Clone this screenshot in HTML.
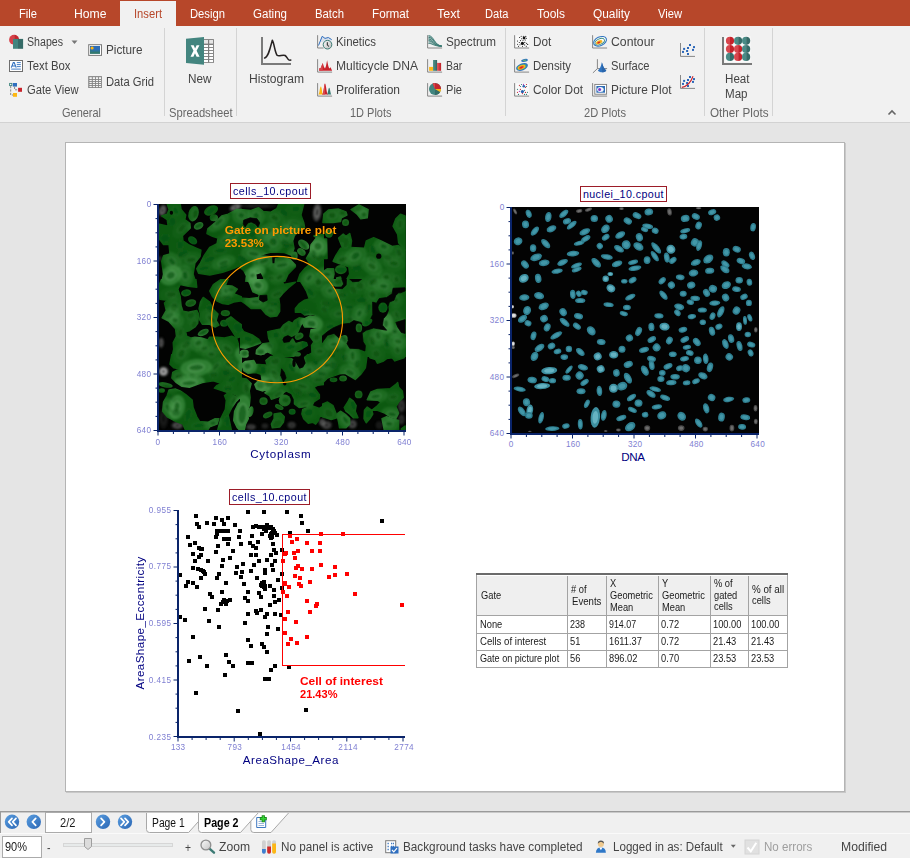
<!DOCTYPE html><html><head><meta charset="utf-8"><title>Layout</title><style>
*{box-sizing:border-box;margin:0;padding:0}
html,body{width:910px;height:858px;overflow:hidden;background:#e5e5e5}
body{position:relative;font-family:"Liberation Sans",sans-serif;font-size:13px;color:#444}
.abs{position:absolute}
.t{position:absolute;white-space:nowrap;line-height:16px;height:16px}
#tabbar{position:absolute;left:0;top:0;width:910px;height:26px;background:#b7472a}
#ribbon{position:absolute;left:0;top:26px;width:910px;height:97px;background:#f1f1f1;border-bottom:1px solid #d2d2d2}
.sep{position:absolute;width:1px;background:#d4d4d4;top:28px;height:88px}
#page{position:absolute;left:65px;top:142px;width:780px;height:650px;background:#fff;border:1px solid #b4b4b4;box-shadow:1px 1px 0 #c8c8c8}
#bottom{position:absolute;left:0;top:811px;width:910px;height:47px;background:#f0f0f0;border-top:1px solid #9a9a9a}
svg{position:absolute;overflow:visible}
</style></head><body>
<div id="tabbar"></div>
<div class="abs" style="left:120px;top:1px;width:56px;height:25px;background:#f1f1f1"></div>
<div class="t" style="left:19px;top:6px;font-size:12.5px;color:#fff;font-family:'Liberation Sans',sans-serif;transform:scaleX(0.8937);transform-origin:0 0;">File</div>
<div class="t" style="left:73.5px;top:6px;font-size:12.5px;color:#fff;font-family:'Liberation Sans',sans-serif;transform:scaleX(0.9748);transform-origin:0 0;">Home</div>
<div class="t" style="left:133.5px;top:6px;font-size:12.5px;color:#b7472a;font-family:'Liberation Sans',sans-serif;transform:scaleX(0.8957);transform-origin:0 0;">Insert</div>
<div class="t" style="left:189.5px;top:6px;font-size:12.5px;color:#fff;font-family:'Liberation Sans',sans-serif;transform:scaleX(0.8996);transform-origin:0 0;">Design</div>
<div class="t" style="left:252.5px;top:6px;font-size:12.5px;color:#fff;font-family:'Liberation Sans',sans-serif;transform:scaleX(0.9233);transform-origin:0 0;">Gating</div>
<div class="t" style="left:314.5px;top:6px;font-size:12.5px;color:#fff;font-family:'Liberation Sans',sans-serif;transform:scaleX(0.9073);transform-origin:0 0;">Batch</div>
<div class="t" style="left:371.5px;top:6px;font-size:12.5px;color:#fff;font-family:'Liberation Sans',sans-serif;transform:scaleX(0.9347);transform-origin:0 0;">Format</div>
<div class="t" style="left:436.5px;top:6px;font-size:12.5px;color:#fff;font-family:'Liberation Sans',sans-serif;transform:scaleX(1.0033);transform-origin:0 0;">Text</div>
<div class="t" style="left:485px;top:6px;font-size:12.5px;color:#fff;font-family:'Liberation Sans',sans-serif;transform:scaleX(0.8901);transform-origin:0 0;">Data</div>
<div class="t" style="left:536.5px;top:6px;font-size:12.5px;color:#fff;font-family:'Liberation Sans',sans-serif;transform:scaleX(0.9596);transform-origin:0 0;">Tools</div>
<div class="t" style="left:592.5px;top:6px;font-size:12.5px;color:#fff;font-family:'Liberation Sans',sans-serif;transform:scaleX(0.9511);transform-origin:0 0;">Quality</div>
<div class="t" style="left:657.5px;top:6px;font-size:12.5px;color:#fff;font-family:'Liberation Sans',sans-serif;transform:scaleX(0.8933);transform-origin:0 0;">View</div>
<div id="ribbon"></div>
<div class="t" style="left:26.7px;top:34px;font-size:12.5px;color:#444;font-family:'Liberation Sans',sans-serif;transform:scaleX(0.8492);transform-origin:0 0;">Shapes</div>
<div class="t" style="left:26.7px;top:58px;font-size:12.5px;color:#444;font-family:'Liberation Sans',sans-serif;transform:scaleX(0.9075);transform-origin:0 0;">Text Box</div>
<div class="t" style="left:26.7px;top:82px;font-size:12.5px;color:#444;font-family:'Liberation Sans',sans-serif;transform:scaleX(0.8966);transform-origin:0 0;">Gate View</div>
<div class="t" style="left:105.7px;top:42px;font-size:12.5px;color:#444;font-family:'Liberation Sans',sans-serif;transform:scaleX(0.9382);transform-origin:0 0;">Picture</div>
<div class="t" style="left:105.7px;top:74px;font-size:12.5px;color:#444;font-family:'Liberation Sans',sans-serif;transform:scaleX(0.8974);transform-origin:0 0;">Data Grid</div>
<div class="t" style="left:61.5px;top:105px;font-size:12.5px;color:#666;font-family:'Liberation Sans',sans-serif;transform:scaleX(0.8771);transform-origin:0 0;">General</div>
<div class="sep" style="left:164px"></div>
<div class="t" style="left:187.7px;top:71px;font-size:12.5px;color:#444;font-family:'Liberation Sans',sans-serif;transform:scaleX(0.9398);transform-origin:0 0;">New</div>
<div class="t" style="left:168.5px;top:105px;font-size:12.5px;color:#666;font-family:'Liberation Sans',sans-serif;transform:scaleX(0.8959);transform-origin:0 0;">Spreadsheet</div>
<div class="sep" style="left:236px"></div>
<div class="t" style="left:248.7px;top:71px;font-size:12.5px;color:#444;font-family:'Liberation Sans',sans-serif;transform:scaleX(0.9657);transform-origin:0 0;">Histogram</div>
<div class="t" style="left:335.7px;top:34px;font-size:12.5px;color:#444;font-family:'Liberation Sans',sans-serif;transform:scaleX(0.9139);transform-origin:0 0;">Kinetics</div>
<div class="t" style="left:335.7px;top:58px;font-size:12.5px;color:#444;font-family:'Liberation Sans',sans-serif;transform:scaleX(0.9677);transform-origin:0 0;">Multicycle DNA</div>
<div class="t" style="left:335.7px;top:82px;font-size:12.5px;color:#444;font-family:'Liberation Sans',sans-serif;transform:scaleX(0.9596);transform-origin:0 0;">Proliferation</div>
<div class="t" style="left:445.5px;top:34px;font-size:12.5px;color:#444;font-family:'Liberation Sans',sans-serif;transform:scaleX(0.9348);transform-origin:0 0;">Spectrum</div>
<div class="t" style="left:445.5px;top:58px;font-size:12.5px;color:#444;font-family:'Liberation Sans',sans-serif;transform:scaleX(0.8380);transform-origin:0 0;">Bar</div>
<div class="t" style="left:445.5px;top:82px;font-size:12.5px;color:#444;font-family:'Liberation Sans',sans-serif;transform:scaleX(0.8856);transform-origin:0 0;">Pie</div>
<div class="t" style="left:350px;top:105px;font-size:12.5px;color:#666;font-family:'Liberation Sans',sans-serif;transform:scaleX(0.8785);transform-origin:0 0;">1D Plots</div>
<div class="sep" style="left:505px"></div>
<div class="t" style="left:532.7px;top:34px;font-size:12.5px;color:#444;font-family:'Liberation Sans',sans-serif;transform:scaleX(0.9408);transform-origin:0 0;">Dot</div>
<div class="t" style="left:532.7px;top:58px;font-size:12.5px;color:#444;font-family:'Liberation Sans',sans-serif;transform:scaleX(0.9117);transform-origin:0 0;">Density</div>
<div class="t" style="left:532.7px;top:82px;font-size:12.5px;color:#444;font-family:'Liberation Sans',sans-serif;transform:scaleX(0.9471);transform-origin:0 0;">Color Dot</div>
<div class="t" style="left:610.7px;top:34px;font-size:12.5px;color:#444;font-family:'Liberation Sans',sans-serif;transform:scaleX(0.9783);transform-origin:0 0;">Contour</div>
<div class="t" style="left:610.7px;top:58px;font-size:12.5px;color:#444;font-family:'Liberation Sans',sans-serif;transform:scaleX(0.8938);transform-origin:0 0;">Surface</div>
<div class="t" style="left:610.7px;top:82px;font-size:12.5px;color:#444;font-family:'Liberation Sans',sans-serif;transform:scaleX(0.9466);transform-origin:0 0;">Picture Plot</div>
<div class="t" style="left:583.5px;top:105px;font-size:12.5px;color:#666;font-family:'Liberation Sans',sans-serif;transform:scaleX(0.8891);transform-origin:0 0;">2D Plots</div>
<div class="sep" style="left:704px"></div>
<div class="t" style="left:724.7px;top:71px;font-size:12.5px;color:#444;font-family:'Liberation Sans',sans-serif;transform:scaleX(0.9279);transform-origin:0 0;">Heat</div>
<div class="t" style="left:724.7px;top:86px;font-size:12.5px;color:#444;font-family:'Liberation Sans',sans-serif;transform:scaleX(0.9254);transform-origin:0 0;">Map</div>
<div class="t" style="left:709.5px;top:105px;font-size:12.5px;color:#666;font-family:'Liberation Sans',sans-serif;transform:scaleX(0.9357);transform-origin:0 0;">Other Plots</div>
<div class="sep" style="left:772px"></div>
<svg style="left:0;top:0" width="910" height="130" viewBox="0 0 910 130">
<defs>
<linearGradient id="gclock" x1="0" y1="0" x2="1" y2="1"><stop offset="0" stop-color="#fdfdfd"/><stop offset="1" stop-color="#b9b9b9"/></linearGradient>
</defs>
<!-- Shapes -->
<g>
<path d="M14.1 34.7 a5 5 0 0 0 0 10 z" fill="#d6424a"/>
<path d="M14.1 34.7 a5 5 0 0 1 0 10 z" fill="#c4262e"/>
<rect x="13" y="38.9" width="5" height="9.9" fill="#41857f"/>
<rect x="18" y="38.9" width="5.1" height="9.9" fill="#356b67"/>
<path d="M71.5 40.5h6l-3 3.5z" fill="#777"/>
</g>
<!-- Text Box -->
<g>
<rect x="9.5" y="60.5" width="13" height="11" fill="#fff" stroke="#6e6e6e"/>
<path d="M11.3 67.6l2-5h.9l2 5M12 66h3.4" fill="none" stroke="#2f6fbf" stroke-width="1.1"/>
<path d="M16.8 62.6h4M16.8 64.6h4M16.8 66.6h4M11.2 69.1h9.6" stroke="#2f6fbf" stroke-width="0.9"/>
</g>
<!-- Gate View -->
<g>
<rect x="9.6" y="83.4" width="2.2" height="2.2" fill="#fff" stroke="#3d837d" stroke-width="0.9"/>
<rect x="12.8" y="83" width="4.2" height="3.6" fill="#2f6fbf"/>
<rect x="18.1" y="87.8" width="3.9" height="4" fill="#c8232b"/>
<rect x="13" y="93" width="4" height="3.8" fill="#fdb714"/>
<path d="M10.7 86v9h2.3M14.6 86.8v3h3.5" fill="none" stroke="#7a7a7a" stroke-width="0.9" stroke-dasharray="2.2 1.2"/>
</g>
<!-- Picture -->
<g>
<rect x="88.7" y="44.7" width="12.8" height="10.7" fill="#fff" stroke="#7a7a7a"/>
<rect x="90" y="46" width="10" height="5" fill="#2d6db6"/>
<rect x="90" y="50.4" width="10" height="3.5" fill="#33796f"/>
<path d="M90 51.2 q5 -2 10 -0.6 v1 h-10z" fill="#2f74a6"/>
<circle cx="92.1" cy="48" r="1.6" fill="#fdb714"/>
</g>
<!-- Data Grid -->
<g>
<rect x="88.2" y="76.1" width="13.7" height="11.9" fill="#858585"/>
<g fill="#f4f4f4">
<rect x="89.4" y="77.2" width="2.4" height="1.9"/><rect x="92.8" y="77.2" width="2.2" height="1.9"/><rect x="95.9" y="77.2" width="2.2" height="1.9"/><rect x="99" y="77.2" width="2" height="1.9"/>
<rect x="89.4" y="80" width="2.4" height="1.1"/><rect x="92.8" y="80" width="2.2" height="1.1"/><rect x="95.9" y="80" width="2.2" height="1.1"/><rect x="99" y="80" width="2" height="1.1"/>
<rect x="89.4" y="82" width="2.4" height="1.1"/><rect x="92.8" y="82" width="2.2" height="1.1"/><rect x="95.9" y="82" width="2.2" height="1.1"/><rect x="99" y="82" width="2" height="1.1"/>
<rect x="89.4" y="84" width="2.4" height="1.1"/><rect x="92.8" y="84" width="2.2" height="1.1"/><rect x="95.9" y="84" width="2.2" height="1.1"/><rect x="99" y="84" width="2" height="1.1"/>
<rect x="89.4" y="86" width="2.4" height="1.1"/><rect x="92.8" y="86" width="2.2" height="1.1"/><rect x="95.9" y="86" width="2.2" height="1.1"/><rect x="99" y="86" width="2" height="1.1"/>
</g>
</g>
<!-- Excel New -->
<g>
<rect x="204" y="39.1" width="9.9" height="23.8" fill="#7d7d7d"/>
<g fill="#fff">
<rect x="204" y="40" width="4" height="3.6" fill="#e6e6e6"/><rect x="209.2" y="40" width="3.8" height="3.6" fill="#e6e6e6"/>
<rect x="204" y="45" width="4" height="2.1"/><rect x="209.2" y="45" width="3.8" height="2.1"/>
<rect x="204" y="48" width="4" height="2.1"/><rect x="209.2" y="48" width="3.8" height="2.1"/>
<rect x="204" y="51" width="4" height="2.1"/><rect x="209.2" y="51" width="3.8" height="2.1"/>
<rect x="204" y="54" width="4" height="2.1"/><rect x="209.2" y="54" width="3.8" height="2.1"/>
<rect x="204" y="57" width="4" height="2.1"/><rect x="209.2" y="57" width="3.8" height="2.1"/>
<rect x="204" y="60" width="4" height="2.1"/><rect x="209.2" y="60" width="3.8" height="2.1"/>
</g>
<path d="M186 38.8 L204 37 V64.8 L186 63z" fill="#43857f"/>
<path d="M190.7 45.2h3l1.4 3.2 1.5-3.2h2.9l-2.9 5.6 3 5.9h-3l-1.6-3.5-1.6 3.5h-2.9l3-5.9z" fill="#fff"/>
</g>
<!-- Histogram -->
<g>
<path d="M262 37V64H291" fill="none" stroke="#7a7a7a" stroke-width="2"/>
<path d="M264.6 58c3.5-.6 5.2-8 7.7-17.800c2.200 4 2.500 12.500 5 15.300c2 1.400 5.500-1.300 7.800 0c1.600 1 2.500 3.800 3.700 4.400c.8.400 1.500.3 2 .2" fill="none" stroke="#262222" stroke-width="1.5" stroke-linecap="round" stroke-linejoin="round"/>
</g>
<!-- Kinetics -->
<g>
<path d="M317.600 35.200V48H323.500" fill="none" stroke="#7a7a7a" stroke-width="0.9"/>
<path d="M318.500 45.500 322.200 36.300 325 38.400 328.300 37.500 331.700 39.600" fill="none" stroke="#2f6fbf" stroke-width="1" stroke-linejoin="round"/>
<path d="M322.200 36.300 325 38.400 328.300 37.500 331.700 39.600V42H320z" fill="#2f6fbf" opacity=".12"/>
<circle cx="327.500" cy="44.700" r="4.300" fill="url(#gclock)" stroke="#3b7a72" stroke-width="1"/>
<path d="M327.300 42.200V45.200L329 46.400" fill="none" stroke="#222" stroke-width="1"/>
</g>
<!-- Multicycle -->
<g>
<path d="M317.600 59.200V72.100H332.100" fill="none" stroke="#7a7a7a" stroke-width="0.9"/>
<path d="M319.100 70.700 L319.500 68 320.500 68.500 322.700 63.100 324 67 325 68.600 326 66 327.100 60.200 328.300 66 329.200 68.600 330.600 67.300 332.100 70.700z" fill="#c9222b"/>
<path d="M319.100 70.700 L319.500 68 320.500 68.500 322.700 63.100 V70.700z" fill="#d8464d"/>
</g>
<!-- Proliferation -->
<g>
<path d="M317.600 83.100V96.100H332.100" fill="none" stroke="#7a7a7a" stroke-width="0.9"/>
<path d="M318.300 94.500 C319.600 94 319.800 86.600 320.800 86.600 C321.900 86.600 322 94 323.100 94.500z" fill="#fdb714"/>
<path d="M327 94.500 C328 94 328.300 87.800 329.200 87.800 C330.100 87.800 330.400 94 331.400 94.500z" fill="#377a73"/>
<path d="M322.200 94.500 C323.800 94 324 83.600 325 83.600 C326.100 83.600 326.400 94 328 94.500z" fill="#c9222b"/>
<path d="M322.200 94.500 C323.800 94 324 83.600 325 83.600 V94.500z" fill="#d8464d"/>
</g>
<!-- Spectrum -->
<g>
<path d="M427.600 35.200V48H442.100" fill="none" stroke="#7a7a7a" stroke-width="0.9"/>
<g fill="none" stroke="#3a7b74" stroke-width="0.9">
<path d="M428.500 35.600C434 35.600 434.500 45.800 441.800 45.800"/>
<path d="M428.500 37.300C434 37.300 434 45.800 441.800 46"/>
<path d="M428.500 39C433 39 433.500 45.800 441.800 46.200"/>
<path d="M428.500 40.700C433 40.700 433 45.800 441.800 46.300"/>
<path d="M428.500 43.500C432 43 433 46 441.800 46.400"/>
</g>
<path d="M428.500 35.600C434 35.600 434.500 45.800 441.800 45.800V46.500C433 46.500 432 43 428.500 43.500z" fill="#3a7b74" opacity=".45"/>
</g>
<!-- Bar -->
<g>
<path d="M427.600 59.200V72.100H442.100" fill="none" stroke="#7a7a7a" stroke-width="0.9"/>
<rect x="429.100" y="66.900" width="4" height="3.900" fill="#fdb714"/>
<rect x="433.100" y="60" width="2" height="10.800" fill="#41857f"/><rect x="435.100" y="60" width="2" height="10.800" fill="#356b67"/>
<rect x="437.100" y="62.900" width="2" height="7.900" fill="#d8464d"/><rect x="439.100" y="62.900" width="2" height="7.900" fill="#c4262e"/>
</g>
<!-- Pie -->
<g>
<path d="M427.600 83.100V96.100H442.100" fill="none" stroke="#7a7a7a" stroke-width="0.9"/>
<circle cx="435" cy="89.100" r="6" fill="#41857f"/>
<path d="M435 89.100 L438 94.300 A6 6 0 0 1 435 95.100z" fill="#356b67"/>
<path d="M435 89.100 L438 94.300 A6 6 0 0 0 440.200 92.100z" fill="#356b67"/>
<path d="M435 89.100 L432.700 83.560 A6 6 0 0 1 441 89.100z" fill="#c4262e"/>
<path d="M435 89.100 L432.700 83.560 A6 6 0 0 1 435 83.100z" fill="#d8464d"/>
<path d="M435 89.100 L441 89.100 A6 6 0 0 1 440.200 92.100z" fill="#fdb714"/>
</g>
<!-- Dot -->
<g>
<rect x="515.500" y="35.400" width="13.500" height="12" fill="#fafafa"/>
<path d="M514.600 35.200V48H529.100" fill="none" stroke="#7a7a7a" stroke-width="0.9"/>
<g fill="#111">
<circle cx="524.100" cy="38" r="1.400"/><circle cx="522.400" cy="43.400" r="1.600"/>
<circle cx="523.300" cy="36.200" r=".55"/><circle cx="525.800" cy="36.400" r=".55"/><circle cx="521.200" cy="36.300" r=".55"/><circle cx="519.600" cy="37.500" r=".55"/><circle cx="526.400" cy="38.300" r=".55"/><circle cx="521.700" cy="38.700" r=".55"/><circle cx="525.300" cy="40" r=".55"/><circle cx="523" cy="40.300" r=".55"/><circle cx="520.400" cy="40.600" r=".55"/><circle cx="517.500" cy="41" r=".55"/><circle cx="519.300" cy="42.500" r=".55"/><circle cx="524.800" cy="42.400" r=".55"/><circle cx="526.500" cy="43.300" r=".55"/><circle cx="517.600" cy="44.200" r=".55"/><circle cx="520" cy="44.800" r=".55"/><circle cx="524.700" cy="44.900" r=".55"/><circle cx="527.700" cy="44.400" r=".55"/><circle cx="518.500" cy="46.300" r=".55"/><circle cx="522.500" cy="46.300" r=".55"/><circle cx="526.300" cy="46.300" r=".55"/>
</g>
</g>
<!-- Density -->
<g>
<path d="M514.600 59.200V72.100H529.100" fill="none" stroke="#7a7a7a" stroke-width="0.9"/>
<g transform="rotate(-22 522 66.900)">
<ellipse cx="522" cy="66.900" rx="6.200" ry="3.500" fill="#2f74c0"/>
<ellipse cx="521.700" cy="67" rx="4.900" ry="2.600" fill="#4aa58a"/>
<ellipse cx="521.500" cy="67" rx="4" ry="2" fill="#f4c021"/>
<ellipse cx="521.300" cy="67.100" rx="3" ry="1.400" fill="#f07a1c"/>
<ellipse cx="521.200" cy="67.100" rx="1.800" ry=".8" fill="#d8232b"/>
</g>
<g transform="rotate(-12 524.500 60.400)">
<ellipse cx="524.500" cy="60.400" rx="3.400" ry="1.500" fill="#2f74c0"/>
<ellipse cx="524.500" cy="60.400" rx="1.800" ry=".7" fill="#6bb26a"/>
</g>
</g>
<!-- Color Dot -->
<g>
<rect x="515.500" y="83.300" width="13.500" height="12" fill="#fafafa"/>
<path d="M514.600 83.100V96.100H529.100" fill="none" stroke="#7a7a7a" stroke-width="0.9"/>
<circle cx="523.800" cy="86.300" r="1.300" fill="#2b62b0"/><circle cx="522.400" cy="91.600" r="1.600" fill="#2b62b0"/>
<g fill="#c9222b"><circle cx="519.400" cy="85.300" r=".6"/><circle cx="526.500" cy="84.500" r=".6"/><circle cx="525.500" cy="87.300" r=".6"/><circle cx="520.400" cy="89.300" r=".6"/><circle cx="517.500" cy="92.300" r=".6"/><circle cx="525.500" cy="92.400" r=".6"/><circle cx="522.400" cy="93.600" r=".6"/></g>
<g fill="#2f7a72"><circle cx="521.500" cy="84.500" r=".6"/><circle cx="520.400" cy="86.500" r=".6"/><circle cx="526.500" cy="86.500" r=".6"/><circle cx="517.500" cy="89.300" r=".6"/><circle cx="524.500" cy="90.300" r=".6"/><circle cx="527.500" cy="92.300" r=".6"/><circle cx="518.500" cy="94.400" r=".6"/><circle cx="524.500" cy="94.400" r=".6"/><circle cx="526.500" cy="94.400" r=".6"/></g>
<g fill="#b03cc0"><circle cx="523.500" cy="84.400" r=".6"/><circle cx="519.400" cy="91.400" r=".6"/></g>
</g>
<!-- Contour -->
<g>
<path d="M592.600 35.200V48H607.100" fill="none" stroke="#7a7a7a" stroke-width="0.9"/>
<g transform="rotate(-24 600 41.300)">
<ellipse cx="600" cy="41.300" rx="6.800" ry="4.300" fill="#fff" stroke="#2f74c0" stroke-width="1.100"/>
<ellipse cx="599.600" cy="41.500" rx="5" ry="2.800" fill="#fff" stroke="#3d8c7c" stroke-width=".9"/>
<ellipse cx="598.900" cy="41.800" rx="3.400" ry="1.800" fill="#f7b51e"/>
<ellipse cx="598.400" cy="41.900" rx="1.600" ry=".8" fill="#d8232b"/>
</g>
</g>
<!-- Surface -->
<g>
<path d="M597.400 59.200V68.600M597.400 68.600L592.900 72.900M597.400 68.600H607.100" fill="none" stroke="#7a7a7a" stroke-width="0.9"/>
<path d="M601.900 62.300C603 66 604 69 606.300 70.400C605 72.800 599 72.800 597.900 70.400C600 69 601 66 601.900 62.300z" fill="#2f74c0"/>
<path d="M601.900 62.300C603 66 604 69 606.300 70.400C605.500 71.800 603.500 72.300 602 72.300z" fill="#2a66ac"/>
</g>
<!-- Picture Plot -->
<g>
<path d="M592.600 83.100V96.100H607.100" fill="none" stroke="#7a7a7a" stroke-width="0.9"/>
<rect x="594.800" y="84.400" width="11.800" height="9.800" fill="#fff" stroke="#7a7a7a" stroke-width="0.9"/>
<rect x="596.400" y="86" width="8.600" height="6.700" fill="#2d6db6"/>
<ellipse cx="600.400" cy="89.400" rx="3.300" ry="2.500" fill="#f2f5fb"/>
<circle cx="599.600" cy="89.500" r="1.500" fill="#7a35d0"/>
</g>
<!-- small scatter A -->
<g>
<path d="M680.500 43V56.400H695" fill="none" stroke="#7a7a7a" stroke-width="0.9"/>
<g fill="#2b66b8">
<rect x="689" y="44" width="2" height="2"/><rect x="693" y="46.100" width="2" height="2"/><rect x="683.100" y="47.900" width="2" height="2"/><rect x="687" y="47" width="2" height="2"/><rect x="692" y="48.900" width="2" height="2"/><rect x="686.100" y="50" width="2" height="2"/><rect x="682" y="50.900" width="2" height="2"/><rect x="687" y="53" width="2" height="2"/>
</g>
</g>
<!-- small scatter B -->
<g>
<path d="M680.500 75V88.400H695" fill="none" stroke="#7a7a7a" stroke-width="0.9"/>
<g fill="#2b66b8">
<rect x="689" y="76" width="2" height="2"/><rect x="693" y="78.100" width="2" height="2"/><rect x="683.100" y="79.900" width="2" height="2"/><rect x="687" y="79" width="2" height="2"/><rect x="692" y="80.900" width="2" height="2"/><rect x="686.100" y="82" width="2" height="2"/><rect x="682" y="82.900" width="2" height="2"/><rect x="687" y="85" width="2" height="2"/>
</g>
<path d="M681.800 87.400C688 86 691 82 693 76.200" fill="none" stroke="#c9222b" stroke-width="1.100"/>
</g>
<!-- Heat map -->
<g>
<rect x="724.500" y="36.300" width="26" height="26" fill="#fafafa"/>
<path d="M723 37V64H752" fill="none" stroke="#7a7a7a" stroke-width="2"/>
<path d="M730 36.699999999999996a4.1 4.1 0 0 0 0 8.2z" fill="#d8464d"/><path d="M730 36.699999999999996a4.1 4.1 0 0 1 0 8.2z" fill="#c4222a"/>
<path d="M738.1 36.699999999999996a4.1 4.1 0 0 0 0 8.2z" fill="#4a8b86"/><path d="M738.1 36.699999999999996a4.1 4.1 0 0 1 0 8.2z" fill="#356b68"/>
<path d="M746.1 36.699999999999996a4.1 4.1 0 0 0 0 8.2z" fill="#4a8b86"/><path d="M746.1 36.699999999999996a4.1 4.1 0 0 1 0 8.2z" fill="#356b68"/>
<path d="M730 44.9a4.1 4.1 0 0 0 0 8.2z" fill="#d8464d"/><path d="M730 44.9a4.1 4.1 0 0 1 0 8.2z" fill="#c4222a"/>
<path d="M738.1 44.9a4.1 4.1 0 0 0 0 8.2z" fill="#d8464d"/><path d="M738.1 44.9a4.1 4.1 0 0 1 0 8.2z" fill="#c4222a"/>
<path d="M746.1 44.9a4.1 4.1 0 0 0 0 8.2z" fill="#4a8b86"/><path d="M746.1 44.9a4.1 4.1 0 0 1 0 8.2z" fill="#356b68"/>
<path d="M730 52.8a4.1 4.1 0 0 0 0 8.2z" fill="#4a8b86"/><path d="M730 52.8a4.1 4.1 0 0 1 0 8.2z" fill="#356b68"/>
<path d="M738.1 52.8a4.1 4.1 0 0 0 0 8.2z" fill="#d8464d"/><path d="M738.1 52.8a4.1 4.1 0 0 1 0 8.2z" fill="#c4222a"/>
<path d="M746.1 52.8a4.1 4.1 0 0 0 0 8.2z" fill="#4a8b86"/><path d="M746.1 52.8a4.1 4.1 0 0 1 0 8.2z" fill="#356b68"/>
</g>
<!-- collapse caret -->
<path d="M888.500 114.500l3.500-3.500 3.500 3.500" fill="none" stroke="#666" stroke-width="1.600"/>
</svg>

<div id="page"></div>
<svg style="left:0;top:0" width="910" height="858" viewBox="0 0 910 858">
<defs>
<filter id="b1" x="-20%" y="-20%" width="140%" height="140%"><feGaussianBlur stdDeviation="0.7"/></filter>
<filter id="b2" x="-20%" y="-20%" width="140%" height="140%"><feGaussianBlur stdDeviation="1.2"/></filter>
<filter id="b3" x="-20%" y="-20%" width="140%" height="140%"><feGaussianBlur stdDeviation="0.45"/></filter>
<clipPath id="c1"><rect x="159" y="204" width="247" height="226"/></clipPath>
<clipPath id="c2"><rect x="512" y="207" width="247" height="226"/></clipPath>
</defs>
<g clip-path="url(#c2)">
<rect x="512" y="207" width="247" height="226" fill="#030303"/>
<g filter="url(#b1)">
<g transform="translate(515.1 211.5) rotate(62)"><ellipse rx="3.2" ry="1.4" fill="#4a4a4a"/><ellipse rx="2.0" ry="0.8" fill="#7a7a7a" opacity=".75"/></g>
<g transform="translate(528.7 213.8) rotate(70)"><ellipse rx="4.2" ry="2.8" fill="#2f7f90"/><ellipse rx="2.6" ry="1.7" fill="#4a9fb0" opacity=".75"/></g>
<g transform="translate(548.3 217.0) rotate(100)"><ellipse rx="5.1" ry="3.2" fill="#2f7f90"/><ellipse rx="3.1" ry="1.9" fill="#4a9fb0" opacity=".75"/></g>
<g transform="translate(563.8 213.8) rotate(-40)"><ellipse rx="5.5" ry="2.8" fill="#2f7f90"/><ellipse rx="3.4" ry="1.7" fill="#4a9fb0" opacity=".75"/></g>
<g transform="translate(579.2 211.0) rotate(-10)"><ellipse rx="3.2" ry="1.8" fill="#4a4a4a"/><ellipse rx="2.0" ry="1.1" fill="#7a7a7a" opacity=".75"/></g>
<g transform="translate(588.5 209.6) rotate(-20)"><ellipse rx="3.7" ry="1.7" fill="#4a4a4a"/><ellipse rx="2.3" ry="1.0" fill="#7a7a7a" opacity=".75"/></g>
<g transform="translate(525.5 224.4) rotate(80)"><ellipse rx="3.9" ry="3.5" fill="#2f7f90"/><ellipse rx="2.4" ry="2.1" fill="#4a9fb0" opacity=".75"/></g>
<g transform="translate(534.9 231.1) rotate(-50)"><ellipse rx="5.5" ry="2.8" fill="#2f7f90"/><ellipse rx="3.4" ry="1.7" fill="#4a9fb0" opacity=".75"/></g>
<g transform="translate(551.5 228.8) rotate(-25)"><ellipse rx="5.1" ry="3.2" fill="#2f7f90"/><ellipse rx="3.1" ry="1.9" fill="#4a9fb0" opacity=".75"/></g>
<g transform="translate(567.0 221.2) rotate(-20)"><ellipse rx="4.2" ry="3.0" fill="#2f7f90"/><ellipse rx="2.6" ry="1.8" fill="#4a9fb0" opacity=".75"/></g>
<g transform="translate(571.7 225.1) rotate(-40)"><ellipse rx="6.0" ry="2.6" fill="#2f7f90"/><ellipse rx="3.7" ry="1.6" fill="#4a9fb0" opacity=".75"/></g>
<g transform="translate(584.8 231.8) rotate(-25)"><ellipse rx="5.7" ry="3.0" fill="#2f7f90"/><ellipse rx="3.5" ry="1.8" fill="#4a9fb0" opacity=".75"/></g>
<g transform="translate(518.1 241.3) rotate(-20)"><ellipse rx="4.4" ry="3.9" fill="#2f7f90"/><ellipse rx="2.7" ry="2.3" fill="#4a9fb0" opacity=".75"/></g>
<g transform="translate(545.7 243.6) rotate(45)"><ellipse rx="5.7" ry="3.0" fill="#2f7f90"/><ellipse rx="3.5" ry="1.8" fill="#4a9fb0" opacity=".75"/></g>
<g transform="translate(585.7 238.7) rotate(-30)"><ellipse rx="5.1" ry="2.6" fill="#2f7f90"/><ellipse rx="3.1" ry="1.6" fill="#4a9fb0" opacity=".75"/></g>
<g transform="translate(579.2 243.1) rotate(-15)"><ellipse rx="5.5" ry="2.3" fill="#2f7f90"/><ellipse rx="3.4" ry="1.4" fill="#4a9fb0" opacity=".75"/></g>
<g transform="translate(533.1 248.1) rotate(90)"><ellipse rx="3.9" ry="3.2" fill="#2f7f90"/><ellipse rx="2.4" ry="1.9" fill="#4a9fb0" opacity=".75"/></g>
<g transform="translate(573.0 253.6) rotate(-5)"><ellipse rx="6.3" ry="2.8" fill="#2f7f90"/><ellipse rx="3.9" ry="1.7" fill="#4a9fb0" opacity=".75"/></g>
<g transform="translate(536.1 257.3) rotate(-20)"><ellipse rx="6.0" ry="3.5" fill="#2f7f90"/><ellipse rx="3.7" ry="2.1" fill="#4a9fb0" opacity=".75"/></g>
<g transform="translate(525.0 264.5) rotate(50)"><ellipse rx="4.6" ry="3.2" fill="#2f7f90"/><ellipse rx="2.9" ry="1.9" fill="#4a9fb0" opacity=".75"/></g>
<g transform="translate(544.2 262.9) rotate(-10)"><ellipse rx="5.4" ry="3.2" fill="#2f7f90"/><ellipse rx="3.3" ry="1.9" fill="#4a9fb0" opacity=".75"/></g>
<g transform="translate(562.6 262.4) rotate(-25)"><ellipse rx="5.7" ry="2.8" fill="#2f7f90"/><ellipse rx="3.5" ry="1.7" fill="#4a9fb0" opacity=".75"/></g>
<g transform="translate(576.5 265.5) rotate(-20)"><ellipse rx="5.7" ry="2.3" fill="#2f7f90"/><ellipse rx="3.5" ry="1.4" fill="#4a9fb0" opacity=".75"/></g>
<g transform="translate(576.7 269.6) rotate(-20)"><ellipse rx="5.1" ry="2.3" fill="#2f7f90"/><ellipse rx="3.1" ry="1.4" fill="#4a9fb0" opacity=".75"/></g>
<g transform="translate(557.1 271.2) rotate(-10)"><ellipse rx="5.7" ry="2.5" fill="#2f7f90"/><ellipse rx="3.5" ry="1.5" fill="#4a9fb0" opacity=".75"/></g>
<g transform="translate(523.8 278.4) rotate(-30)"><ellipse rx="5.1" ry="4.2" fill="#3c8fa0"/><ellipse rx="3.1" ry="2.5" fill="#74bfce" opacity=".75"/></g>
<g transform="translate(538.2 278.4) rotate(80)"><ellipse rx="4.6" ry="3.2" fill="#2f7f90"/><ellipse rx="2.9" ry="1.9" fill="#4a9fb0" opacity=".75"/></g>
<g transform="translate(512.8 253.0) rotate(90)"><ellipse rx="1.7" ry="1.1" fill="#4a4a4a"/><ellipse rx="1.0" ry="0.7" fill="#7a7a7a" opacity=".75"/></g>
<g transform="translate(594.3 218.4) rotate(0)"><ellipse rx="3.7" ry="3.5" fill="#2f7f90"/><ellipse rx="2.3" ry="2.1" fill="#4a9fb0" opacity=".75"/></g>
<g transform="translate(609.1 218.8) rotate(60)"><ellipse rx="3.9" ry="3.7" fill="#2f7f90"/><ellipse rx="2.4" ry="2.2" fill="#4a9fb0" opacity=".75"/></g>
<g transform="translate(627.8 220.9) rotate(30)"><ellipse rx="4.4" ry="3.2" fill="#2f7f90"/><ellipse rx="2.7" ry="1.9" fill="#4a9fb0" opacity=".75"/></g>
<g transform="translate(637.0 215.6) rotate(25)"><ellipse rx="4.6" ry="3.0" fill="#2f7f90"/><ellipse rx="2.9" ry="1.8" fill="#4a9fb0" opacity=".75"/></g>
<g transform="translate(648.8 211.9) rotate(-10)"><ellipse rx="4.3" ry="3.4" fill="#2f7f90"/><ellipse rx="2.7" ry="2.0" fill="#4a9fb0" opacity=".75"/></g>
<g transform="translate(669.5 211.9) rotate(80)"><ellipse rx="3.7" ry="2.3" fill="#4a4a4a"/><ellipse rx="2.3" ry="1.4" fill="#7a7a7a" opacity=".75"/></g>
<g transform="translate(621.5 208.7) rotate(0)"><ellipse rx="2.3" ry="1.4" fill="#4a4a4a"/><ellipse rx="1.4" ry="0.8" fill="#7a7a7a" opacity=".75"/></g>
<g transform="translate(605.4 228.8) rotate(-45)"><ellipse rx="4.8" ry="3.7" fill="#2f7f90"/><ellipse rx="3.0" ry="2.2" fill="#4a9fb0" opacity=".75"/></g>
<g transform="translate(647.7 226.2) rotate(10)"><ellipse rx="5.5" ry="2.6" fill="#2f7f90"/><ellipse rx="3.4" ry="1.6" fill="#4a9fb0" opacity=".75"/></g>
<g transform="translate(644.6 229.5) rotate(20)"><ellipse rx="3.7" ry="2.3" fill="#2f7f90"/><ellipse rx="2.3" ry="1.4" fill="#4a9fb0" opacity=".75"/></g>
<g transform="translate(655.2 230.7) rotate(30)"><ellipse rx="3.5" ry="3.0" fill="#2f7f90"/><ellipse rx="2.2" ry="1.8" fill="#4a9fb0" opacity=".75"/></g>
<g transform="translate(620.2 235.0) rotate(-30)"><ellipse rx="5.4" ry="3.2" fill="#2f7f90"/><ellipse rx="3.3" ry="1.9" fill="#4a9fb0" opacity=".75"/></g>
<g transform="translate(605.7 237.3) rotate(-35)"><ellipse rx="4.2" ry="2.8" fill="#2f7f90"/><ellipse rx="2.6" ry="1.7" fill="#4a9fb0" opacity=".75"/></g>
<g transform="translate(639.4 237.3) rotate(70)"><ellipse rx="4.2" ry="3.5" fill="#2f7f90"/><ellipse rx="2.6" ry="2.1" fill="#4a9fb0" opacity=".75"/></g>
<g transform="translate(599.8 246.1) rotate(45)"><ellipse rx="3.2" ry="3.0" fill="#2f7f90"/><ellipse rx="2.0" ry="1.8" fill="#4a9fb0" opacity=".75"/></g>
<g transform="translate(626.2 244.7) rotate(60)"><ellipse rx="4.6" ry="4.4" fill="#2f7f90"/><ellipse rx="2.9" ry="2.7" fill="#4a9fb0" opacity=".75"/></g>
<g transform="translate(619.0 248.8) rotate(30)"><ellipse rx="5.4" ry="3.0" fill="#2f7f90"/><ellipse rx="3.3" ry="1.8" fill="#4a9fb0" opacity=".75"/></g>
<g transform="translate(638.4 246.5) rotate(30)"><ellipse rx="5.4" ry="3.7" fill="#2f7f90"/><ellipse rx="3.3" ry="2.2" fill="#4a9fb0" opacity=".75"/></g>
<g transform="translate(656.2 247.9) rotate(50)"><ellipse rx="6.9" ry="2.8" fill="#2f7f90"/><ellipse rx="4.3" ry="1.7" fill="#4a9fb0" opacity=".75"/></g>
<g transform="translate(670.9 249.3) rotate(45)"><ellipse rx="4.6" ry="4.4" fill="#3c8fa0"/><ellipse rx="2.9" ry="2.7" fill="#74bfce" opacity=".75"/></g>
<g transform="translate(606.8 256.9) rotate(10)"><ellipse rx="6.0" ry="2.6" fill="#2f7f90"/><ellipse rx="3.7" ry="1.6" fill="#4a9fb0" opacity=".75"/></g>
<g transform="translate(654.8 256.2) rotate(55)"><ellipse rx="6.0" ry="2.6" fill="#2f7f90"/><ellipse rx="3.7" ry="1.6" fill="#4a9fb0" opacity=".75"/></g>
<g transform="translate(666.8 257.6) rotate(80)"><ellipse rx="5.1" ry="2.8" fill="#2f7f90"/><ellipse rx="3.1" ry="1.7" fill="#4a9fb0" opacity=".75"/></g>
<g transform="translate(672.8 260.4) rotate(-40)"><ellipse rx="4.2" ry="2.8" fill="#2f7f90"/><ellipse rx="2.6" ry="1.7" fill="#4a9fb0" opacity=".75"/></g>
<g transform="translate(647.1 260.1) rotate(90)"><ellipse rx="3.9" ry="3.4" fill="#2f7f90"/><ellipse rx="2.4" ry="2.0" fill="#4a9fb0" opacity=".75"/></g>
<g transform="translate(596.2 262.7) rotate(45)"><ellipse rx="6.0" ry="3.2" fill="#2f7f90"/><ellipse rx="3.7" ry="1.9" fill="#4a9fb0" opacity=".75"/></g>
<g transform="translate(617.1 263.8) rotate(-20)"><ellipse rx="5.4" ry="3.0" fill="#2f7f90"/><ellipse rx="3.3" ry="1.8" fill="#4a9fb0" opacity=".75"/></g>
<g transform="translate(633.1 262.2) rotate(-15)"><ellipse rx="5.1" ry="2.3" fill="#2f7f90"/><ellipse rx="3.1" ry="1.4" fill="#4a9fb0" opacity=".75"/></g>
<g transform="translate(634.9 268.2) rotate(-10)"><ellipse rx="6.5" ry="2.6" fill="#2f7f90"/><ellipse rx="4.0" ry="1.6" fill="#4a9fb0" opacity=".75"/></g>
<g transform="translate(610.3 274.0) rotate(0)"><ellipse rx="2.8" ry="2.0" fill="#3c8fa0"/><ellipse rx="1.7" ry="1.2" fill="#74bfce" opacity=".75"/></g>
<g transform="translate(605.7 278.8) rotate(0)"><ellipse rx="3.2" ry="3.2" fill="#3c8fa0"/><ellipse rx="2.0" ry="1.9" fill="#74bfce" opacity=".75"/></g>
<g transform="translate(624.3 281.2) rotate(0)"><ellipse rx="3.2" ry="2.3" fill="#2f7f90"/><ellipse rx="2.0" ry="1.4" fill="#4a9fb0" opacity=".75"/></g>
<g transform="translate(632.6 280.2) rotate(-30)"><ellipse rx="4.2" ry="2.8" fill="#2f7f90"/><ellipse rx="2.6" ry="1.7" fill="#4a9fb0" opacity=".75"/></g>
<g transform="translate(662.2 280.7) rotate(-45)"><ellipse rx="4.2" ry="2.8" fill="#2f7f90"/><ellipse rx="2.6" ry="1.7" fill="#4a9fb0" opacity=".75"/></g>
<g transform="translate(685.2 218.4) rotate(-10)"><ellipse rx="4.4" ry="3.5" fill="#2f7f90"/><ellipse rx="2.7" ry="2.1" fill="#4a9fb0" opacity=".75"/></g>
<g transform="translate(695.8 216.5) rotate(25)"><ellipse rx="4.2" ry="3.0" fill="#2f7f90"/><ellipse rx="2.6" ry="1.8" fill="#4a9fb0" opacity=".75"/></g>
<g transform="translate(712.2 212.2) rotate(-20)"><ellipse rx="4.2" ry="2.8" fill="#2f7f90"/><ellipse rx="2.6" ry="1.7" fill="#4a9fb0" opacity=".75"/></g>
<g transform="translate(716.9 217.6) rotate(-30)"><ellipse rx="3.2" ry="3.2" fill="#2f7f90"/><ellipse rx="2.0" ry="1.9" fill="#4a9fb0" opacity=".75"/></g>
<g transform="translate(698.6 225.5) rotate(-70)"><ellipse rx="3.9" ry="3.2" fill="#2f7f90"/><ellipse rx="2.4" ry="1.9" fill="#4a9fb0" opacity=".75"/></g>
<g transform="translate(753.1 227.2) rotate(100)"><ellipse rx="4.2" ry="2.8" fill="#2f7f90"/><ellipse rx="2.6" ry="1.7" fill="#4a9fb0" opacity=".75"/></g>
<g transform="translate(685.2 230.8) rotate(-15)"><ellipse rx="5.1" ry="2.3" fill="#2f7f90"/><ellipse rx="3.1" ry="1.4" fill="#4a9fb0" opacity=".75"/></g>
<g transform="translate(683.4 236.7) rotate(-5)"><ellipse rx="3.9" ry="2.8" fill="#2f7f90"/><ellipse rx="2.4" ry="1.7" fill="#4a9fb0" opacity=".75"/></g>
<g transform="translate(694.9 242.4) rotate(-60)"><ellipse rx="4.2" ry="3.9" fill="#2f7f90"/><ellipse rx="2.6" ry="2.3" fill="#4a9fb0" opacity=".75"/></g>
<g transform="translate(699.1 245.6) rotate(-75)"><ellipse rx="5.5" ry="2.8" fill="#2f7f90"/><ellipse rx="3.4" ry="1.7" fill="#4a9fb0" opacity=".75"/></g>
<g transform="translate(726.3 252.3) rotate(90)"><ellipse rx="4.2" ry="3.5" fill="#2f7f90"/><ellipse rx="2.6" ry="2.1" fill="#4a9fb0" opacity=".75"/></g>
<g transform="translate(736.7 249.3) rotate(20)"><ellipse rx="4.2" ry="3.2" fill="#2f7f90"/><ellipse rx="2.6" ry="1.9" fill="#4a9fb0" opacity=".75"/></g>
<g transform="translate(752.0 255.8) rotate(70)"><ellipse rx="4.4" ry="2.8" fill="#2f7f90"/><ellipse rx="2.7" ry="1.7" fill="#4a9fb0" opacity=".75"/></g>
<g transform="translate(708.3 259.0) rotate(-35)"><ellipse rx="5.5" ry="3.9" fill="#2f7f90"/><ellipse rx="3.4" ry="2.3" fill="#4a9fb0" opacity=".75"/></g>
<g transform="translate(695.8 262.4) rotate(-20)"><ellipse rx="5.1" ry="3.0" fill="#2f7f90"/><ellipse rx="3.1" ry="1.8" fill="#4a9fb0" opacity=".75"/></g>
<g transform="translate(740.9 261.0) rotate(20)"><ellipse rx="4.4" ry="3.0" fill="#2f7f90"/><ellipse rx="2.7" ry="1.8" fill="#4a9fb0" opacity=".75"/></g>
<g transform="translate(746.8 266.4) rotate(10)"><ellipse rx="5.1" ry="3.0" fill="#2f7f90"/><ellipse rx="3.1" ry="1.8" fill="#4a9fb0" opacity=".75"/></g>
<g transform="translate(725.4 264.1) rotate(40)"><ellipse rx="4.6" ry="2.8" fill="#2f7f90"/><ellipse rx="2.9" ry="1.7" fill="#4a9fb0" opacity=".75"/></g>
<g transform="translate(724.9 269.3) rotate(35)"><ellipse rx="5.1" ry="3.2" fill="#2f7f90"/><ellipse rx="3.1" ry="1.9" fill="#4a9fb0" opacity=".75"/></g>
<g transform="translate(709.7 270.8) rotate(-5)"><ellipse rx="4.6" ry="3.0" fill="#2f7f90"/><ellipse rx="2.9" ry="1.8" fill="#4a9fb0" opacity=".75"/></g>
<g transform="translate(693.5 273.0) rotate(-10)"><ellipse rx="4.8" ry="3.5" fill="#2f7f90"/><ellipse rx="3.0" ry="2.1" fill="#4a9fb0" opacity=".75"/></g>
<g transform="translate(680.2 277.3) rotate(10)"><ellipse rx="4.4" ry="2.8" fill="#2f7f90"/><ellipse rx="2.7" ry="1.7" fill="#4a9fb0" opacity=".75"/></g>
<g transform="translate(739.2 280.2) rotate(0)"><ellipse rx="3.7" ry="3.2" fill="#2f7f90"/><ellipse rx="2.3" ry="1.9" fill="#4a9fb0" opacity=".75"/></g>
<g transform="translate(698.6 208.2) rotate(0)"><ellipse rx="2.8" ry="1.1" fill="#4a4a4a"/><ellipse rx="1.7" ry="0.7" fill="#7a7a7a" opacity=".75"/></g>
<g transform="translate(524.3 297.5) rotate(-5)"><ellipse rx="5.1" ry="3.2" fill="#2f7f90"/><ellipse rx="3.1" ry="1.9" fill="#4a9fb0" opacity=".75"/></g>
<g transform="translate(539.1 295.7) rotate(15)"><ellipse rx="5.1" ry="3.5" fill="#2f7f90"/><ellipse rx="3.1" ry="2.1" fill="#4a9fb0" opacity=".75"/></g>
<g transform="translate(543.7 306.3) rotate(-25)"><ellipse rx="5.4" ry="3.5" fill="#2f7f90"/><ellipse rx="3.3" ry="2.1" fill="#4a9fb0" opacity=".75"/></g>
<g transform="translate(527.1 310.5) rotate(-70)"><ellipse rx="4.6" ry="3.9" fill="#2f7f90"/><ellipse rx="2.9" ry="2.3" fill="#4a9fb0" opacity=".75"/></g>
<g transform="translate(513.7 315.5) rotate(0)"><ellipse rx="2.8" ry="2.3" fill="#b0b0b0"/><ellipse rx="1.7" ry="1.4" fill="#f0f0f0" opacity=".75"/></g>
<g transform="translate(512.8 306.8) rotate(90)"><ellipse rx="1.8" ry="1.1" fill="#b0b0b0"/><ellipse rx="1.1" ry="0.7" fill="#f0f0f0" opacity=".75"/></g>
<g transform="translate(522.5 318.8) rotate(-35)"><ellipse rx="5.1" ry="3.2" fill="#2f7f90"/><ellipse rx="3.1" ry="1.9" fill="#4a9fb0" opacity=".75"/></g>
<g transform="translate(528.0 323.2) rotate(20)"><ellipse rx="3.5" ry="3.0" fill="#2f7f90"/><ellipse rx="2.2" ry="1.8" fill="#4a9fb0" opacity=".75"/></g>
<g transform="translate(544.0 318.6) rotate(-30)"><ellipse rx="3.9" ry="3.7" fill="#2f7f90"/><ellipse rx="2.4" ry="2.2" fill="#4a9fb0" opacity=".75"/></g>
<g transform="translate(547.2 327.4) rotate(-65)"><ellipse rx="4.2" ry="3.2" fill="#2f7f90"/><ellipse rx="2.6" ry="1.9" fill="#4a9fb0" opacity=".75"/></g>
<g transform="translate(533.5 335.8) rotate(-75)"><ellipse rx="4.4" ry="2.8" fill="#2f7f90"/><ellipse rx="2.7" ry="1.7" fill="#4a9fb0" opacity=".75"/></g>
<g transform="translate(556.2 335.4) rotate(-30)"><ellipse rx="6.5" ry="2.8" fill="#2f7f90"/><ellipse rx="4.0" ry="1.7" fill="#4a9fb0" opacity=".75"/></g>
<g transform="translate(572.8 294.3) rotate(85)"><ellipse rx="4.6" ry="2.8" fill="#2f7f90"/><ellipse rx="2.9" ry="1.7" fill="#4a9fb0" opacity=".75"/></g>
<g transform="translate(578.8 293.8) rotate(60)"><ellipse rx="3.2" ry="2.6" fill="#2f7f90"/><ellipse rx="2.0" ry="1.6" fill="#4a9fb0" opacity=".75"/></g>
<g transform="translate(584.3 292.5) rotate(10)"><ellipse rx="3.5" ry="2.6" fill="#2f7f90"/><ellipse rx="2.2" ry="1.6" fill="#4a9fb0" opacity=".75"/></g>
<g transform="translate(580.2 300.5) rotate(0)"><ellipse rx="5.1" ry="2.6" fill="#2f7f90"/><ellipse rx="3.1" ry="1.6" fill="#4a9fb0" opacity=".75"/></g>
<g transform="translate(563.1 312.1) rotate(60)"><ellipse rx="4.2" ry="3.5" fill="#2f7f90"/><ellipse rx="2.6" ry="2.1" fill="#4a9fb0" opacity=".75"/></g>
<g transform="translate(578.5 316.2) rotate(15)"><ellipse rx="4.6" ry="3.0" fill="#2f7f90"/><ellipse rx="2.9" ry="1.8" fill="#4a9fb0" opacity=".75"/></g>
<g transform="translate(564.6 322.3) rotate(40)"><ellipse rx="6.0" ry="2.8" fill="#2f7f90"/><ellipse rx="3.7" ry="1.7" fill="#4a9fb0" opacity=".75"/></g>
<g transform="translate(576.9 326.2) rotate(35)"><ellipse rx="4.4" ry="2.8" fill="#2f7f90"/><ellipse rx="2.7" ry="1.7" fill="#4a9fb0" opacity=".75"/></g>
<g transform="translate(591.2 330.8) rotate(50)"><ellipse rx="5.1" ry="3.9" fill="#2f7f90"/><ellipse rx="3.1" ry="2.3" fill="#4a9fb0" opacity=".75"/></g>
<g transform="translate(539.5 347.8) rotate(-35)"><ellipse rx="5.5" ry="3.2" fill="#2f7f90"/><ellipse rx="3.4" ry="1.9" fill="#4a9fb0" opacity=".75"/></g>
<g transform="translate(551.5 346.0) rotate(-30)"><ellipse rx="3.9" ry="3.2" fill="#2f7f90"/><ellipse rx="2.4" ry="1.9" fill="#4a9fb0" opacity=".75"/></g>
<g transform="translate(557.5 351.4) rotate(-15)"><ellipse rx="3.9" ry="2.6" fill="#2f7f90"/><ellipse rx="2.4" ry="1.6" fill="#4a9fb0" opacity=".75"/></g>
<g transform="translate(568.9 349.0) rotate(0)"><ellipse rx="3.2" ry="3.2" fill="#2f7f90"/><ellipse rx="2.0" ry="1.9" fill="#4a9fb0" opacity=".75"/></g>
<g transform="translate(580.3 352.0) rotate(40)"><ellipse rx="5.1" ry="3.0" fill="#2f7f90"/><ellipse rx="3.1" ry="1.8" fill="#4a9fb0" opacity=".75"/></g>
<g transform="translate(513.2 343.7) rotate(90)"><ellipse rx="2.3" ry="1.7" fill="#b0b0b0"/><ellipse rx="1.4" ry="1.0" fill="#f0f0f0" opacity=".75"/></g>
<g transform="translate(513.2 347.4) rotate(0)"><ellipse rx="1.7" ry="1.7" fill="#4a4a4a"/><ellipse rx="1.0" ry="1.0" fill="#7a7a7a" opacity=".75"/></g>
<g transform="translate(610.9 288.3) rotate(30)"><ellipse rx="4.6" ry="3.9" fill="#3c8fa0"/><ellipse rx="2.9" ry="2.3" fill="#74bfce" opacity=".75"/></g>
<g transform="translate(671.4 285.1) rotate(60)"><ellipse rx="3.7" ry="3.5" fill="#2f7f90"/><ellipse rx="2.3" ry="2.1" fill="#4a9fb0" opacity=".75"/></g>
<g transform="translate(630.3 297.1) rotate(-25)"><ellipse rx="5.5" ry="2.6" fill="#2f7f90"/><ellipse rx="3.4" ry="1.6" fill="#4a9fb0" opacity=".75"/></g>
<g transform="translate(663.5 295.2) rotate(50)"><ellipse rx="5.5" ry="2.8" fill="#2f7f90"/><ellipse rx="3.4" ry="1.7" fill="#4a9fb0" opacity=".75"/></g>
<g transform="translate(608.6 304.7) rotate(5)"><ellipse rx="5.1" ry="2.3" fill="#2f7f90"/><ellipse rx="3.1" ry="1.4" fill="#4a9fb0" opacity=".75"/></g>
<g transform="translate(626.9 307.4) rotate(0)"><ellipse rx="3.9" ry="2.6" fill="#2f7f90"/><ellipse rx="2.4" ry="1.6" fill="#4a9fb0" opacity=".75"/></g>
<g transform="translate(623.8 313.7) rotate(15)"><ellipse rx="4.2" ry="2.3" fill="#2f7f90"/><ellipse rx="2.6" ry="1.4" fill="#4a9fb0" opacity=".75"/></g>
<g transform="translate(658.9 315.8) rotate(5)"><ellipse rx="4.6" ry="2.6" fill="#2f7f90"/><ellipse rx="2.9" ry="1.6" fill="#4a9fb0" opacity=".75"/></g>
<g transform="translate(651.4 326.9) rotate(85)"><ellipse rx="4.2" ry="3.0" fill="#2f7f90"/><ellipse rx="2.6" ry="1.8" fill="#4a9fb0" opacity=".75"/></g>
<g transform="translate(664.5 326.6) rotate(10)"><ellipse rx="5.1" ry="3.9" fill="#3c8fa0"/><ellipse rx="3.1" ry="2.3" fill="#74bfce" opacity=".75"/></g>
<g transform="translate(638.6 331.5) rotate(-65)"><ellipse rx="4.8" ry="3.0" fill="#2f7f90"/><ellipse rx="3.0" ry="1.8" fill="#4a9fb0" opacity=".75"/></g>
<g transform="translate(629.4 338.0) rotate(-30)"><ellipse rx="3.7" ry="3.5" fill="#2f7f90"/><ellipse rx="2.3" ry="2.1" fill="#4a9fb0" opacity=".75"/></g>
<g transform="translate(601.2 342.0) rotate(10)"><ellipse rx="4.4" ry="3.0" fill="#2f7f90"/><ellipse rx="2.7" ry="1.8" fill="#4a9fb0" opacity=".75"/></g>
<g transform="translate(651.8 339.5) rotate(-30)"><ellipse rx="4.6" ry="2.8" fill="#2f7f90"/><ellipse rx="2.9" ry="1.7" fill="#4a9fb0" opacity=".75"/></g>
<g transform="translate(669.4 340.5) rotate(-60)"><ellipse rx="3.9" ry="3.2" fill="#2f7f90"/><ellipse rx="2.4" ry="1.9" fill="#4a9fb0" opacity=".75"/></g>
<g transform="translate(622.0 349.2) rotate(0)"><ellipse rx="3.5" ry="3.5" fill="#2f7f90"/><ellipse rx="2.2" ry="2.1" fill="#4a9fb0" opacity=".75"/></g>
<g transform="translate(656.6 347.4) rotate(-45)"><ellipse rx="3.9" ry="3.9" fill="#2f7f90"/><ellipse rx="2.4" ry="2.3" fill="#4a9fb0" opacity=".75"/></g>
<g transform="translate(644.0 349.9) rotate(-15)"><ellipse rx="5.1" ry="2.8" fill="#2f7f90"/><ellipse rx="3.1" ry="1.7" fill="#4a9fb0" opacity=".75"/></g>
<g transform="translate(613.7 354.8) rotate(0)"><ellipse rx="4.6" ry="3.7" fill="#3c8fa0"/><ellipse rx="2.9" ry="2.2" fill="#74bfce" opacity=".75"/></g>
<g transform="translate(672.8 354.3) rotate(0)"><ellipse rx="3.9" ry="2.8" fill="#2f7f90"/><ellipse rx="2.4" ry="1.7" fill="#4a9fb0" opacity=".75"/></g>
<g transform="translate(691.2 285.1) rotate(-15)"><ellipse rx="4.2" ry="3.5" fill="#2f7f90"/><ellipse rx="2.6" ry="2.1" fill="#4a9fb0" opacity=".75"/></g>
<g transform="translate(683.2 293.8) rotate(0)"><ellipse rx="3.5" ry="3.0" fill="#2f7f90"/><ellipse rx="2.2" ry="1.8" fill="#4a9fb0" opacity=".75"/></g>
<g transform="translate(712.9 288.8) rotate(20)"><ellipse rx="4.2" ry="3.9" fill="#2f7f90"/><ellipse rx="2.6" ry="2.3" fill="#4a9fb0" opacity=".75"/></g>
<g transform="translate(706.5 292.9) rotate(60)"><ellipse rx="4.2" ry="3.2" fill="#2f7f90"/><ellipse rx="2.6" ry="1.9" fill="#4a9fb0" opacity=".75"/></g>
<g transform="translate(726.3 285.1) rotate(-25)"><ellipse rx="4.8" ry="3.7" fill="#2f7f90"/><ellipse rx="3.0" ry="2.2" fill="#4a9fb0" opacity=".75"/></g>
<g transform="translate(736.5 289.2) rotate(10)"><ellipse rx="4.4" ry="2.8" fill="#2f7f90"/><ellipse rx="2.7" ry="1.7" fill="#4a9fb0" opacity=".75"/></g>
<g transform="translate(749.4 282.3) rotate(80)"><ellipse rx="3.5" ry="2.8" fill="#2f7f90"/><ellipse rx="2.2" ry="1.7" fill="#4a9fb0" opacity=".75"/></g>
<g transform="translate(725.6 297.5) rotate(60)"><ellipse rx="3.9" ry="3.5" fill="#2f7f90"/><ellipse rx="2.4" ry="2.1" fill="#4a9fb0" opacity=".75"/></g>
<g transform="translate(744.0 296.8) rotate(-25)"><ellipse rx="3.9" ry="2.8" fill="#2f7f90"/><ellipse rx="2.4" ry="1.7" fill="#4a9fb0" opacity=".75"/></g>
<g transform="translate(748.9 302.9) rotate(90)"><ellipse rx="3.2" ry="3.0" fill="#2f7f90"/><ellipse rx="2.0" ry="1.8" fill="#4a9fb0" opacity=".75"/></g>
<g transform="translate(695.2 298.3) rotate(5)"><ellipse rx="4.8" ry="2.6" fill="#2f7f90"/><ellipse rx="3.0" ry="1.6" fill="#4a9fb0" opacity=".75"/></g>
<g transform="translate(690.3 302.2) rotate(15)"><ellipse rx="3.7" ry="2.6" fill="#2f7f90"/><ellipse rx="2.3" ry="1.6" fill="#4a9fb0" opacity=".75"/></g>
<g transform="translate(714.8 303.1) rotate(-5)"><ellipse rx="5.5" ry="2.6" fill="#2f7f90"/><ellipse rx="3.4" ry="1.6" fill="#4a9fb0" opacity=".75"/></g>
<g transform="translate(679.2 306.8) rotate(15)"><ellipse rx="5.1" ry="3.2" fill="#2f7f90"/><ellipse rx="3.1" ry="1.9" fill="#4a9fb0" opacity=".75"/></g>
<g transform="translate(677.4 312.8) rotate(50)"><ellipse rx="3.7" ry="2.8" fill="#2f7f90"/><ellipse rx="2.3" ry="1.7" fill="#4a9fb0" opacity=".75"/></g>
<g transform="translate(702.3 310.0) rotate(0)"><ellipse rx="4.6" ry="2.6" fill="#2f7f90"/><ellipse rx="2.9" ry="1.6" fill="#4a9fb0" opacity=".75"/></g>
<g transform="translate(720.8 311.8) rotate(-65)"><ellipse rx="6.0" ry="3.0" fill="#2f7f90"/><ellipse rx="3.7" ry="1.8" fill="#4a9fb0" opacity=".75"/></g>
<g transform="translate(736.5 310.6) rotate(-60)"><ellipse rx="4.2" ry="3.7" fill="#2f7f90"/><ellipse rx="2.6" ry="2.2" fill="#4a9fb0" opacity=".75"/></g>
<g transform="translate(691.9 316.6) rotate(-10)"><ellipse rx="4.2" ry="2.6" fill="#2f7f90"/><ellipse rx="2.6" ry="1.6" fill="#4a9fb0" opacity=".75"/></g>
<g transform="translate(712.5 316.2) rotate(-70)"><ellipse rx="3.9" ry="2.8" fill="#2f7f90"/><ellipse rx="2.4" ry="1.7" fill="#4a9fb0" opacity=".75"/></g>
<g transform="translate(745.0 320.4) rotate(85)"><ellipse rx="4.4" ry="2.0" fill="#2f7f90"/><ellipse rx="2.7" ry="1.2" fill="#4a9fb0" opacity=".75"/></g>
<g transform="translate(749.8 317.8) rotate(70)"><ellipse rx="3.9" ry="2.3" fill="#2f7f90"/><ellipse rx="2.4" ry="1.4" fill="#4a9fb0" opacity=".75"/></g>
<g transform="translate(702.8 322.3) rotate(0)"><ellipse rx="3.2" ry="2.8" fill="#2f7f90"/><ellipse rx="2.0" ry="1.7" fill="#4a9fb0" opacity=".75"/></g>
<g transform="translate(718.9 326.6) rotate(-25)"><ellipse rx="3.7" ry="2.8" fill="#2f7f90"/><ellipse rx="2.3" ry="1.7" fill="#4a9fb0" opacity=".75"/></g>
<g transform="translate(739.0 326.6) rotate(90)"><ellipse rx="4.4" ry="3.0" fill="#3c8fa0"/><ellipse rx="2.7" ry="1.8" fill="#74bfce" opacity=".75"/></g>
<g transform="translate(682.9 329.7) rotate(-15)"><ellipse rx="4.4" ry="2.8" fill="#2f7f90"/><ellipse rx="2.7" ry="1.7" fill="#4a9fb0" opacity=".75"/></g>
<g transform="translate(712.0 331.2) rotate(75)"><ellipse rx="4.6" ry="3.0" fill="#2f7f90"/><ellipse rx="2.9" ry="1.8" fill="#4a9fb0" opacity=".75"/></g>
<g transform="translate(747.8 334.5) rotate(0)"><ellipse rx="3.2" ry="2.8" fill="#2f7f90"/><ellipse rx="2.0" ry="1.7" fill="#4a9fb0" opacity=".75"/></g>
<g transform="translate(684.8 339.5) rotate(-25)"><ellipse rx="4.6" ry="2.8" fill="#2f7f90"/><ellipse rx="2.9" ry="1.7" fill="#4a9fb0" opacity=".75"/></g>
<g transform="translate(696.8 342.0) rotate(50)"><ellipse rx="4.6" ry="3.2" fill="#2f7f90"/><ellipse rx="2.9" ry="1.9" fill="#4a9fb0" opacity=".75"/></g>
<g transform="translate(731.1 338.6) rotate(75)"><ellipse rx="4.4" ry="3.0" fill="#2f7f90"/><ellipse rx="2.7" ry="1.8" fill="#4a9fb0" opacity=".75"/></g>
<g transform="translate(725.4 344.0) rotate(70)"><ellipse rx="5.1" ry="3.0" fill="#2f7f90"/><ellipse rx="3.1" ry="1.8" fill="#4a9fb0" opacity=".75"/></g>
<g transform="translate(739.5 346.0) rotate(75)"><ellipse rx="5.1" ry="2.8" fill="#2f7f90"/><ellipse rx="3.1" ry="1.7" fill="#4a9fb0" opacity=".75"/></g>
<g transform="translate(751.2 344.6) rotate(15)"><ellipse rx="4.2" ry="2.8" fill="#2f7f90"/><ellipse rx="2.6" ry="1.7" fill="#4a9fb0" opacity=".75"/></g>
<g transform="translate(686.9 347.2) rotate(-10)"><ellipse rx="4.2" ry="2.3" fill="#2f7f90"/><ellipse rx="2.6" ry="1.4" fill="#4a9fb0" opacity=".75"/></g>
<g transform="translate(689.8 352.9) rotate(15)"><ellipse rx="3.9" ry="2.8" fill="#2f7f90"/><ellipse rx="2.4" ry="1.7" fill="#4a9fb0" opacity=".75"/></g>
<g transform="translate(750.6 352.9) rotate(70)"><ellipse rx="3.7" ry="2.8" fill="#2f7f90"/><ellipse rx="2.3" ry="1.7" fill="#4a9fb0" opacity=".75"/></g>
<g transform="translate(755.8 329.8) rotate(90)"><ellipse rx="2.8" ry="1.8" fill="#4a4a4a"/><ellipse rx="1.7" ry="1.1" fill="#7a7a7a" opacity=".75"/></g>
<g transform="translate(534.5 356.4) rotate(-65)"><ellipse rx="4.9" ry="3.6" fill="#2f7f90"/><ellipse rx="3.0" ry="2.2" fill="#4a9fb0" opacity=".75"/></g>
<g transform="translate(564.3 357.1) rotate(0)"><ellipse rx="3.8" ry="2.8" fill="#2f7f90"/><ellipse rx="2.3" ry="1.7" fill="#4a9fb0" opacity=".75"/></g>
<g transform="translate(549.2 370.6) rotate(-5)"><ellipse rx="8.0" ry="3.6" fill="#3c8fa0"/><ellipse rx="5.0" ry="2.2" fill="#74bfce" opacity=".75"/></g>
<g transform="translate(569.0 369.6) rotate(-50)"><ellipse rx="4.9" ry="2.1" fill="#2f7f90"/><ellipse rx="3.0" ry="1.2" fill="#4a9fb0" opacity=".75"/></g>
<g transform="translate(582.9 367.3) rotate(15)"><ellipse rx="5.2" ry="3.0" fill="#2f7f90"/><ellipse rx="3.2" ry="1.8" fill="#4a9fb0" opacity=".75"/></g>
<g transform="translate(515.7 375.8) rotate(-25)"><ellipse rx="3.8" ry="1.7" fill="#4a4a4a"/><ellipse rx="2.3" ry="1.0" fill="#7a7a7a" opacity=".75"/></g>
<g transform="translate(532.2 380.0) rotate(5)"><ellipse rx="4.7" ry="3.3" fill="#2f7f90"/><ellipse rx="2.9" ry="2.0" fill="#4a9fb0" opacity=".75"/></g>
<g transform="translate(545.4 379.1) rotate(15)"><ellipse rx="4.0" ry="2.8" fill="#2f7f90"/><ellipse rx="2.5" ry="1.7" fill="#4a9fb0" opacity=".75"/></g>
<g transform="translate(552.5 380.7) rotate(0)"><ellipse rx="3.6" ry="2.6" fill="#2f7f90"/><ellipse rx="2.2" ry="1.6" fill="#4a9fb0" opacity=".75"/></g>
<g transform="translate(566.6 377.7) rotate(0)"><ellipse rx="4.2" ry="3.0" fill="#2f7f90"/><ellipse rx="2.6" ry="1.8" fill="#4a9fb0" opacity=".75"/></g>
<g transform="translate(579.6 375.6) rotate(45)"><ellipse rx="4.0" ry="4.0" fill="#2f7f90"/><ellipse rx="2.5" ry="2.4" fill="#4a9fb0" opacity=".75"/></g>
<g transform="translate(584.6 382.4) rotate(-35)"><ellipse rx="4.7" ry="2.6" fill="#2f7f90"/><ellipse rx="2.9" ry="1.6" fill="#4a9fb0" opacity=".75"/></g>
<g transform="translate(542.1 386.1) rotate(-5)"><ellipse rx="8.0" ry="3.0" fill="#3c8fa0"/><ellipse rx="5.0" ry="1.8" fill="#74bfce" opacity=".75"/></g>
<g transform="translate(519.7 389.2) rotate(10)"><ellipse rx="6.1" ry="2.4" fill="#2f7f90"/><ellipse rx="3.8" ry="1.4" fill="#4a9fb0" opacity=".75"/></g>
<g transform="translate(581.0 391.3) rotate(0)"><ellipse rx="4.5" ry="3.0" fill="#2f7f90"/><ellipse rx="2.8" ry="1.8" fill="#4a9fb0" opacity=".75"/></g>
<g transform="translate(526.5 402.2) rotate(80)"><ellipse rx="4.0" ry="3.6" fill="#2f7f90"/><ellipse rx="2.5" ry="2.2" fill="#4a9fb0" opacity=".75"/></g>
<g transform="translate(586.9 403.8) rotate(-65)"><ellipse rx="4.5" ry="2.4" fill="#2f7f90"/><ellipse rx="2.8" ry="1.4" fill="#4a9fb0" opacity=".75"/></g>
<g transform="translate(521.8 411.4) rotate(55)"><ellipse rx="5.5" ry="3.0" fill="#2f7f90"/><ellipse rx="3.4" ry="1.8" fill="#4a9fb0" opacity=".75"/></g>
<g transform="translate(529.8 410.2) rotate(-80)"><ellipse rx="5.7" ry="3.3" fill="#3c8fa0"/><ellipse rx="3.5" ry="2.0" fill="#74bfce" opacity=".75"/></g>
<g transform="translate(528.9 415.4) rotate(0)"><ellipse rx="3.8" ry="3.3" fill="#2f7f90"/><ellipse rx="2.3" ry="2.0" fill="#4a9fb0" opacity=".75"/></g>
<g transform="translate(541.1 417.8) rotate(-75)"><ellipse rx="5.9" ry="2.6" fill="#2f7f90"/><ellipse rx="3.6" ry="1.6" fill="#4a9fb0" opacity=".75"/></g>
<g transform="translate(580.3 424.2) rotate(88)"><ellipse rx="5.2" ry="2.5" fill="#2f7f90"/><ellipse rx="3.2" ry="1.5" fill="#4a9fb0" opacity=".75"/></g>
<g transform="translate(565.9 426.1) rotate(-15)"><ellipse rx="3.8" ry="2.6" fill="#2f7f90"/><ellipse rx="2.3" ry="1.6" fill="#4a9fb0" opacity=".75"/></g>
<g transform="translate(552.3 428.6) rotate(-3)"><ellipse rx="7.1" ry="2.4" fill="#2f7f90"/><ellipse rx="4.4" ry="1.4" fill="#4a9fb0" opacity=".75"/></g>
<g transform="translate(529.8 431.3) rotate(0)"><ellipse rx="1.9" ry="0.6" fill="#4a4a4a"/><ellipse rx="1.2" ry="0.3" fill="#7a7a7a" opacity=".75"/></g>
<g transform="translate(597.7 356.4) rotate(-30)"><ellipse rx="4.0" ry="3.8" fill="#3c8fa0"/><ellipse rx="2.5" ry="2.3" fill="#74bfce" opacity=".75"/></g>
<g transform="translate(651.5 358.8) rotate(15)"><ellipse rx="4.5" ry="2.8" fill="#2f7f90"/><ellipse rx="2.8" ry="1.7" fill="#4a9fb0" opacity=".75"/></g>
<g transform="translate(628.3 364.4) rotate(-20)"><ellipse rx="4.7" ry="3.3" fill="#2f7f90"/><ellipse rx="2.9" ry="2.0" fill="#4a9fb0" opacity=".75"/></g>
<g transform="translate(600.7 369.0) rotate(-20)"><ellipse rx="4.0" ry="3.8" fill="#3c8fa0"/><ellipse rx="2.5" ry="2.3" fill="#74bfce" opacity=".75"/></g>
<g transform="translate(651.7 365.2) rotate(80)"><ellipse rx="4.9" ry="2.8" fill="#2f7f90"/><ellipse rx="3.0" ry="1.7" fill="#4a9fb0" opacity=".75"/></g>
<g transform="translate(668.0 366.3) rotate(-25)"><ellipse rx="4.7" ry="2.8" fill="#2f7f90"/><ellipse rx="2.9" ry="1.7" fill="#4a9fb0" opacity=".75"/></g>
<g transform="translate(616.4 372.9) rotate(80)"><ellipse rx="3.8" ry="3.3" fill="#2f7f90"/><ellipse rx="2.3" ry="2.0" fill="#4a9fb0" opacity=".75"/></g>
<g transform="translate(644.9 370.6) rotate(60)"><ellipse rx="5.5" ry="3.3" fill="#2f7f90"/><ellipse rx="3.4" ry="2.0" fill="#4a9fb0" opacity=".75"/></g>
<g transform="translate(662.3 372.9) rotate(0)"><ellipse rx="3.3" ry="2.8" fill="#2f7f90"/><ellipse rx="2.0" ry="1.7" fill="#4a9fb0" opacity=".75"/></g>
<g transform="translate(627.9 378.1) rotate(60)"><ellipse rx="5.9" ry="3.3" fill="#2f7f90"/><ellipse rx="3.6" ry="2.0" fill="#4a9fb0" opacity=".75"/></g>
<g transform="translate(660.9 378.9) rotate(0)"><ellipse rx="3.6" ry="3.0" fill="#2f7f90"/><ellipse rx="2.2" ry="1.8" fill="#4a9fb0" opacity=".75"/></g>
<g transform="translate(675.1 376.7) rotate(0)"><ellipse rx="4.7" ry="2.8" fill="#2f7f90"/><ellipse rx="2.9" ry="1.7" fill="#4a9fb0" opacity=".75"/></g>
<g transform="translate(671.3 382.6) rotate(-5)"><ellipse rx="5.2" ry="2.6" fill="#2f7f90"/><ellipse rx="3.2" ry="1.6" fill="#4a9fb0" opacity=".75"/></g>
<g transform="translate(613.5 388.2) rotate(0)"><ellipse rx="4.5" ry="4.5" fill="#3c8fa0"/><ellipse rx="2.8" ry="2.7" fill="#74bfce" opacity=".75"/></g>
<g transform="translate(622.2 386.1) rotate(-20)"><ellipse rx="5.2" ry="4.2" fill="#2f7f90"/><ellipse rx="3.2" ry="2.5" fill="#4a9fb0" opacity=".75"/></g>
<g transform="translate(599.4 390.9) rotate(85)"><ellipse rx="5.2" ry="2.8" fill="#2f7f90"/><ellipse rx="3.2" ry="1.7" fill="#4a9fb0" opacity=".75"/></g>
<g transform="translate(655.2 389.2) rotate(15)"><ellipse rx="5.9" ry="2.5" fill="#2f7f90"/><ellipse rx="3.6" ry="1.5" fill="#4a9fb0" opacity=".75"/></g>
<g transform="translate(651.0 393.9) rotate(35)"><ellipse rx="5.2" ry="3.0" fill="#2f7f90"/><ellipse rx="3.2" ry="1.8" fill="#4a9fb0" opacity=".75"/></g>
<g transform="translate(665.1 397.7) rotate(20)"><ellipse rx="5.2" ry="2.6" fill="#2f7f90"/><ellipse rx="3.2" ry="1.6" fill="#4a9fb0" opacity=".75"/></g>
<g transform="translate(631.5 397.5) rotate(-35)"><ellipse rx="5.2" ry="2.6" fill="#2f7f90"/><ellipse rx="3.2" ry="1.6" fill="#4a9fb0" opacity=".75"/></g>
<g transform="translate(616.4 404.1) rotate(10)"><ellipse rx="4.0" ry="3.6" fill="#2f7f90"/><ellipse rx="2.5" ry="2.2" fill="#4a9fb0" opacity=".75"/></g>
<g transform="translate(638.5 403.1) rotate(10)"><ellipse rx="4.0" ry="3.6" fill="#2f7f90"/><ellipse rx="2.5" ry="2.2" fill="#4a9fb0" opacity=".75"/></g>
<g transform="translate(656.9 406.9) rotate(-10)"><ellipse rx="5.2" ry="2.4" fill="#2f7f90"/><ellipse rx="3.2" ry="1.4" fill="#4a9fb0" opacity=".75"/></g>
<g transform="translate(632.4 409.9) rotate(25)"><ellipse rx="4.7" ry="2.4" fill="#2f7f90"/><ellipse rx="2.9" ry="1.4" fill="#4a9fb0" opacity=".75"/></g>
<g transform="translate(645.1 414.7) rotate(-10)"><ellipse rx="3.3" ry="2.8" fill="#2f7f90"/><ellipse rx="2.0" ry="1.7" fill="#4a9fb0" opacity=".75"/></g>
<g transform="translate(661.8 415.4) rotate(-30)"><ellipse rx="4.7" ry="4.0" fill="#2f7f90"/><ellipse rx="2.9" ry="2.4" fill="#4a9fb0" opacity=".75"/></g>
<g transform="translate(603.8 415.4) rotate(-80)"><ellipse rx="5.5" ry="2.8" fill="#2f7f90"/><ellipse rx="3.4" ry="1.7" fill="#4a9fb0" opacity=".75"/></g>
<g transform="translate(595.3 417.3) rotate(-85)"><ellipse rx="10.4" ry="4.7" fill="#3c8fa0"/><ellipse rx="6.4" ry="2.8" fill="#74bfce" opacity=".75"/></g>
<g transform="translate(621.3 418.0) rotate(-20)"><ellipse rx="5.2" ry="2.6" fill="#2f7f90"/><ellipse rx="3.2" ry="1.6" fill="#4a9fb0" opacity=".75"/></g>
<g transform="translate(630.2 426.7) rotate(-35)"><ellipse rx="5.7" ry="4.0" fill="#2f7f90"/><ellipse rx="3.5" ry="2.4" fill="#4a9fb0" opacity=".75"/></g>
<g transform="translate(647.2 428.1) rotate(0)"><ellipse rx="3.0" ry="2.8" fill="#4a4a4a"/><ellipse rx="1.9" ry="1.7" fill="#7a7a7a" opacity=".75"/></g>
<g transform="translate(618.4 430.0) rotate(0)"><ellipse rx="2.4" ry="1.4" fill="#4a4a4a"/><ellipse rx="1.5" ry="0.8" fill="#7a7a7a" opacity=".75"/></g>
<g transform="translate(605.7 431.0) rotate(0)"><ellipse rx="1.9" ry="0.8" fill="#4a4a4a"/><ellipse rx="1.2" ry="0.5" fill="#7a7a7a" opacity=".75"/></g>
<g transform="translate(684.5 358.8) rotate(-10)"><ellipse rx="4.5" ry="2.6" fill="#2f7f90"/><ellipse rx="2.8" ry="1.6" fill="#4a9fb0" opacity=".75"/></g>
<g transform="translate(697.9 360.2) rotate(0)"><ellipse rx="3.8" ry="3.8" fill="#2f7f90"/><ellipse rx="2.3" ry="2.3" fill="#4a9fb0" opacity=".75"/></g>
<g transform="translate(705.7 358.8) rotate(85)"><ellipse rx="5.2" ry="2.8" fill="#2f7f90"/><ellipse rx="3.2" ry="1.7" fill="#4a9fb0" opacity=".75"/></g>
<g transform="translate(729.3 356.9) rotate(40)"><ellipse rx="3.8" ry="3.6" fill="#2f7f90"/><ellipse rx="2.3" ry="2.2" fill="#4a9fb0" opacity=".75"/></g>
<g transform="translate(710.0 367.3) rotate(-75)"><ellipse rx="4.9" ry="3.0" fill="#2f7f90"/><ellipse rx="3.0" ry="1.8" fill="#4a9fb0" opacity=".75"/></g>
<g transform="translate(679.8 368.2) rotate(-20)"><ellipse rx="3.8" ry="2.8" fill="#2f7f90"/><ellipse rx="2.3" ry="1.7" fill="#4a9fb0" opacity=".75"/></g>
<g transform="translate(685.9 368.2) rotate(30)"><ellipse rx="4.2" ry="4.0" fill="#2f7f90"/><ellipse rx="2.6" ry="2.4" fill="#4a9fb0" opacity=".75"/></g>
<g transform="translate(702.9 375.8) rotate(25)"><ellipse rx="4.9" ry="3.3" fill="#2f7f90"/><ellipse rx="3.0" ry="2.0" fill="#4a9fb0" opacity=".75"/></g>
<g transform="translate(696.0 381.2) rotate(-25)"><ellipse rx="4.0" ry="2.6" fill="#2f7f90"/><ellipse rx="2.5" ry="1.6" fill="#4a9fb0" opacity=".75"/></g>
<g transform="translate(686.6 382.8) rotate(-5)"><ellipse rx="3.8" ry="2.4" fill="#2f7f90"/><ellipse rx="2.3" ry="1.4" fill="#4a9fb0" opacity=".75"/></g>
<g transform="translate(711.6 397.5) rotate(30)"><ellipse rx="3.8" ry="3.6" fill="#2f7f90"/><ellipse rx="2.3" ry="2.2" fill="#4a9fb0" opacity=".75"/></g>
<g transform="translate(728.6 399.4) rotate(-10)"><ellipse rx="5.5" ry="2.6" fill="#2f7f90"/><ellipse rx="3.4" ry="1.6" fill="#4a9fb0" opacity=".75"/></g>
<g transform="translate(746.3 400.1) rotate(-10)"><ellipse rx="4.0" ry="2.8" fill="#2f7f90"/><ellipse rx="2.5" ry="1.7" fill="#4a9fb0" opacity=".75"/></g>
<g transform="translate(706.2 408.3) rotate(75)"><ellipse rx="5.2" ry="3.0" fill="#2f7f90"/><ellipse rx="3.2" ry="1.8" fill="#4a9fb0" opacity=".75"/></g>
<g transform="translate(681.7 416.3) rotate(50)"><ellipse rx="4.7" ry="4.0" fill="#2f7f90"/><ellipse rx="2.9" ry="2.4" fill="#4a9fb0" opacity=".75"/></g>
<g transform="translate(721.5 417.1) rotate(-80)"><ellipse rx="4.5" ry="3.3" fill="#2f7f90"/><ellipse rx="2.8" ry="2.0" fill="#4a9fb0" opacity=".75"/></g>
<g transform="translate(745.2 417.3) rotate(10)"><ellipse rx="4.9" ry="2.8" fill="#2f7f90"/><ellipse rx="3.0" ry="1.7" fill="#4a9fb0" opacity=".75"/></g>
<g transform="translate(698.7 423.1) rotate(55)"><ellipse rx="5.2" ry="2.8" fill="#2f7f90"/><ellipse rx="3.2" ry="1.7" fill="#4a9fb0" opacity=".75"/></g>
<g transform="translate(742.1 426.9) rotate(5)"><ellipse rx="4.0" ry="2.8" fill="#2f7f90"/><ellipse rx="2.5" ry="1.7" fill="#4a9fb0" opacity=".75"/></g>
<g transform="translate(681.2 428.1) rotate(0)"><ellipse rx="3.3" ry="2.8" fill="#4a4a4a"/><ellipse rx="2.0" ry="1.7" fill="#7a7a7a" opacity=".75"/></g>
<g transform="translate(705.3 429.1) rotate(0)"><ellipse rx="2.6" ry="2.4" fill="#4a4a4a"/><ellipse rx="1.6" ry="1.4" fill="#7a7a7a" opacity=".75"/></g>
<g transform="translate(731.9 428.1) rotate(90)"><ellipse rx="3.3" ry="2.4" fill="#4a4a4a"/><ellipse rx="2.0" ry="1.4" fill="#7a7a7a" opacity=".75"/></g>
<g transform="translate(755.5 408.3) rotate(90)"><ellipse rx="3.3" ry="1.9" fill="#4a4a4a"/><ellipse rx="2.0" ry="1.1" fill="#7a7a7a" opacity=".75"/></g>
<g transform="translate(755.8 421.5) rotate(90)"><ellipse rx="2.8" ry="1.9" fill="#4a4a4a"/><ellipse rx="1.8" ry="1.1" fill="#7a7a7a" opacity=".75"/></g>
</g></g>
<rect x="510" y="207" width="2" height="228" fill="#0a246a"/>
<rect x="510" y="433" width="249" height="2" fill="#0a246a"/>
<path d="M506.5 207.5h3.5 M508.5 221.6h1.5 M508.5 235.8h1.5 M508.5 249.9h1.5 M506.5 264.0h3.5 M508.5 278.1h1.5 M508.5 292.2h1.5 M508.5 306.4h1.5 M506.5 320.5h3.5 M508.5 334.6h1.5 M508.5 348.8h1.5 M508.5 362.9h1.5 M506.5 377.0h3.5 M508.5 391.1h1.5 M508.5 405.2h1.5 M508.5 419.4h1.5 M506.5 433.5h3.5 M511.0 435v3.5 M526.4 435v2 M541.8 435v2 M557.1 435v2 M572.5 435v3.5 M587.9 435v2 M603.2 435v2 M618.6 435v2 M634.0 435v3.5 M649.4 435v2 M664.8 435v2 M680.1 435v2 M695.5 435v3.5 M710.9 435v2 M726.2 435v2 M741.6 435v2 M757.0 435v3.5" stroke="#0a246a" stroke-width="1" fill="none"/>
<text x="499.85" y="210.3" font-family="Liberation Sans,sans-serif" font-size="8.2" fill="#7f7fd2" text-anchor="start" textLength="4.1499999999999995" lengthAdjust="spacing">0</text>
<text x="489.75" y="266.8" font-family="Liberation Sans,sans-serif" font-size="8.2" fill="#7f7fd2" text-anchor="start" textLength="14.249999999999998" lengthAdjust="spacing">160</text>
<text x="489.75" y="323.3" font-family="Liberation Sans,sans-serif" font-size="8.2" fill="#7f7fd2" text-anchor="start" textLength="14.249999999999998" lengthAdjust="spacing">320</text>
<text x="489.75" y="379.8" font-family="Liberation Sans,sans-serif" font-size="8.2" fill="#7f7fd2" text-anchor="start" textLength="14.249999999999998" lengthAdjust="spacing">480</text>
<text x="489.75" y="436.3" font-family="Liberation Sans,sans-serif" font-size="8.2" fill="#7f7fd2" text-anchor="start" textLength="14.249999999999998" lengthAdjust="spacing">640</text>
<text x="508.725" y="446.9" font-family="Liberation Sans,sans-serif" font-size="8.2" fill="#7f7fd2" text-anchor="start" textLength="4.1499999999999995" lengthAdjust="spacing">0</text>
<text x="565.875" y="446.9" font-family="Liberation Sans,sans-serif" font-size="8.2" fill="#7f7fd2" text-anchor="start" textLength="14.249999999999998" lengthAdjust="spacing">160</text>
<text x="627.875" y="446.9" font-family="Liberation Sans,sans-serif" font-size="8.2" fill="#7f7fd2" text-anchor="start" textLength="14.249999999999998" lengthAdjust="spacing">320</text>
<text x="689.175" y="446.9" font-family="Liberation Sans,sans-serif" font-size="8.2" fill="#7f7fd2" text-anchor="start" textLength="14.249999999999998" lengthAdjust="spacing">480</text>
<text x="750.475" y="446.9" font-family="Liberation Sans,sans-serif" font-size="8.2" fill="#7f7fd2" text-anchor="start" textLength="14.249999999999998" lengthAdjust="spacing">640</text>
<text x="621.2" y="460.6" font-family="Liberation Sans,sans-serif" font-size="11.6" fill="#000080" text-anchor="start" textLength="23.8" lengthAdjust="spacing">DNA</text>
<rect x="580.5" y="186.5" width="86" height="15" fill="#fff" stroke="#9c1c28" stroke-width="1"/>
<text x="582.9" y="198.4" font-family="Liberation Sans,sans-serif" font-size="10.7" fill="#000080" text-anchor="start" textLength="80.6" lengthAdjust="spacing">nuclei_10.cpout</text>
<defs>
<clipPath id="tc0"><rect x="158" y="204" width="84" height="78"/></clipPath>
<clipPath id="tc1"><rect x="240" y="204" width="84" height="78"/></clipPath>
<clipPath id="tc2"><rect x="322" y="204" width="84" height="78"/></clipPath>
<clipPath id="tc3"><rect x="158" y="279" width="84" height="78"/></clipPath>
<clipPath id="tc4"><rect x="240" y="279" width="84" height="78"/></clipPath>
<clipPath id="tc5"><rect x="322" y="279" width="84" height="78"/></clipPath>
<clipPath id="tc6"><rect x="158" y="354" width="84" height="78"/></clipPath>
<clipPath id="tc7"><rect x="240" y="354" width="84" height="78"/></clipPath>
<clipPath id="tc8"><rect x="322" y="354" width="84" height="78"/></clipPath>
<mask id="cm" maskUnits="userSpaceOnUse" x="155" y="200" width="255" height="236">
<rect x="155" y="200" width="255" height="236" fill="#000"/>
<g filter="url(#b3)">
<g clip-path="url(#tc0)"><g transform="translate(158 204) scale(0.09231)">
<polygon points="100,0 240,0 250,60 300,120 290,170 345,210 350,260 265,345 270,400 330,440 420,480 465,500 455,570 400,640 380,760 410,850 40,850 60,760 40,620 60,560 130,540 120,440 60,440 15,380 15,220 110,240 100,170 40,130 100,110 120,60" fill="#fff" stroke="#fff" stroke-width="16" stroke-linejoin="round"/>
<ellipse cx="385" cy="105" rx="55" ry="85" fill="#fff" transform="rotate(15 385 105)"/>
<ellipse cx="575" cy="70" rx="80" ry="50" fill="#fff" transform="rotate(-25 575 70)"/>
<ellipse cx="605" cy="150" rx="45" ry="38" fill="#fff" transform="rotate(0 605 150)"/>
<ellipse cx="440" cy="237" rx="55" ry="38" fill="#fff" transform="rotate(-25 440 237)"/>
<ellipse cx="375" cy="395" rx="55" ry="38" fill="#fff" transform="rotate(35 375 395)"/>
<polygon points="910,60 850,60 760,110 690,130 620,200 540,270 530,320 590,350 650,370 640,430 560,470 500,560 460,640 420,700 440,750 560,770 700,740 840,690 910,660" fill="#fff" stroke="#fff" stroke-width="16" stroke-linejoin="round"/>
<ellipse cx="145" cy="95" rx="18" ry="22" fill="#000" transform="rotate(0 145 95)"/>
</g></g>
<g clip-path="url(#tc1)"><g transform="translate(240 204) scale(0.09231)">
<polygon points="0,60 120,70 200,40 250,80 330,90 400,50 420,0 690,0 660,120 690,200 700,255 640,290 590,340 570,400 585,480 560,555 480,525 340,520 285,535 200,560 100,600 0,660" fill="#fff" stroke="#fff" stroke-width="16" stroke-linejoin="round"/>
<polygon points="40,175 110,150 185,160 215,205 195,250 165,215 120,195 85,205 55,250 35,215" fill="#000" stroke="#000" stroke-width="8" stroke-linejoin="round"/>
<polygon points="0,690 0,660 100,600 200,560 340,570 345,650 380,650 385,590 470,575 540,600 600,660 600,680 520,760 480,850 250,850 260,800 230,740 170,760 180,850 60,850 70,780 40,720" fill="#fff" stroke="#fff" stroke-width="16" stroke-linejoin="round"/>
<ellipse cx="690" cy="440" rx="45" ry="70" fill="#fff" transform="rotate(-50 690 440)"/>
<ellipse cx="665" cy="520" rx="35" ry="50" fill="#fff" transform="rotate(-55 665 520)"/>
<ellipse cx="590" cy="560" rx="35" ry="45" fill="#fff" transform="rotate(0 590 560)"/>
<polygon points="910,330 860,330 800,345 830,365 770,440 760,520 720,590 760,650 700,700 650,760 620,850 910,850" fill="#fff" stroke="#fff" stroke-width="16" stroke-linejoin="round"/>
</g></g>
<g clip-path="url(#tc2)"><g transform="translate(322 204) scale(0.09231)">
<polygon points="10,200 20,110 70,65 180,55 260,85 270,120 210,150 200,190 120,200" fill="#fff" stroke="#fff" stroke-width="16" stroke-linejoin="round"/>
<polygon points="315,60 400,10 500,60 490,150 420,160 380,110" fill="#fff" stroke="#fff" stroke-width="16" stroke-linejoin="round"/>
<ellipse cx="255" cy="200" rx="38" ry="38" fill="#fff" transform="rotate(0 255 200)"/>
<ellipse cx="75" cy="320" rx="45" ry="45" fill="#fff" transform="rotate(0 75 320)"/>
<polygon points="180,370 230,325 260,350 300,320 320,400 310,470 220,470" fill="#fff" stroke="#fff" stroke-width="16" stroke-linejoin="round"/>
<polygon points="0,380 50,380 55,590 0,590" fill="#fff" stroke="#fff" stroke-width="16" stroke-linejoin="round"/>
<polygon points="800,160 850,110 900,130 900,500 830,420 820,330 770,240" fill="#fff" stroke="#fff" stroke-width="16" stroke-linejoin="round"/>
<polygon points="120,620 150,560 200,480 310,470 460,480 480,400 560,365 640,400 760,460 830,450 900,500 900,850 250,850 300,760 290,680 200,650" fill="#fff" stroke="#fff" stroke-width="16" stroke-linejoin="round"/>
<ellipse cx="615" cy="565" rx="28" ry="28" fill="#000" transform="rotate(0 615 565)"/>
<ellipse cx="205" cy="710" rx="65" ry="50" fill="#fff" transform="rotate(0 205 710)"/>
<polygon points="0,740 60,700 125,700 130,760 110,850 0,850" fill="#fff" stroke="#fff" stroke-width="16" stroke-linejoin="round"/>
<polygon points="160,800 200,790 215,850 160,850" fill="#fff" stroke="#fff" stroke-width="16" stroke-linejoin="round"/>
</g></g>
<g clip-path="url(#tc3)"><g transform="translate(158 279) scale(0.09231)">
<polygon points="40,0 410,0 420,90 330,80 240,60 215,110 240,190 250,290 270,350 330,360 420,340 440,380 430,480 400,520 340,560 300,570 310,620 360,640 400,630 470,640 540,660 560,630 640,630 720,640 800,620 850,640 870,700 880,850 150,850 170,760 165,690 200,620 190,540 120,460 45,420 90,340 70,260 100,230 20,220 15,60" fill="#fff" stroke="#fff" stroke-width="16" stroke-linejoin="round"/>
<ellipse cx="305" cy="150" rx="55" ry="38" fill="#fff" transform="rotate(-10 305 150)"/>
<ellipse cx="355" cy="260" rx="60" ry="40" fill="#fff" transform="rotate(-15 355 260)"/>
<polygon points="490,200 560,250 600,330 650,380 630,450 660,500 620,520 560,490 480,490 450,440 460,380 445,320 460,250" fill="#fff" stroke="#fff" stroke-width="16" stroke-linejoin="round"/>
<polygon points="560,130 600,60 660,20 690,0 760,0 730,70 800,75 860,110 820,160 910,195 910,235 820,250 760,275 700,265 640,240 590,190" fill="#fff" stroke="#fff" stroke-width="16" stroke-linejoin="round"/>
<ellipse cx="730" cy="370" rx="50" ry="33" fill="#fff" transform="rotate(0 730 370)"/>
<ellipse cx="715" cy="480" rx="42" ry="38" fill="#fff" transform="rotate(0 715 480)"/>
<ellipse cx="490" cy="580" rx="65" ry="32" fill="#fff" transform="rotate(-25 490 580)"/>
<polygon points="740,440 790,410 840,450 910,500 910,620 850,640 800,560 760,500" fill="#fff" stroke="#fff" stroke-width="16" stroke-linejoin="round"/>
</g></g>
<g clip-path="url(#tc4)"><g transform="translate(240 279) scale(0.09231)">
<polygon points="80,0 460,0 470,60 600,35 520,100 460,160 420,210 430,280 430,350 400,400 330,410 280,380 230,320 120,320 60,270 0,230 0,205 100,215 200,200 210,170 140,140 110,60" fill="#fff" stroke="#fff" stroke-width="16" stroke-linejoin="round"/>
<polygon points="215,180 290,175 295,230 250,250 210,225" fill="#000" stroke="#000" stroke-width="8" stroke-linejoin="round"/>
<polygon points="640,0 910,0 910,400 860,410 780,380 700,390 660,360 600,360 600,320 640,270 700,230 750,215 720,130 690,80" fill="#fff" stroke="#fff" stroke-width="16" stroke-linejoin="round"/>
<polygon points="700,430 760,400 860,415 910,400 910,540 860,540 780,520 700,520 675,470" fill="#fff" stroke="#fff" stroke-width="16" stroke-linejoin="round"/>
<polygon points="770,550 860,540 910,540 910,850 700,850 780,800 775,720 800,680 758,620" fill="#fff" stroke="#fff" stroke-width="16" stroke-linejoin="round"/>
<polygon points="300,570 440,540 470,500 530,460 570,480 590,450 640,420 700,430 675,470 650,520 620,590 560,620 520,600 470,620 450,660 470,700 440,720 330,690 310,640" fill="#fff" stroke="#fff" stroke-width="16" stroke-linejoin="round"/>
<ellipse cx="640" cy="620" rx="50" ry="35" fill="#fff" transform="rotate(-30 640 620)"/>
<polygon points="180,770 250,700 330,690 440,720 470,700 540,690 570,650 600,700 680,680 720,690 730,720 680,750 600,790 580,850 380,850 360,820 300,790 230,820 175,810" fill="#fff" stroke="#fff" stroke-width="16" stroke-linejoin="round"/>
<ellipse cx="620" cy="815" rx="40" ry="25" fill="#fff" transform="rotate(0 620 815)"/>
<polygon points="0,510 40,570 140,610 200,650 225,690 150,720 60,750 0,740" fill="#fff" stroke="#fff" stroke-width="16" stroke-linejoin="round"/>
<ellipse cx="45" cy="800" rx="50" ry="35" fill="#fff" transform="rotate(0 45 800)"/>
</g></g>
<g clip-path="url(#tc5)"><g transform="translate(322 279) scale(0.09231)">
<polygon points="0,0 910,0 910,850 0,850" fill="#fff" stroke="#fff" stroke-width="16" stroke-linejoin="round"/>
<polygon points="300,0 430,0 400,25 330,30" fill="#000" stroke="#000" stroke-width="8" stroke-linejoin="round"/>
<polygon points="215,0 265,0 262,65 222,105 140,100 110,75 145,88 210,88 235,55" fill="#000" stroke="#000" stroke-width="8" stroke-linejoin="round"/>
<polygon points="770,100 900,95 900,130 850,150 830,150 800,175 780,230 730,250 715,300 720,340 700,390 665,430 655,500 700,555 640,545 560,530 480,555 435,585 445,680 470,720 465,780 400,755 300,750 270,700 285,665 255,620 200,610 185,640 130,590 60,610 0,690 0,620 60,570 120,530 215,490 300,480 345,450 420,470 455,500 520,445 550,385 548,250 590,262 620,212 700,200 760,160" fill="#000" stroke="#000" stroke-width="8" stroke-linejoin="round"/>
<polygon points="800,470 900,440 900,590 860,580 820,520" fill="#000" stroke="#000" stroke-width="8" stroke-linejoin="round"/>
<ellipse cx="660" cy="310" rx="50" ry="55" fill="#fff" transform="rotate(0 660 310)"/>
<ellipse cx="490" cy="470" rx="62" ry="35" fill="#fff" transform="rotate(-30 490 470)"/>
<ellipse cx="400" cy="530" rx="35" ry="48" fill="#fff" transform="rotate(0 400 530)"/>
<ellipse cx="235" cy="655" rx="40" ry="52" fill="#fff" transform="rotate(30 235 655)"/>
</g></g>
<g clip-path="url(#tc6)"><g transform="translate(158 354) scale(0.09231)">
<polygon points="150,0 910,0 910,480 880,480 840,440 760,420 700,400 610,370 640,340 690,320 600,290 480,310 420,330 340,360 260,350 200,310 150,260 160,200 230,160 170,150 130,110" fill="#fff" stroke="#fff" stroke-width="16" stroke-linejoin="round"/>
<polygon points="760,420 880,480 840,520 800,580 760,660 800,850 640,850 680,700 730,600 740,500 720,450" fill="#fff" stroke="#fff" stroke-width="16" stroke-linejoin="round"/>
<polygon points="910,500 870,540 830,620 820,720 860,800 910,850" fill="#fff" stroke="#fff" stroke-width="16" stroke-linejoin="round"/>
<polygon points="120,390 190,380 240,400 300,440 370,500 380,580 420,680 450,730 540,740 620,700 660,700 640,760 560,790 520,850 310,850 270,760 220,740 170,720 100,680 50,620 60,520 100,450" fill="#fff" stroke="#fff" stroke-width="16" stroke-linejoin="round"/>
<ellipse cx="80" cy="335" rx="80" ry="28" fill="#fff" transform="rotate(10 80 335)"/>
<ellipse cx="40" cy="395" rx="35" ry="25" fill="#fff" transform="rotate(0 40 395)"/>
</g></g>
<g clip-path="url(#tc7)"><g transform="translate(240 354) scale(0.09231)">
<ellipse cx="50" cy="15" rx="45" ry="25" fill="#fff" transform="rotate(0 50 15)"/>
<ellipse cx="230" cy="0" rx="40" ry="10" fill="#fff" transform="rotate(0 230 0)"/>
<polygon points="20,110 60,80 150,70 170,110 280,120 300,150 280,200 230,220 170,200 90,210 40,180" fill="#fff" stroke="#fff" stroke-width="16" stroke-linejoin="round"/>
<polygon points="280,70 330,30 440,10 480,40 560,50 600,100 640,170 690,150 720,100 700,40 740,0 910,0 910,330 840,340 800,360 860,440 860,480 800,520 780,560 720,570 640,580 590,540 590,490 560,430 500,400 470,420 460,450 400,470 340,490 320,450 270,420 320,380 240,400 180,380 160,330 200,290 240,290 230,220 280,200 300,150 290,110" fill="#fff" stroke="#fff" stroke-width="16" stroke-linejoin="round"/>
<polygon points="450,160 480,200 500,260 470,300 440,230" fill="#000" stroke="#000" stroke-width="8" stroke-linejoin="round"/>
<ellipse cx="485" cy="322" rx="18" ry="18" fill="#000" transform="rotate(0 485 322)"/>
<ellipse cx="585" cy="100" rx="18" ry="40" fill="#000" transform="rotate(0 585 100)"/>
<polygon points="0,260 70,270 120,320 100,400 110,470 100,560 80,620 90,700 60,760 40,850 0,850" fill="#fff" stroke="#fff" stroke-width="16" stroke-linejoin="round"/>
<ellipse cx="115" cy="625" rx="30" ry="60" fill="#fff" transform="rotate(15 115 625)"/>
<ellipse cx="255" cy="510" rx="45" ry="42" fill="#fff" transform="rotate(0 255 510)"/>
<ellipse cx="485" cy="505" rx="65" ry="65" fill="#fff" transform="rotate(0 485 505)"/>
<ellipse cx="425" cy="575" rx="50" ry="25" fill="#fff" transform="rotate(25 425 575)"/>
<ellipse cx="565" cy="625" rx="38" ry="32" fill="#fff" transform="rotate(0 565 625)"/>
<ellipse cx="300" cy="660" rx="55" ry="30" fill="#fff" transform="rotate(-25 300 660)"/>
<polygon points="370,650 440,640 480,680 470,740 430,790 350,800 340,760 370,700" fill="#fff" stroke="#fff" stroke-width="16" stroke-linejoin="round"/>
<polygon points="680,600 780,560 860,590 910,560 910,670 860,680 850,720 820,760 790,740 740,750 690,700 670,650" fill="#fff" stroke="#fff" stroke-width="16" stroke-linejoin="round"/>
</g></g>
<g clip-path="url(#tc8)"><g transform="translate(322 354) scale(0.09231)">
<polygon points="0,0 490,0 480,80 470,150 420,220 360,275 320,250 250,210 190,215 120,240 60,260 0,320" fill="#fff" stroke="#fff" stroke-width="16" stroke-linejoin="round"/>
<ellipse cx="125" cy="280" rx="42" ry="25" fill="#fff" transform="rotate(0 125 280)"/>
<ellipse cx="228" cy="265" rx="42" ry="32" fill="#fff" transform="rotate(0 228 265)"/>
<polygon points="500,0 900,0 890,40 830,60 790,75 760,40 700,50 660,80 600,100 580,60 520,40" fill="#fff" stroke="#fff" stroke-width="16" stroke-linejoin="round"/>
<ellipse cx="397" cy="438" rx="42" ry="42" fill="#fff" transform="rotate(0 397 438)"/>
<polygon points="490,495 530,410 600,385 740,375 800,330 820,310 830,360 870,400 880,470 830,520 800,570 830,640 800,700 740,680 680,640 600,610 540,610 600,560 640,520 600,500" fill="#fff" stroke="#fff" stroke-width="16" stroke-linejoin="round"/>
<polygon points="460,610 490,575 540,610 550,650 520,700 480,745 455,700" fill="#fff" stroke="#fff" stroke-width="16" stroke-linejoin="round"/>
<polygon points="650,700 700,680 760,700 830,720 830,850 680,850" fill="#fff" stroke="#fff" stroke-width="16" stroke-linejoin="round"/>
<polygon points="240,580 280,520 300,480 340,510 370,560 360,620 390,690 340,690 300,650 260,620" fill="#fff" stroke="#fff" stroke-width="16" stroke-linejoin="round"/>
<polygon points="160,650 200,620 260,660 300,700 300,760 260,800 190,800 180,740" fill="#fff" stroke="#fff" stroke-width="16" stroke-linejoin="round"/>
<polygon points="0,545 60,520 120,560 150,640 160,690 100,710 40,690 0,680" fill="#fff" stroke="#fff" stroke-width="16" stroke-linejoin="round"/>
<polygon points="860,810 900,780 900,850 860,850" fill="#fff" stroke="#fff" stroke-width="16" stroke-linejoin="round"/>
</g></g>
</g></mask></defs>
<g clip-path="url(#c1)">
<rect x="159" y="204" width="247" height="226" fill="#020302"/>
<g filter="url(#b2)">
<g transform="translate(162.6 210.5) rotate(15)" opacity="0.55"><ellipse rx="3.7" ry="6.0" fill="#6a6a6a"/><ellipse rx="1.8" ry="3.0" fill="#3a3a3a" stroke="#cfcfcf" stroke-width="1.2"/></g>
<g transform="translate(235.5 207.2) rotate(-20)" opacity="0.6"><ellipse rx="6.5" ry="3.2" fill="#6a6a6a"/><ellipse rx="3.2" ry="1.6" fill="#3a3a3a" stroke="#cfcfcf" stroke-width="1.2"/></g>
<g transform="translate(161.2 234.5) rotate(0)" opacity="0.25"><ellipse rx="2.8" ry="4.6" fill="#6a6a6a"/><ellipse rx="1.4" ry="2.3" fill="#3a3a3a" stroke="#cfcfcf" stroke-width="1.2"/></g>
<g transform="translate(159.8 258.5) rotate(0)" opacity="0.2"><ellipse rx="1.7" ry="2.8" fill="#6a6a6a"/><ellipse rx="0.8" ry="1.4" fill="#3a3a3a" stroke="#cfcfcf" stroke-width="1.2"/></g>
<g transform="translate(317.1 212.3) rotate(5)" opacity="0.6"><ellipse rx="4.2" ry="9.2" fill="#6a6a6a"/><ellipse rx="2.1" ry="4.6" fill="#3a3a3a" stroke="#cfcfcf" stroke-width="1.2"/></g>
<g transform="translate(258.5 205.8) rotate(0)" opacity="0.18"><ellipse rx="18.5" ry="2.3" fill="#6a6a6a"/><ellipse rx="9.2" ry="1.2" fill="#3a3a3a" stroke="#cfcfcf" stroke-width="1.2"/></g>
<g transform="translate(161.2 342.7) rotate(0)" opacity="0.45"><ellipse rx="2.6" ry="5.5" fill="#6a6a6a"/><ellipse rx="1.3" ry="2.8" fill="#3a3a3a" stroke="#cfcfcf" stroke-width="1.2"/></g>
<g transform="translate(163.5 371.5) rotate(0)" opacity="0.95"><ellipse rx="4.8" ry="4.8" fill="#6a6a6a"/><ellipse rx="2.4" ry="2.4" fill="#3a3a3a" stroke="#cfcfcf" stroke-width="1.2"/></g>
<g transform="translate(177.4 425.5) rotate(0)" opacity="0.45"><ellipse rx="6.0" ry="3.7" fill="#6a6a6a"/><ellipse rx="3.0" ry="1.8" fill="#3a3a3a" stroke="#cfcfcf" stroke-width="1.2"/></g>
<g transform="translate(163.5 418.6) rotate(0)" opacity="0.15"><ellipse rx="4.6" ry="10.2" fill="#6a6a6a"/><ellipse rx="2.3" ry="5.1" fill="#3a3a3a" stroke="#cfcfcf" stroke-width="1.2"/></g>
<g transform="translate(251.1 426.9) rotate(0)" opacity="0.35"><ellipse rx="5.1" ry="2.8" fill="#6a6a6a"/><ellipse rx="2.5" ry="1.4" fill="#3a3a3a" stroke="#cfcfcf" stroke-width="1.2"/></g>
<g transform="translate(291.7 425.1) rotate(0)" opacity="0.3"><ellipse rx="4.6" ry="3.7" fill="#6a6a6a"/><ellipse rx="2.3" ry="1.8" fill="#3a3a3a" stroke="#cfcfcf" stroke-width="1.2"/></g>
<g transform="translate(322.2 422.3) rotate(0)" opacity="0.45"><ellipse rx="3.2" ry="3.7" fill="#6a6a6a"/><ellipse rx="1.6" ry="1.8" fill="#3a3a3a" stroke="#cfcfcf" stroke-width="1.2"/></g>
<g transform="translate(264.9 426.0) rotate(0)" opacity="0.2"><ellipse rx="3.7" ry="2.8" fill="#6a6a6a"/><ellipse rx="1.8" ry="1.4" fill="#3a3a3a" stroke="#cfcfcf" stroke-width="1.2"/></g>
<g transform="translate(326.6 425.1) rotate(0)" opacity="0.4"><ellipse rx="5.5" ry="4.2" fill="#6a6a6a"/><ellipse rx="2.8" ry="2.1" fill="#3a3a3a" stroke="#cfcfcf" stroke-width="1.2"/></g>
<g transform="translate(352.5 424.2) rotate(0)" opacity="0.4"><ellipse rx="4.6" ry="4.6" fill="#6a6a6a"/><ellipse rx="2.3" ry="2.3" fill="#3a3a3a" stroke="#cfcfcf" stroke-width="1.2"/></g>
<g transform="translate(401.4 405.7) rotate(0)" opacity="0.3"><ellipse rx="3.7" ry="7.4" fill="#6a6a6a"/><ellipse rx="1.8" ry="3.7" fill="#3a3a3a" stroke="#cfcfcf" stroke-width="1.2"/></g>
<g transform="translate(401.4 419.5) rotate(0)" opacity="0.25"><ellipse rx="3.2" ry="5.5" fill="#6a6a6a"/><ellipse rx="1.6" ry="2.8" fill="#3a3a3a" stroke="#cfcfcf" stroke-width="1.2"/></g>
<g transform="translate(379.2 425.1) rotate(0)" opacity="0.15"><ellipse rx="3.7" ry="4.2" fill="#6a6a6a"/><ellipse rx="1.8" ry="2.1" fill="#3a3a3a" stroke="#cfcfcf" stroke-width="1.2"/></g>
</g>
<g mask="url(#cm)">
<rect x="155" y="200" width="255" height="236" fill="#0c5910"/>
<g filter="url(#b2)">
<g transform="translate(162.1 208.5) rotate(62)"><ellipse rx="8.8" ry="5.4" fill="#5fb062" opacity="0.06"/><ellipse rx="3.4" ry="1.5" fill="#0a4d0e" fill-opacity=".5" stroke="#7cc67e" stroke-width="1" stroke-opacity="0.16"/></g>
<g transform="translate(175.7 210.8) rotate(70)"><ellipse rx="10.2" ry="7.4" fill="#5fb062" opacity="0.03"/><ellipse rx="4.4" ry="2.9" fill="#0a4d0e" fill-opacity=".5" stroke="#7cc67e" stroke-width="1" stroke-opacity="0.12"/></g>
<g transform="translate(195.3 214.0) rotate(100)"><ellipse rx="11.6" ry="8.1" fill="#5fb062" opacity="0.10"/><ellipse rx="5.3" ry="3.3" fill="#0a4d0e" fill-opacity=".5" stroke="#7cc67e" stroke-width="1" stroke-opacity="0.21"/></g>
<g transform="translate(210.8 210.8) rotate(-40)"><ellipse rx="12.3" ry="7.4" fill="#5fb062" opacity="0.00"/><ellipse rx="5.7" ry="2.9" fill="#0a4d0e" fill-opacity=".5" stroke="#7cc67e" stroke-width="1" stroke-opacity="0.08"/></g>
<g transform="translate(226.2 208.0) rotate(-10)"><ellipse rx="8.8" ry="6.1" fill="#5fb062" opacity="0.00"/><ellipse rx="3.4" ry="1.9" fill="#0a4d0e" fill-opacity=".5" stroke="#7cc67e" stroke-width="1" stroke-opacity="0.08"/></g>
<g transform="translate(235.5 206.6) rotate(-20)"><ellipse rx="9.5" ry="5.8" fill="#5fb062" opacity="0.20"/><ellipse rx="3.9" ry="1.8" fill="#0a4d0e" fill-opacity=".5" stroke="#7cc67e" stroke-width="1" stroke-opacity="0.34"/></g>
<g transform="translate(172.5 221.4) rotate(80)"><ellipse rx="9.8" ry="8.5" fill="#5fb062" opacity="0.00"/><ellipse rx="4.1" ry="3.6" fill="#0a4d0e" fill-opacity=".5" stroke="#7cc67e" stroke-width="1" stroke-opacity="0.08"/></g>
<g transform="translate(181.9 228.1) rotate(-50)"><ellipse rx="12.3" ry="7.4" fill="#5fb062" opacity="0.06"/><ellipse rx="5.7" ry="2.9" fill="#0a4d0e" fill-opacity=".5" stroke="#7cc67e" stroke-width="1" stroke-opacity="0.16"/></g>
<g transform="translate(198.5 225.8) rotate(-25)"><ellipse rx="11.6" ry="8.1" fill="#5fb062" opacity="0.20"/><ellipse rx="5.3" ry="3.3" fill="#0a4d0e" fill-opacity=".5" stroke="#7cc67e" stroke-width="1" stroke-opacity="0.34"/></g>
<g transform="translate(214.0 218.2) rotate(-20)"><ellipse rx="10.2" ry="7.8" fill="#5fb062" opacity="0.00"/><ellipse rx="4.4" ry="3.1" fill="#0a4d0e" fill-opacity=".5" stroke="#7cc67e" stroke-width="1" stroke-opacity="0.08"/></g>
<g transform="translate(218.7 222.1) rotate(-40)"><ellipse rx="13.0" ry="7.1" fill="#5fb062" opacity="0.20"/><ellipse rx="6.2" ry="2.7" fill="#0a4d0e" fill-opacity=".5" stroke="#7cc67e" stroke-width="1" stroke-opacity="0.34"/></g>
<g transform="translate(231.8 228.8) rotate(-25)"><ellipse rx="12.6" ry="7.7" fill="#5fb062" opacity="0.03"/><ellipse rx="5.9" ry="3.1" fill="#0a4d0e" fill-opacity=".5" stroke="#7cc67e" stroke-width="1" stroke-opacity="0.12"/></g>
<g transform="translate(165.1 238.3) rotate(-20)"><ellipse rx="10.6" ry="9.0" fill="#5fb062" opacity="0.00"/><ellipse rx="4.6" ry="4.0" fill="#0a4d0e" fill-opacity=".5" stroke="#7cc67e" stroke-width="1" stroke-opacity="0.08"/></g>
<g transform="translate(192.7 240.6) rotate(45)"><ellipse rx="12.6" ry="7.7" fill="#5fb062" opacity="0.00"/><ellipse rx="5.9" ry="3.1" fill="#0a4d0e" fill-opacity=".5" stroke="#7cc67e" stroke-width="1" stroke-opacity="0.08"/></g>
<g transform="translate(232.7 235.7) rotate(-30)"><ellipse rx="11.6" ry="7.1" fill="#5fb062" opacity="0.10"/><ellipse rx="5.3" ry="2.7" fill="#0a4d0e" fill-opacity=".5" stroke="#7cc67e" stroke-width="1" stroke-opacity="0.21"/></g>
<g transform="translate(226.2 240.1) rotate(-15)"><ellipse rx="12.3" ry="6.7" fill="#5fb062" opacity="0.10"/><ellipse rx="5.7" ry="2.4" fill="#0a4d0e" fill-opacity=".5" stroke="#7cc67e" stroke-width="1" stroke-opacity="0.21"/></g>
<g transform="translate(180.1 245.1) rotate(90)"><ellipse rx="9.8" ry="8.1" fill="#5fb062" opacity="0.00"/><ellipse rx="4.1" ry="3.3" fill="#0a4d0e" fill-opacity=".5" stroke="#7cc67e" stroke-width="1" stroke-opacity="0.08"/></g>
<g transform="translate(220.0 250.6) rotate(-5)"><ellipse rx="13.4" ry="7.4" fill="#5fb062" opacity="0.03"/><ellipse rx="6.5" ry="2.9" fill="#0a4d0e" fill-opacity=".5" stroke="#7cc67e" stroke-width="1" stroke-opacity="0.12"/></g>
<g transform="translate(183.1 254.3) rotate(-20)"><ellipse rx="13.0" ry="8.5" fill="#5fb062" opacity="0.00"/><ellipse rx="6.2" ry="3.6" fill="#0a4d0e" fill-opacity=".5" stroke="#7cc67e" stroke-width="1" stroke-opacity="0.08"/></g>
<g transform="translate(172.0 261.5) rotate(50)"><ellipse rx="10.9" ry="8.1" fill="#5fb062" opacity="0.20"/><ellipse rx="4.8" ry="3.3" fill="#0a4d0e" fill-opacity=".5" stroke="#7cc67e" stroke-width="1" stroke-opacity="0.34"/></g>
<g transform="translate(191.2 259.9) rotate(-10)"><ellipse rx="12.0" ry="8.1" fill="#5fb062" opacity="0.10"/><ellipse rx="5.6" ry="3.3" fill="#0a4d0e" fill-opacity=".5" stroke="#7cc67e" stroke-width="1" stroke-opacity="0.21"/></g>
<g transform="translate(209.6 259.4) rotate(-25)"><ellipse rx="12.6" ry="7.4" fill="#5fb062" opacity="0.00"/><ellipse rx="5.9" ry="2.9" fill="#0a4d0e" fill-opacity=".5" stroke="#7cc67e" stroke-width="1" stroke-opacity="0.08"/></g>
<g transform="translate(223.5 262.5) rotate(-20)"><ellipse rx="12.6" ry="6.7" fill="#5fb062" opacity="0.20"/><ellipse rx="5.9" ry="2.4" fill="#0a4d0e" fill-opacity=".5" stroke="#7cc67e" stroke-width="1" stroke-opacity="0.34"/></g>
<g transform="translate(223.7 266.6) rotate(-20)"><ellipse rx="11.6" ry="6.7" fill="#5fb062" opacity="0.00"/><ellipse rx="5.3" ry="2.4" fill="#0a4d0e" fill-opacity=".5" stroke="#7cc67e" stroke-width="1" stroke-opacity="0.08"/></g>
<g transform="translate(204.1 268.2) rotate(-10)"><ellipse rx="12.6" ry="7.0" fill="#5fb062" opacity="0.03"/><ellipse rx="5.9" ry="2.6" fill="#0a4d0e" fill-opacity=".5" stroke="#7cc67e" stroke-width="1" stroke-opacity="0.12"/></g>
<g transform="translate(170.8 275.4) rotate(-30)"><ellipse rx="11.6" ry="9.4" fill="#5fb062" opacity="0.42"/><ellipse rx="5.3" ry="4.3" fill="#0a4d0e" fill-opacity=".5" stroke="#7cc67e" stroke-width="1" stroke-opacity="0.63"/></g>
<g transform="translate(185.2 275.4) rotate(80)"><ellipse rx="10.9" ry="8.1" fill="#5fb062" opacity="0.20"/><ellipse rx="4.8" ry="3.3" fill="#0a4d0e" fill-opacity=".5" stroke="#7cc67e" stroke-width="1" stroke-opacity="0.34"/></g>
<g transform="translate(159.8 250.0) rotate(90)"><ellipse rx="6.5" ry="5.0" fill="#5fb062" opacity="0.00"/><ellipse rx="1.9" ry="1.2" fill="#0a4d0e" fill-opacity=".5" stroke="#7cc67e" stroke-width="1" stroke-opacity="0.08"/></g>
<g transform="translate(241.3 215.4) rotate(0)"><ellipse rx="9.5" ry="8.5" fill="#5fb062" opacity="0.20"/><ellipse rx="3.9" ry="3.6" fill="#0a4d0e" fill-opacity=".5" stroke="#7cc67e" stroke-width="1" stroke-opacity="0.34"/></g>
<g transform="translate(256.1 215.8) rotate(60)"><ellipse rx="9.8" ry="8.8" fill="#5fb062" opacity="0.20"/><ellipse rx="4.1" ry="3.8" fill="#0a4d0e" fill-opacity=".5" stroke="#7cc67e" stroke-width="1" stroke-opacity="0.34"/></g>
<g transform="translate(274.8 217.9) rotate(30)"><ellipse rx="10.6" ry="8.1" fill="#5fb062" opacity="0.10"/><ellipse rx="4.6" ry="3.3" fill="#0a4d0e" fill-opacity=".5" stroke="#7cc67e" stroke-width="1" stroke-opacity="0.21"/></g>
<g transform="translate(284.0 212.6) rotate(25)"><ellipse rx="10.9" ry="7.7" fill="#5fb062" opacity="0.00"/><ellipse rx="4.8" ry="3.1" fill="#0a4d0e" fill-opacity=".5" stroke="#7cc67e" stroke-width="1" stroke-opacity="0.08"/></g>
<g transform="translate(295.8 208.9) rotate(-10)"><ellipse rx="10.5" ry="8.4" fill="#5fb062" opacity="0.03"/><ellipse rx="4.5" ry="3.5" fill="#0a4d0e" fill-opacity=".5" stroke="#7cc67e" stroke-width="1" stroke-opacity="0.12"/></g>
<g transform="translate(316.5 208.9) rotate(80)"><ellipse rx="9.5" ry="6.7" fill="#5fb062" opacity="0.00"/><ellipse rx="3.9" ry="2.4" fill="#0a4d0e" fill-opacity=".5" stroke="#7cc67e" stroke-width="1" stroke-opacity="0.08"/></g>
<g transform="translate(268.5 205.7) rotate(0)"><ellipse rx="7.5" ry="5.4" fill="#5fb062" opacity="0.20"/><ellipse rx="2.5" ry="1.5" fill="#0a4d0e" fill-opacity=".5" stroke="#7cc67e" stroke-width="1" stroke-opacity="0.34"/></g>
<g transform="translate(252.4 225.8) rotate(-45)"><ellipse rx="11.2" ry="8.8" fill="#5fb062" opacity="0.03"/><ellipse rx="5.0" ry="3.8" fill="#0a4d0e" fill-opacity=".5" stroke="#7cc67e" stroke-width="1" stroke-opacity="0.12"/></g>
<g transform="translate(294.7 223.2) rotate(10)"><ellipse rx="12.3" ry="7.1" fill="#5fb062" opacity="0.06"/><ellipse rx="5.7" ry="2.7" fill="#0a4d0e" fill-opacity=".5" stroke="#7cc67e" stroke-width="1" stroke-opacity="0.16"/></g>
<g transform="translate(291.6 226.5) rotate(20)"><ellipse rx="9.5" ry="6.7" fill="#5fb062" opacity="0.10"/><ellipse rx="3.9" ry="2.4" fill="#0a4d0e" fill-opacity=".5" stroke="#7cc67e" stroke-width="1" stroke-opacity="0.21"/></g>
<g transform="translate(302.2 227.7) rotate(30)"><ellipse rx="9.3" ry="7.7" fill="#5fb062" opacity="0.03"/><ellipse rx="3.7" ry="3.1" fill="#0a4d0e" fill-opacity=".5" stroke="#7cc67e" stroke-width="1" stroke-opacity="0.12"/></g>
<g transform="translate(267.2 232.0) rotate(-30)"><ellipse rx="12.0" ry="8.1" fill="#5fb062" opacity="0.20"/><ellipse rx="5.6" ry="3.3" fill="#0a4d0e" fill-opacity=".5" stroke="#7cc67e" stroke-width="1" stroke-opacity="0.34"/></g>
<g transform="translate(252.7 234.3) rotate(-35)"><ellipse rx="10.2" ry="7.4" fill="#5fb062" opacity="0.00"/><ellipse rx="4.4" ry="2.9" fill="#0a4d0e" fill-opacity=".5" stroke="#7cc67e" stroke-width="1" stroke-opacity="0.08"/></g>
<g transform="translate(286.4 234.3) rotate(70)"><ellipse rx="10.2" ry="8.5" fill="#5fb062" opacity="0.20"/><ellipse rx="4.4" ry="3.6" fill="#0a4d0e" fill-opacity=".5" stroke="#7cc67e" stroke-width="1" stroke-opacity="0.34"/></g>
<g transform="translate(246.8 243.1) rotate(45)"><ellipse rx="8.8" ry="7.7" fill="#5fb062" opacity="0.06"/><ellipse rx="3.4" ry="3.1" fill="#0a4d0e" fill-opacity=".5" stroke="#7cc67e" stroke-width="1" stroke-opacity="0.16"/></g>
<g transform="translate(273.2 241.7) rotate(60)"><ellipse rx="10.9" ry="9.8" fill="#5fb062" opacity="0.20"/><ellipse rx="4.8" ry="4.5" fill="#0a4d0e" fill-opacity=".5" stroke="#7cc67e" stroke-width="1" stroke-opacity="0.34"/></g>
<g transform="translate(266.0 245.8) rotate(30)"><ellipse rx="12.0" ry="7.7" fill="#5fb062" opacity="0.03"/><ellipse rx="5.6" ry="3.1" fill="#0a4d0e" fill-opacity=".5" stroke="#7cc67e" stroke-width="1" stroke-opacity="0.12"/></g>
<g transform="translate(285.4 243.5) rotate(30)"><ellipse rx="12.0" ry="8.8" fill="#5fb062" opacity="0.00"/><ellipse rx="5.6" ry="3.8" fill="#0a4d0e" fill-opacity=".5" stroke="#7cc67e" stroke-width="1" stroke-opacity="0.08"/></g>
<g transform="translate(303.2 244.9) rotate(50)"><ellipse rx="14.4" ry="7.4" fill="#5fb062" opacity="0.20"/><ellipse rx="7.1" ry="2.9" fill="#0a4d0e" fill-opacity=".5" stroke="#7cc67e" stroke-width="1" stroke-opacity="0.34"/></g>
<g transform="translate(317.9 246.3) rotate(45)"><ellipse rx="10.9" ry="9.8" fill="#5fb062" opacity="0.42"/><ellipse rx="4.8" ry="4.5" fill="#0a4d0e" fill-opacity=".5" stroke="#7cc67e" stroke-width="1" stroke-opacity="0.63"/></g>
<g transform="translate(253.8 253.9) rotate(10)"><ellipse rx="13.0" ry="7.1" fill="#5fb062" opacity="0.20"/><ellipse rx="6.2" ry="2.7" fill="#0a4d0e" fill-opacity=".5" stroke="#7cc67e" stroke-width="1" stroke-opacity="0.34"/></g>
<g transform="translate(301.8 253.2) rotate(55)"><ellipse rx="13.0" ry="7.1" fill="#5fb062" opacity="0.03"/><ellipse rx="6.2" ry="2.7" fill="#0a4d0e" fill-opacity=".5" stroke="#7cc67e" stroke-width="1" stroke-opacity="0.12"/></g>
<g transform="translate(313.8 254.6) rotate(80)"><ellipse rx="11.6" ry="7.4" fill="#5fb062" opacity="0.06"/><ellipse rx="5.3" ry="2.9" fill="#0a4d0e" fill-opacity=".5" stroke="#7cc67e" stroke-width="1" stroke-opacity="0.16"/></g>
<g transform="translate(319.8 257.4) rotate(-40)"><ellipse rx="10.2" ry="7.4" fill="#5fb062" opacity="0.00"/><ellipse rx="4.4" ry="2.9" fill="#0a4d0e" fill-opacity=".5" stroke="#7cc67e" stroke-width="1" stroke-opacity="0.08"/></g>
<g transform="translate(294.1 257.1) rotate(90)"><ellipse rx="9.8" ry="8.4" fill="#5fb062" opacity="0.20"/><ellipse rx="4.1" ry="3.5" fill="#0a4d0e" fill-opacity=".5" stroke="#7cc67e" stroke-width="1" stroke-opacity="0.34"/></g>
<g transform="translate(243.2 259.7) rotate(45)"><ellipse rx="13.0" ry="8.1" fill="#5fb062" opacity="0.00"/><ellipse rx="6.2" ry="3.3" fill="#0a4d0e" fill-opacity=".5" stroke="#7cc67e" stroke-width="1" stroke-opacity="0.08"/></g>
<g transform="translate(264.1 260.8) rotate(-20)"><ellipse rx="12.0" ry="7.7" fill="#5fb062" opacity="0.20"/><ellipse rx="5.6" ry="3.1" fill="#0a4d0e" fill-opacity=".5" stroke="#7cc67e" stroke-width="1" stroke-opacity="0.34"/></g>
<g transform="translate(280.1 259.2) rotate(-15)"><ellipse rx="11.6" ry="6.7" fill="#5fb062" opacity="0.00"/><ellipse rx="5.3" ry="2.4" fill="#0a4d0e" fill-opacity=".5" stroke="#7cc67e" stroke-width="1" stroke-opacity="0.08"/></g>
<g transform="translate(281.9 265.2) rotate(-10)"><ellipse rx="13.7" ry="7.1" fill="#5fb062" opacity="0.20"/><ellipse rx="6.7" ry="2.7" fill="#0a4d0e" fill-opacity=".5" stroke="#7cc67e" stroke-width="1" stroke-opacity="0.34"/></g>
<g transform="translate(257.3 271.0) rotate(0)"><ellipse rx="8.2" ry="6.3" fill="#5fb062" opacity="0.42"/><ellipse rx="3.0" ry="2.1" fill="#0a4d0e" fill-opacity=".5" stroke="#7cc67e" stroke-width="1" stroke-opacity="0.63"/></g>
<g transform="translate(252.7 275.8) rotate(0)"><ellipse rx="8.8" ry="8.1" fill="#5fb062" opacity="0.42"/><ellipse rx="3.4" ry="3.3" fill="#0a4d0e" fill-opacity=".5" stroke="#7cc67e" stroke-width="1" stroke-opacity="0.63"/></g>
<g transform="translate(271.3 278.2) rotate(0)"><ellipse rx="8.8" ry="6.7" fill="#5fb062" opacity="0.03"/><ellipse rx="3.4" ry="2.4" fill="#0a4d0e" fill-opacity=".5" stroke="#7cc67e" stroke-width="1" stroke-opacity="0.12"/></g>
<g transform="translate(279.6 277.2) rotate(-30)"><ellipse rx="10.2" ry="7.4" fill="#5fb062" opacity="0.10"/><ellipse rx="4.4" ry="2.9" fill="#0a4d0e" fill-opacity=".5" stroke="#7cc67e" stroke-width="1" stroke-opacity="0.21"/></g>
<g transform="translate(309.2 277.7) rotate(-45)"><ellipse rx="10.2" ry="7.4" fill="#5fb062" opacity="0.20"/><ellipse rx="4.4" ry="2.9" fill="#0a4d0e" fill-opacity=".5" stroke="#7cc67e" stroke-width="1" stroke-opacity="0.34"/></g>
<g transform="translate(332.2 215.4) rotate(-10)"><ellipse rx="10.6" ry="8.5" fill="#5fb062" opacity="0.10"/><ellipse rx="4.6" ry="3.6" fill="#0a4d0e" fill-opacity=".5" stroke="#7cc67e" stroke-width="1" stroke-opacity="0.21"/></g>
<g transform="translate(342.8 213.5) rotate(25)"><ellipse rx="10.2" ry="7.8" fill="#5fb062" opacity="0.06"/><ellipse rx="4.4" ry="3.1" fill="#0a4d0e" fill-opacity=".5" stroke="#7cc67e" stroke-width="1" stroke-opacity="0.16"/></g>
<g transform="translate(359.2 209.2) rotate(-20)"><ellipse rx="10.2" ry="7.4" fill="#5fb062" opacity="0.10"/><ellipse rx="4.4" ry="2.9" fill="#0a4d0e" fill-opacity=".5" stroke="#7cc67e" stroke-width="1" stroke-opacity="0.21"/></g>
<g transform="translate(363.9 214.6) rotate(-30)"><ellipse rx="8.8" ry="8.1" fill="#5fb062" opacity="0.20"/><ellipse rx="3.4" ry="3.3" fill="#0a4d0e" fill-opacity=".5" stroke="#7cc67e" stroke-width="1" stroke-opacity="0.34"/></g>
<g transform="translate(345.6 222.5) rotate(-70)"><ellipse rx="9.8" ry="8.1" fill="#5fb062" opacity="0.10"/><ellipse rx="4.1" ry="3.3" fill="#0a4d0e" fill-opacity=".5" stroke="#7cc67e" stroke-width="1" stroke-opacity="0.21"/></g>
<g transform="translate(400.1 224.2) rotate(100)"><ellipse rx="10.2" ry="7.4" fill="#5fb062" opacity="0.06"/><ellipse rx="4.4" ry="2.9" fill="#0a4d0e" fill-opacity=".5" stroke="#7cc67e" stroke-width="1" stroke-opacity="0.16"/></g>
<g transform="translate(332.2 227.8) rotate(-15)"><ellipse rx="11.6" ry="6.7" fill="#5fb062" opacity="0.06"/><ellipse rx="5.3" ry="2.4" fill="#0a4d0e" fill-opacity=".5" stroke="#7cc67e" stroke-width="1" stroke-opacity="0.16"/></g>
<g transform="translate(330.4 233.7) rotate(-5)"><ellipse rx="9.8" ry="7.4" fill="#5fb062" opacity="0.03"/><ellipse rx="4.1" ry="2.9" fill="#0a4d0e" fill-opacity=".5" stroke="#7cc67e" stroke-width="1" stroke-opacity="0.12"/></g>
<g transform="translate(341.9 239.4) rotate(-60)"><ellipse rx="10.2" ry="9.0" fill="#5fb062" opacity="0.03"/><ellipse rx="4.4" ry="4.0" fill="#0a4d0e" fill-opacity=".5" stroke="#7cc67e" stroke-width="1" stroke-opacity="0.12"/></g>
<g transform="translate(346.1 242.6) rotate(-75)"><ellipse rx="12.3" ry="7.4" fill="#5fb062" opacity="0.03"/><ellipse rx="5.7" ry="2.9" fill="#0a4d0e" fill-opacity=".5" stroke="#7cc67e" stroke-width="1" stroke-opacity="0.12"/></g>
<g transform="translate(373.3 249.3) rotate(90)"><ellipse rx="10.2" ry="8.5" fill="#5fb062" opacity="0.00"/><ellipse rx="4.4" ry="3.6" fill="#0a4d0e" fill-opacity=".5" stroke="#7cc67e" stroke-width="1" stroke-opacity="0.08"/></g>
<g transform="translate(383.7 246.3) rotate(20)"><ellipse rx="10.2" ry="8.1" fill="#5fb062" opacity="0.20"/><ellipse rx="4.4" ry="3.3" fill="#0a4d0e" fill-opacity=".5" stroke="#7cc67e" stroke-width="1" stroke-opacity="0.34"/></g>
<g transform="translate(399.0 252.8) rotate(70)"><ellipse rx="10.6" ry="7.4" fill="#5fb062" opacity="0.06"/><ellipse rx="4.6" ry="2.9" fill="#0a4d0e" fill-opacity=".5" stroke="#7cc67e" stroke-width="1" stroke-opacity="0.16"/></g>
<g transform="translate(355.3 256.0) rotate(-35)"><ellipse rx="12.3" ry="9.0" fill="#5fb062" opacity="0.20"/><ellipse rx="5.7" ry="4.0" fill="#0a4d0e" fill-opacity=".5" stroke="#7cc67e" stroke-width="1" stroke-opacity="0.34"/></g>
<g transform="translate(342.8 259.4) rotate(-20)"><ellipse rx="11.6" ry="7.7" fill="#5fb062" opacity="0.10"/><ellipse rx="5.3" ry="3.1" fill="#0a4d0e" fill-opacity=".5" stroke="#7cc67e" stroke-width="1" stroke-opacity="0.21"/></g>
<g transform="translate(387.9 258.0) rotate(20)"><ellipse rx="10.6" ry="7.7" fill="#5fb062" opacity="0.06"/><ellipse rx="4.6" ry="3.1" fill="#0a4d0e" fill-opacity=".5" stroke="#7cc67e" stroke-width="1" stroke-opacity="0.16"/></g>
<g transform="translate(393.8 263.4) rotate(10)"><ellipse rx="11.6" ry="7.7" fill="#5fb062" opacity="0.10"/><ellipse rx="5.3" ry="3.1" fill="#0a4d0e" fill-opacity=".5" stroke="#7cc67e" stroke-width="1" stroke-opacity="0.21"/></g>
<g transform="translate(372.4 261.1) rotate(40)"><ellipse rx="10.9" ry="7.4" fill="#5fb062" opacity="0.06"/><ellipse rx="4.8" ry="2.9" fill="#0a4d0e" fill-opacity=".5" stroke="#7cc67e" stroke-width="1" stroke-opacity="0.16"/></g>
<g transform="translate(371.9 266.3) rotate(35)"><ellipse rx="11.6" ry="8.1" fill="#5fb062" opacity="0.20"/><ellipse rx="5.3" ry="3.3" fill="#0a4d0e" fill-opacity=".5" stroke="#7cc67e" stroke-width="1" stroke-opacity="0.34"/></g>
<g transform="translate(356.7 267.8) rotate(-5)"><ellipse rx="10.9" ry="7.7" fill="#5fb062" opacity="0.00"/><ellipse rx="4.8" ry="3.1" fill="#0a4d0e" fill-opacity=".5" stroke="#7cc67e" stroke-width="1" stroke-opacity="0.08"/></g>
<g transform="translate(340.5 270.0) rotate(-10)"><ellipse rx="11.2" ry="8.5" fill="#5fb062" opacity="0.00"/><ellipse rx="5.0" ry="3.6" fill="#0a4d0e" fill-opacity=".5" stroke="#7cc67e" stroke-width="1" stroke-opacity="0.08"/></g>
<g transform="translate(327.2 274.3) rotate(10)"><ellipse rx="10.6" ry="7.4" fill="#5fb062" opacity="0.20"/><ellipse rx="4.6" ry="2.9" fill="#0a4d0e" fill-opacity=".5" stroke="#7cc67e" stroke-width="1" stroke-opacity="0.34"/></g>
<g transform="translate(386.2 277.2) rotate(0)"><ellipse rx="9.5" ry="8.1" fill="#5fb062" opacity="0.10"/><ellipse rx="3.9" ry="3.3" fill="#0a4d0e" fill-opacity=".5" stroke="#7cc67e" stroke-width="1" stroke-opacity="0.21"/></g>
<g transform="translate(345.6 205.2) rotate(0)"><ellipse rx="8.2" ry="5.0" fill="#5fb062" opacity="0.03"/><ellipse rx="3.0" ry="1.2" fill="#0a4d0e" fill-opacity=".5" stroke="#7cc67e" stroke-width="1" stroke-opacity="0.12"/></g>
<g transform="translate(171.3 294.5) rotate(-5)"><ellipse rx="11.6" ry="8.1" fill="#5fb062" opacity="0.06"/><ellipse rx="5.3" ry="3.3" fill="#0a4d0e" fill-opacity=".5" stroke="#7cc67e" stroke-width="1" stroke-opacity="0.16"/></g>
<g transform="translate(186.1 292.7) rotate(15)"><ellipse rx="11.6" ry="8.5" fill="#5fb062" opacity="0.03"/><ellipse rx="5.3" ry="3.6" fill="#0a4d0e" fill-opacity=".5" stroke="#7cc67e" stroke-width="1" stroke-opacity="0.12"/></g>
<g transform="translate(190.7 303.3) rotate(-25)"><ellipse rx="12.0" ry="8.5" fill="#5fb062" opacity="0.10"/><ellipse rx="5.6" ry="3.6" fill="#0a4d0e" fill-opacity=".5" stroke="#7cc67e" stroke-width="1" stroke-opacity="0.21"/></g>
<g transform="translate(174.1 307.5) rotate(-70)"><ellipse rx="10.9" ry="9.0" fill="#5fb062" opacity="0.10"/><ellipse rx="4.8" ry="4.0" fill="#0a4d0e" fill-opacity=".5" stroke="#7cc67e" stroke-width="1" stroke-opacity="0.21"/></g>
<g transform="translate(160.7 312.5) rotate(0)"><ellipse rx="8.2" ry="6.7" fill="#5fb062" opacity="0.00"/><ellipse rx="3.0" ry="2.4" fill="#0a4d0e" fill-opacity=".5" stroke="#7cc67e" stroke-width="1" stroke-opacity="0.08"/></g>
<g transform="translate(159.8 303.8) rotate(90)"><ellipse rx="6.8" ry="5.0" fill="#5fb062" opacity="0.00"/><ellipse rx="2.0" ry="1.2" fill="#0a4d0e" fill-opacity=".5" stroke="#7cc67e" stroke-width="1" stroke-opacity="0.08"/></g>
<g transform="translate(169.5 315.8) rotate(-35)"><ellipse rx="11.6" ry="8.1" fill="#5fb062" opacity="0.20"/><ellipse rx="5.3" ry="3.3" fill="#0a4d0e" fill-opacity=".5" stroke="#7cc67e" stroke-width="1" stroke-opacity="0.34"/></g>
<g transform="translate(175.0 320.2) rotate(20)"><ellipse rx="9.3" ry="7.7" fill="#5fb062" opacity="0.20"/><ellipse rx="3.7" ry="3.1" fill="#0a4d0e" fill-opacity=".5" stroke="#7cc67e" stroke-width="1" stroke-opacity="0.34"/></g>
<g transform="translate(191.0 315.6) rotate(-30)"><ellipse rx="9.8" ry="8.8" fill="#5fb062" opacity="0.06"/><ellipse rx="4.1" ry="3.8" fill="#0a4d0e" fill-opacity=".5" stroke="#7cc67e" stroke-width="1" stroke-opacity="0.16"/></g>
<g transform="translate(194.2 324.4) rotate(-65)"><ellipse rx="10.2" ry="8.1" fill="#5fb062" opacity="0.06"/><ellipse rx="4.4" ry="3.3" fill="#0a4d0e" fill-opacity=".5" stroke="#7cc67e" stroke-width="1" stroke-opacity="0.16"/></g>
<g transform="translate(180.5 332.8) rotate(-75)"><ellipse rx="10.6" ry="7.4" fill="#5fb062" opacity="0.06"/><ellipse rx="4.6" ry="2.9" fill="#0a4d0e" fill-opacity=".5" stroke="#7cc67e" stroke-width="1" stroke-opacity="0.16"/></g>
<g transform="translate(203.2 332.4) rotate(-30)"><ellipse rx="13.7" ry="7.4" fill="#5fb062" opacity="0.20"/><ellipse rx="6.7" ry="2.9" fill="#0a4d0e" fill-opacity=".5" stroke="#7cc67e" stroke-width="1" stroke-opacity="0.34"/></g>
<g transform="translate(219.8 291.3) rotate(85)"><ellipse rx="10.9" ry="7.4" fill="#5fb062" opacity="0.10"/><ellipse rx="4.8" ry="2.9" fill="#0a4d0e" fill-opacity=".5" stroke="#7cc67e" stroke-width="1" stroke-opacity="0.21"/></g>
<g transform="translate(225.8 290.8) rotate(60)"><ellipse rx="8.8" ry="7.1" fill="#5fb062" opacity="0.20"/><ellipse rx="3.4" ry="2.7" fill="#0a4d0e" fill-opacity=".5" stroke="#7cc67e" stroke-width="1" stroke-opacity="0.34"/></g>
<g transform="translate(231.3 289.5) rotate(10)"><ellipse rx="9.3" ry="7.1" fill="#5fb062" opacity="0.10"/><ellipse rx="3.7" ry="2.7" fill="#0a4d0e" fill-opacity=".5" stroke="#7cc67e" stroke-width="1" stroke-opacity="0.21"/></g>
<g transform="translate(227.2 297.5) rotate(0)"><ellipse rx="11.6" ry="7.1" fill="#5fb062" opacity="0.00"/><ellipse rx="5.3" ry="2.7" fill="#0a4d0e" fill-opacity=".5" stroke="#7cc67e" stroke-width="1" stroke-opacity="0.08"/></g>
<g transform="translate(210.1 309.1) rotate(60)"><ellipse rx="10.2" ry="8.5" fill="#5fb062" opacity="0.00"/><ellipse rx="4.4" ry="3.6" fill="#0a4d0e" fill-opacity=".5" stroke="#7cc67e" stroke-width="1" stroke-opacity="0.08"/></g>
<g transform="translate(225.5 313.2) rotate(15)"><ellipse rx="10.9" ry="7.7" fill="#5fb062" opacity="0.06"/><ellipse rx="4.8" ry="3.1" fill="#0a4d0e" fill-opacity=".5" stroke="#7cc67e" stroke-width="1" stroke-opacity="0.16"/></g>
<g transform="translate(211.6 319.3) rotate(40)"><ellipse rx="13.0" ry="7.4" fill="#5fb062" opacity="0.10"/><ellipse rx="6.2" ry="2.9" fill="#0a4d0e" fill-opacity=".5" stroke="#7cc67e" stroke-width="1" stroke-opacity="0.21"/></g>
<g transform="translate(223.9 323.2) rotate(35)"><ellipse rx="10.6" ry="7.4" fill="#5fb062" opacity="0.00"/><ellipse rx="4.6" ry="2.9" fill="#0a4d0e" fill-opacity=".5" stroke="#7cc67e" stroke-width="1" stroke-opacity="0.08"/></g>
<g transform="translate(238.2 327.8) rotate(50)"><ellipse rx="11.6" ry="9.0" fill="#5fb062" opacity="0.00"/><ellipse rx="5.3" ry="4.0" fill="#0a4d0e" fill-opacity=".5" stroke="#7cc67e" stroke-width="1" stroke-opacity="0.08"/></g>
<g transform="translate(186.5 344.8) rotate(-35)"><ellipse rx="12.3" ry="8.1" fill="#5fb062" opacity="0.06"/><ellipse rx="5.7" ry="3.3" fill="#0a4d0e" fill-opacity=".5" stroke="#7cc67e" stroke-width="1" stroke-opacity="0.16"/></g>
<g transform="translate(198.5 343.0) rotate(-30)"><ellipse rx="9.8" ry="8.1" fill="#5fb062" opacity="0.20"/><ellipse rx="4.1" ry="3.3" fill="#0a4d0e" fill-opacity=".5" stroke="#7cc67e" stroke-width="1" stroke-opacity="0.34"/></g>
<g transform="translate(204.5 348.4) rotate(-15)"><ellipse rx="9.8" ry="7.1" fill="#5fb062" opacity="0.10"/><ellipse rx="4.1" ry="2.7" fill="#0a4d0e" fill-opacity=".5" stroke="#7cc67e" stroke-width="1" stroke-opacity="0.21"/></g>
<g transform="translate(215.9 346.0) rotate(0)"><ellipse rx="8.8" ry="8.1" fill="#5fb062" opacity="0.06"/><ellipse rx="3.4" ry="3.3" fill="#0a4d0e" fill-opacity=".5" stroke="#7cc67e" stroke-width="1" stroke-opacity="0.16"/></g>
<g transform="translate(227.3 349.0) rotate(40)"><ellipse rx="11.6" ry="7.7" fill="#5fb062" opacity="0.10"/><ellipse rx="5.3" ry="3.1" fill="#0a4d0e" fill-opacity=".5" stroke="#7cc67e" stroke-width="1" stroke-opacity="0.21"/></g>
<g transform="translate(160.2 340.7) rotate(90)"><ellipse rx="7.5" ry="5.8" fill="#5fb062" opacity="0.06"/><ellipse rx="2.5" ry="1.8" fill="#0a4d0e" fill-opacity=".5" stroke="#7cc67e" stroke-width="1" stroke-opacity="0.16"/></g>
<g transform="translate(160.2 344.4) rotate(0)"><ellipse rx="6.5" ry="5.8" fill="#5fb062" opacity="0.00"/><ellipse rx="1.9" ry="1.8" fill="#0a4d0e" fill-opacity=".5" stroke="#7cc67e" stroke-width="1" stroke-opacity="0.08"/></g>
<g transform="translate(257.9 285.3) rotate(30)"><ellipse rx="10.9" ry="9.0" fill="#5fb062" opacity="0.42"/><ellipse rx="4.8" ry="4.0" fill="#0a4d0e" fill-opacity=".5" stroke="#7cc67e" stroke-width="1" stroke-opacity="0.63"/></g>
<g transform="translate(318.4 282.1) rotate(60)"><ellipse rx="9.5" ry="8.5" fill="#5fb062" opacity="0.10"/><ellipse rx="3.9" ry="3.6" fill="#0a4d0e" fill-opacity=".5" stroke="#7cc67e" stroke-width="1" stroke-opacity="0.21"/></g>
<g transform="translate(277.3 294.1) rotate(-25)"><ellipse rx="12.3" ry="7.1" fill="#5fb062" opacity="0.06"/><ellipse rx="5.7" ry="2.7" fill="#0a4d0e" fill-opacity=".5" stroke="#7cc67e" stroke-width="1" stroke-opacity="0.16"/></g>
<g transform="translate(310.5 292.2) rotate(50)"><ellipse rx="12.3" ry="7.4" fill="#5fb062" opacity="0.03"/><ellipse rx="5.7" ry="2.9" fill="#0a4d0e" fill-opacity=".5" stroke="#7cc67e" stroke-width="1" stroke-opacity="0.12"/></g>
<g transform="translate(255.6 301.7) rotate(5)"><ellipse rx="11.6" ry="6.7" fill="#5fb062" opacity="0.20"/><ellipse rx="5.3" ry="2.4" fill="#0a4d0e" fill-opacity=".5" stroke="#7cc67e" stroke-width="1" stroke-opacity="0.34"/></g>
<g transform="translate(273.9 304.4) rotate(0)"><ellipse rx="9.8" ry="7.1" fill="#5fb062" opacity="0.00"/><ellipse rx="4.1" ry="2.7" fill="#0a4d0e" fill-opacity=".5" stroke="#7cc67e" stroke-width="1" stroke-opacity="0.08"/></g>
<g transform="translate(270.8 310.7) rotate(15)"><ellipse rx="10.2" ry="6.7" fill="#5fb062" opacity="0.10"/><ellipse rx="4.4" ry="2.4" fill="#0a4d0e" fill-opacity=".5" stroke="#7cc67e" stroke-width="1" stroke-opacity="0.21"/></g>
<g transform="translate(305.9 312.8) rotate(5)"><ellipse rx="10.9" ry="7.1" fill="#5fb062" opacity="0.00"/><ellipse rx="4.8" ry="2.7" fill="#0a4d0e" fill-opacity=".5" stroke="#7cc67e" stroke-width="1" stroke-opacity="0.08"/></g>
<g transform="translate(298.4 323.9) rotate(85)"><ellipse rx="10.2" ry="7.8" fill="#5fb062" opacity="0.03"/><ellipse rx="4.4" ry="3.1" fill="#0a4d0e" fill-opacity=".5" stroke="#7cc67e" stroke-width="1" stroke-opacity="0.12"/></g>
<g transform="translate(311.5 323.6) rotate(10)"><ellipse rx="11.6" ry="9.0" fill="#5fb062" opacity="0.42"/><ellipse rx="5.3" ry="4.0" fill="#0a4d0e" fill-opacity=".5" stroke="#7cc67e" stroke-width="1" stroke-opacity="0.63"/></g>
<g transform="translate(285.6 328.5) rotate(-65)"><ellipse rx="11.2" ry="7.7" fill="#5fb062" opacity="0.06"/><ellipse rx="5.0" ry="3.1" fill="#0a4d0e" fill-opacity=".5" stroke="#7cc67e" stroke-width="1" stroke-opacity="0.16"/></g>
<g transform="translate(276.4 335.0) rotate(-30)"><ellipse rx="9.5" ry="8.5" fill="#5fb062" opacity="0.03"/><ellipse rx="3.9" ry="3.6" fill="#0a4d0e" fill-opacity=".5" stroke="#7cc67e" stroke-width="1" stroke-opacity="0.12"/></g>
<g transform="translate(248.2 339.0) rotate(10)"><ellipse rx="10.6" ry="7.7" fill="#5fb062" opacity="0.03"/><ellipse rx="4.6" ry="3.1" fill="#0a4d0e" fill-opacity=".5" stroke="#7cc67e" stroke-width="1" stroke-opacity="0.12"/></g>
<g transform="translate(298.8 336.5) rotate(-30)"><ellipse rx="10.9" ry="7.4" fill="#5fb062" opacity="0.10"/><ellipse rx="4.8" ry="2.9" fill="#0a4d0e" fill-opacity=".5" stroke="#7cc67e" stroke-width="1" stroke-opacity="0.21"/></g>
<g transform="translate(316.4 337.5) rotate(-60)"><ellipse rx="9.8" ry="8.1" fill="#5fb062" opacity="0.10"/><ellipse rx="4.1" ry="3.3" fill="#0a4d0e" fill-opacity=".5" stroke="#7cc67e" stroke-width="1" stroke-opacity="0.21"/></g>
<g transform="translate(269.0 346.2) rotate(0)"><ellipse rx="9.3" ry="8.5" fill="#5fb062" opacity="0.10"/><ellipse rx="3.7" ry="3.6" fill="#0a4d0e" fill-opacity=".5" stroke="#7cc67e" stroke-width="1" stroke-opacity="0.21"/></g>
<g transform="translate(303.6 344.4) rotate(-45)"><ellipse rx="9.8" ry="9.0" fill="#5fb062" opacity="0.00"/><ellipse rx="4.1" ry="4.0" fill="#0a4d0e" fill-opacity=".5" stroke="#7cc67e" stroke-width="1" stroke-opacity="0.08"/></g>
<g transform="translate(291.0 346.9) rotate(-15)"><ellipse rx="11.6" ry="7.4" fill="#5fb062" opacity="0.03"/><ellipse rx="5.3" ry="2.9" fill="#0a4d0e" fill-opacity=".5" stroke="#7cc67e" stroke-width="1" stroke-opacity="0.12"/></g>
<g transform="translate(260.7 351.8) rotate(0)"><ellipse rx="10.9" ry="8.8" fill="#5fb062" opacity="0.42"/><ellipse rx="4.8" ry="3.8" fill="#0a4d0e" fill-opacity=".5" stroke="#7cc67e" stroke-width="1" stroke-opacity="0.63"/></g>
<g transform="translate(319.8 351.3) rotate(0)"><ellipse rx="9.8" ry="7.4" fill="#5fb062" opacity="0.10"/><ellipse rx="4.1" ry="2.9" fill="#0a4d0e" fill-opacity=".5" stroke="#7cc67e" stroke-width="1" stroke-opacity="0.21"/></g>
<g transform="translate(338.2 282.1) rotate(-15)"><ellipse rx="10.2" ry="8.5" fill="#5fb062" opacity="0.10"/><ellipse rx="4.4" ry="3.6" fill="#0a4d0e" fill-opacity=".5" stroke="#7cc67e" stroke-width="1" stroke-opacity="0.21"/></g>
<g transform="translate(330.2 290.8) rotate(0)"><ellipse rx="9.3" ry="7.7" fill="#5fb062" opacity="0.20"/><ellipse rx="3.7" ry="3.1" fill="#0a4d0e" fill-opacity=".5" stroke="#7cc67e" stroke-width="1" stroke-opacity="0.34"/></g>
<g transform="translate(359.9 285.8) rotate(20)"><ellipse rx="10.2" ry="9.0" fill="#5fb062" opacity="0.06"/><ellipse rx="4.4" ry="4.0" fill="#0a4d0e" fill-opacity=".5" stroke="#7cc67e" stroke-width="1" stroke-opacity="0.16"/></g>
<g transform="translate(353.5 289.9) rotate(60)"><ellipse rx="10.2" ry="8.1" fill="#5fb062" opacity="0.03"/><ellipse rx="4.4" ry="3.3" fill="#0a4d0e" fill-opacity=".5" stroke="#7cc67e" stroke-width="1" stroke-opacity="0.12"/></g>
<g transform="translate(373.3 282.1) rotate(-25)"><ellipse rx="11.2" ry="8.8" fill="#5fb062" opacity="0.10"/><ellipse rx="5.0" ry="3.8" fill="#0a4d0e" fill-opacity=".5" stroke="#7cc67e" stroke-width="1" stroke-opacity="0.21"/></g>
<g transform="translate(383.5 286.2) rotate(10)"><ellipse rx="10.6" ry="7.4" fill="#5fb062" opacity="0.20"/><ellipse rx="4.6" ry="2.9" fill="#0a4d0e" fill-opacity=".5" stroke="#7cc67e" stroke-width="1" stroke-opacity="0.34"/></g>
<g transform="translate(396.4 279.3) rotate(80)"><ellipse rx="9.3" ry="7.4" fill="#5fb062" opacity="0.06"/><ellipse rx="3.7" ry="2.9" fill="#0a4d0e" fill-opacity=".5" stroke="#7cc67e" stroke-width="1" stroke-opacity="0.16"/></g>
<g transform="translate(372.6 294.5) rotate(60)"><ellipse rx="9.8" ry="8.5" fill="#5fb062" opacity="0.10"/><ellipse rx="4.1" ry="3.6" fill="#0a4d0e" fill-opacity=".5" stroke="#7cc67e" stroke-width="1" stroke-opacity="0.21"/></g>
<g transform="translate(391.0 293.8) rotate(-25)"><ellipse rx="9.8" ry="7.4" fill="#5fb062" opacity="0.06"/><ellipse rx="4.1" ry="2.9" fill="#0a4d0e" fill-opacity=".5" stroke="#7cc67e" stroke-width="1" stroke-opacity="0.16"/></g>
<g transform="translate(395.9 299.9) rotate(90)"><ellipse rx="8.8" ry="7.7" fill="#5fb062" opacity="0.10"/><ellipse rx="3.4" ry="3.1" fill="#0a4d0e" fill-opacity=".5" stroke="#7cc67e" stroke-width="1" stroke-opacity="0.21"/></g>
<g transform="translate(342.2 295.3) rotate(5)"><ellipse rx="11.2" ry="7.1" fill="#5fb062" opacity="0.03"/><ellipse rx="5.0" ry="2.7" fill="#0a4d0e" fill-opacity=".5" stroke="#7cc67e" stroke-width="1" stroke-opacity="0.12"/></g>
<g transform="translate(337.3 299.2) rotate(15)"><ellipse rx="9.5" ry="7.1" fill="#5fb062" opacity="0.03"/><ellipse rx="3.9" ry="2.7" fill="#0a4d0e" fill-opacity=".5" stroke="#7cc67e" stroke-width="1" stroke-opacity="0.12"/></g>
<g transform="translate(361.8 300.1) rotate(-5)"><ellipse rx="12.3" ry="7.1" fill="#5fb062" opacity="0.00"/><ellipse rx="5.7" ry="2.7" fill="#0a4d0e" fill-opacity=".5" stroke="#7cc67e" stroke-width="1" stroke-opacity="0.08"/></g>
<g transform="translate(326.2 303.8) rotate(15)"><ellipse rx="11.6" ry="8.1" fill="#5fb062" opacity="0.03"/><ellipse rx="5.3" ry="3.3" fill="#0a4d0e" fill-opacity=".5" stroke="#7cc67e" stroke-width="1" stroke-opacity="0.12"/></g>
<g transform="translate(324.4 309.8) rotate(50)"><ellipse rx="9.5" ry="7.4" fill="#5fb062" opacity="0.03"/><ellipse rx="3.9" ry="2.9" fill="#0a4d0e" fill-opacity=".5" stroke="#7cc67e" stroke-width="1" stroke-opacity="0.12"/></g>
<g transform="translate(349.3 307.0) rotate(0)"><ellipse rx="10.9" ry="7.1" fill="#5fb062" opacity="0.03"/><ellipse rx="4.8" ry="2.7" fill="#0a4d0e" fill-opacity=".5" stroke="#7cc67e" stroke-width="1" stroke-opacity="0.12"/></g>
<g transform="translate(367.8 308.8) rotate(-65)"><ellipse rx="13.0" ry="7.7" fill="#5fb062" opacity="0.03"/><ellipse rx="6.2" ry="3.1" fill="#0a4d0e" fill-opacity=".5" stroke="#7cc67e" stroke-width="1" stroke-opacity="0.12"/></g>
<g transform="translate(383.5 307.6) rotate(-60)"><ellipse rx="10.2" ry="8.8" fill="#5fb062" opacity="0.00"/><ellipse rx="4.4" ry="3.8" fill="#0a4d0e" fill-opacity=".5" stroke="#7cc67e" stroke-width="1" stroke-opacity="0.08"/></g>
<g transform="translate(338.9 313.6) rotate(-10)"><ellipse rx="10.2" ry="7.1" fill="#5fb062" opacity="0.10"/><ellipse rx="4.4" ry="2.7" fill="#0a4d0e" fill-opacity=".5" stroke="#7cc67e" stroke-width="1" stroke-opacity="0.21"/></g>
<g transform="translate(359.5 313.2) rotate(-70)"><ellipse rx="9.8" ry="7.4" fill="#5fb062" opacity="0.20"/><ellipse rx="4.1" ry="2.9" fill="#0a4d0e" fill-opacity=".5" stroke="#7cc67e" stroke-width="1" stroke-opacity="0.34"/></g>
<g transform="translate(392.0 317.4) rotate(85)"><ellipse rx="10.6" ry="6.3" fill="#5fb062" opacity="0.03"/><ellipse rx="4.6" ry="2.1" fill="#0a4d0e" fill-opacity=".5" stroke="#7cc67e" stroke-width="1" stroke-opacity="0.12"/></g>
<g transform="translate(396.8 314.8) rotate(70)"><ellipse rx="9.8" ry="6.7" fill="#5fb062" opacity="0.06"/><ellipse rx="4.1" ry="2.4" fill="#0a4d0e" fill-opacity=".5" stroke="#7cc67e" stroke-width="1" stroke-opacity="0.16"/></g>
<g transform="translate(349.8 319.3) rotate(0)"><ellipse rx="8.8" ry="7.4" fill="#5fb062" opacity="0.06"/><ellipse rx="3.4" ry="2.9" fill="#0a4d0e" fill-opacity=".5" stroke="#7cc67e" stroke-width="1" stroke-opacity="0.16"/></g>
<g transform="translate(365.9 323.6) rotate(-25)"><ellipse rx="9.5" ry="7.4" fill="#5fb062" opacity="0.00"/><ellipse rx="3.9" ry="2.9" fill="#0a4d0e" fill-opacity=".5" stroke="#7cc67e" stroke-width="1" stroke-opacity="0.08"/></g>
<g transform="translate(386.0 323.6) rotate(90)"><ellipse rx="10.6" ry="7.7" fill="#5fb062" opacity="0.42"/><ellipse rx="4.6" ry="3.1" fill="#0a4d0e" fill-opacity=".5" stroke="#7cc67e" stroke-width="1" stroke-opacity="0.63"/></g>
<g transform="translate(329.9 326.7) rotate(-15)"><ellipse rx="10.6" ry="7.4" fill="#5fb062" opacity="0.03"/><ellipse rx="4.6" ry="2.9" fill="#0a4d0e" fill-opacity=".5" stroke="#7cc67e" stroke-width="1" stroke-opacity="0.12"/></g>
<g transform="translate(359.0 328.2) rotate(75)"><ellipse rx="10.9" ry="7.7" fill="#5fb062" opacity="0.10"/><ellipse rx="4.8" ry="3.1" fill="#0a4d0e" fill-opacity=".5" stroke="#7cc67e" stroke-width="1" stroke-opacity="0.21"/></g>
<g transform="translate(394.8 331.5) rotate(0)"><ellipse rx="8.8" ry="7.4" fill="#5fb062" opacity="0.20"/><ellipse rx="3.4" ry="2.9" fill="#0a4d0e" fill-opacity=".5" stroke="#7cc67e" stroke-width="1" stroke-opacity="0.34"/></g>
<g transform="translate(331.8 336.5) rotate(-25)"><ellipse rx="10.9" ry="7.4" fill="#5fb062" opacity="0.06"/><ellipse rx="4.8" ry="2.9" fill="#0a4d0e" fill-opacity=".5" stroke="#7cc67e" stroke-width="1" stroke-opacity="0.16"/></g>
<g transform="translate(343.8 339.0) rotate(50)"><ellipse rx="10.9" ry="8.1" fill="#5fb062" opacity="0.20"/><ellipse rx="4.8" ry="3.3" fill="#0a4d0e" fill-opacity=".5" stroke="#7cc67e" stroke-width="1" stroke-opacity="0.34"/></g>
<g transform="translate(378.1 335.6) rotate(75)"><ellipse rx="10.6" ry="7.8" fill="#5fb062" opacity="0.20"/><ellipse rx="4.6" ry="3.1" fill="#0a4d0e" fill-opacity=".5" stroke="#7cc67e" stroke-width="1" stroke-opacity="0.34"/></g>
<g transform="translate(372.4 341.0) rotate(70)"><ellipse rx="11.6" ry="7.7" fill="#5fb062" opacity="0.06"/><ellipse rx="5.3" ry="3.1" fill="#0a4d0e" fill-opacity=".5" stroke="#7cc67e" stroke-width="1" stroke-opacity="0.16"/></g>
<g transform="translate(386.5 343.0) rotate(75)"><ellipse rx="11.6" ry="7.4" fill="#5fb062" opacity="0.03"/><ellipse rx="5.3" ry="2.9" fill="#0a4d0e" fill-opacity=".5" stroke="#7cc67e" stroke-width="1" stroke-opacity="0.12"/></g>
<g transform="translate(398.2 341.6) rotate(15)"><ellipse rx="10.2" ry="7.4" fill="#5fb062" opacity="0.20"/><ellipse rx="4.4" ry="2.9" fill="#0a4d0e" fill-opacity=".5" stroke="#7cc67e" stroke-width="1" stroke-opacity="0.34"/></g>
<g transform="translate(333.9 344.2) rotate(-10)"><ellipse rx="10.2" ry="6.7" fill="#5fb062" opacity="0.20"/><ellipse rx="4.4" ry="2.4" fill="#0a4d0e" fill-opacity=".5" stroke="#7cc67e" stroke-width="1" stroke-opacity="0.34"/></g>
<g transform="translate(336.8 349.9) rotate(15)"><ellipse rx="9.8" ry="7.4" fill="#5fb062" opacity="0.00"/><ellipse rx="4.1" ry="2.9" fill="#0a4d0e" fill-opacity=".5" stroke="#7cc67e" stroke-width="1" stroke-opacity="0.08"/></g>
<g transform="translate(397.6 349.9) rotate(70)"><ellipse rx="9.5" ry="7.4" fill="#5fb062" opacity="0.10"/><ellipse rx="3.9" ry="2.9" fill="#0a4d0e" fill-opacity=".5" stroke="#7cc67e" stroke-width="1" stroke-opacity="0.21"/></g>
<g transform="translate(402.8 326.8) rotate(90)"><ellipse rx="8.2" ry="6.1" fill="#5fb062" opacity="0.20"/><ellipse rx="3.0" ry="1.9" fill="#0a4d0e" fill-opacity=".5" stroke="#7cc67e" stroke-width="1" stroke-opacity="0.34"/></g>
<g transform="translate(181.5 353.4) rotate(-65)"><ellipse rx="11.4" ry="8.6" fill="#5fb062" opacity="0.10"/><ellipse rx="5.1" ry="3.7" fill="#0a4d0e" fill-opacity=".5" stroke="#7cc67e" stroke-width="1" stroke-opacity="0.21"/></g>
<g transform="translate(211.3 354.1) rotate(0)"><ellipse rx="9.7" ry="7.5" fill="#5fb062" opacity="0.10"/><ellipse rx="4.0" ry="2.9" fill="#0a4d0e" fill-opacity=".5" stroke="#7cc67e" stroke-width="1" stroke-opacity="0.21"/></g>
<g transform="translate(196.2 367.6) rotate(-5)"><ellipse rx="16.0" ry="8.6" fill="#5fb062" opacity="0.42"/><ellipse rx="8.2" ry="3.7" fill="#0a4d0e" fill-opacity=".5" stroke="#7cc67e" stroke-width="1" stroke-opacity="0.63"/></g>
<g transform="translate(216.0 366.6) rotate(-50)"><ellipse rx="11.4" ry="6.4" fill="#5fb062" opacity="0.10"/><ellipse rx="5.1" ry="2.2" fill="#0a4d0e" fill-opacity=".5" stroke="#7cc67e" stroke-width="1" stroke-opacity="0.21"/></g>
<g transform="translate(229.9 364.3) rotate(15)"><ellipse rx="11.8" ry="7.8" fill="#5fb062" opacity="0.10"/><ellipse rx="5.4" ry="3.1" fill="#0a4d0e" fill-opacity=".5" stroke="#7cc67e" stroke-width="1" stroke-opacity="0.21"/></g>
<g transform="translate(162.7 372.8) rotate(-25)"><ellipse rx="9.7" ry="5.9" fill="#5fb062" opacity="0.00"/><ellipse rx="4.0" ry="1.8" fill="#0a4d0e" fill-opacity=".5" stroke="#7cc67e" stroke-width="1" stroke-opacity="0.08"/></g>
<g transform="translate(179.2 377.0) rotate(5)"><ellipse rx="11.1" ry="8.2" fill="#5fb062" opacity="0.10"/><ellipse rx="4.9" ry="3.4" fill="#0a4d0e" fill-opacity=".5" stroke="#7cc67e" stroke-width="1" stroke-opacity="0.21"/></g>
<g transform="translate(192.4 376.1) rotate(15)"><ellipse rx="9.9" ry="7.5" fill="#5fb062" opacity="0.10"/><ellipse rx="4.2" ry="2.9" fill="#0a4d0e" fill-opacity=".5" stroke="#7cc67e" stroke-width="1" stroke-opacity="0.21"/></g>
<g transform="translate(199.5 377.7) rotate(0)"><ellipse rx="9.4" ry="7.2" fill="#5fb062" opacity="0.00"/><ellipse rx="3.8" ry="2.7" fill="#0a4d0e" fill-opacity=".5" stroke="#7cc67e" stroke-width="1" stroke-opacity="0.08"/></g>
<g transform="translate(213.6 374.7) rotate(0)"><ellipse rx="10.4" ry="7.8" fill="#5fb062" opacity="0.03"/><ellipse rx="4.4" ry="3.1" fill="#0a4d0e" fill-opacity=".5" stroke="#7cc67e" stroke-width="1" stroke-opacity="0.12"/></g>
<g transform="translate(226.6 372.6) rotate(45)"><ellipse rx="9.9" ry="9.1" fill="#5fb062" opacity="0.00"/><ellipse rx="4.2" ry="4.1" fill="#0a4d0e" fill-opacity=".5" stroke="#7cc67e" stroke-width="1" stroke-opacity="0.08"/></g>
<g transform="translate(231.6 379.4) rotate(-35)"><ellipse rx="11.1" ry="7.2" fill="#5fb062" opacity="0.03"/><ellipse rx="4.9" ry="2.7" fill="#0a4d0e" fill-opacity=".5" stroke="#7cc67e" stroke-width="1" stroke-opacity="0.12"/></g>
<g transform="translate(189.1 383.1) rotate(-5)"><ellipse rx="16.0" ry="7.8" fill="#5fb062" opacity="0.42"/><ellipse rx="8.2" ry="3.1" fill="#0a4d0e" fill-opacity=".5" stroke="#7cc67e" stroke-width="1" stroke-opacity="0.63"/></g>
<g transform="translate(166.7 386.2) rotate(10)"><ellipse rx="13.2" ry="6.8" fill="#5fb062" opacity="0.10"/><ellipse rx="6.3" ry="2.5" fill="#0a4d0e" fill-opacity=".5" stroke="#7cc67e" stroke-width="1" stroke-opacity="0.21"/></g>
<g transform="translate(228.0 388.3) rotate(0)"><ellipse rx="10.8" ry="7.8" fill="#5fb062" opacity="0.03"/><ellipse rx="4.7" ry="3.1" fill="#0a4d0e" fill-opacity=".5" stroke="#7cc67e" stroke-width="1" stroke-opacity="0.12"/></g>
<g transform="translate(173.5 399.2) rotate(80)"><ellipse rx="9.9" ry="8.6" fill="#5fb062" opacity="0.00"/><ellipse rx="4.2" ry="3.7" fill="#0a4d0e" fill-opacity=".5" stroke="#7cc67e" stroke-width="1" stroke-opacity="0.08"/></g>
<g transform="translate(233.9 400.8) rotate(-65)"><ellipse rx="10.8" ry="6.8" fill="#5fb062" opacity="0.06"/><ellipse rx="4.7" ry="2.5" fill="#0a4d0e" fill-opacity=".5" stroke="#7cc67e" stroke-width="1" stroke-opacity="0.16"/></g>
<g transform="translate(168.8 408.4) rotate(55)"><ellipse rx="12.2" ry="7.8" fill="#5fb062" opacity="0.20"/><ellipse rx="5.7" ry="3.1" fill="#0a4d0e" fill-opacity=".5" stroke="#7cc67e" stroke-width="1" stroke-opacity="0.34"/></g>
<g transform="translate(176.8 407.2) rotate(-80)"><ellipse rx="12.5" ry="8.2" fill="#5fb062" opacity="0.42"/><ellipse rx="5.9" ry="3.4" fill="#0a4d0e" fill-opacity=".5" stroke="#7cc67e" stroke-width="1" stroke-opacity="0.63"/></g>
<g transform="translate(175.9 412.4) rotate(0)"><ellipse rx="9.7" ry="8.2" fill="#5fb062" opacity="0.00"/><ellipse rx="4.0" ry="3.4" fill="#0a4d0e" fill-opacity=".5" stroke="#7cc67e" stroke-width="1" stroke-opacity="0.08"/></g>
<g transform="translate(188.1 414.8) rotate(-75)"><ellipse rx="12.8" ry="7.2" fill="#5fb062" opacity="0.00"/><ellipse rx="6.1" ry="2.7" fill="#0a4d0e" fill-opacity=".5" stroke="#7cc67e" stroke-width="1" stroke-opacity="0.08"/></g>
<g transform="translate(227.3 421.2) rotate(88)"><ellipse rx="11.8" ry="7.1" fill="#5fb062" opacity="0.00"/><ellipse rx="5.4" ry="2.6" fill="#0a4d0e" fill-opacity=".5" stroke="#7cc67e" stroke-width="1" stroke-opacity="0.08"/></g>
<g transform="translate(212.9 423.1) rotate(-15)"><ellipse rx="9.7" ry="7.2" fill="#5fb062" opacity="0.20"/><ellipse rx="4.0" ry="2.7" fill="#0a4d0e" fill-opacity=".5" stroke="#7cc67e" stroke-width="1" stroke-opacity="0.34"/></g>
<g transform="translate(199.3 425.6) rotate(-3)"><ellipse rx="14.6" ry="6.8" fill="#5fb062" opacity="0.03"/><ellipse rx="7.3" ry="2.5" fill="#0a4d0e" fill-opacity=".5" stroke="#7cc67e" stroke-width="1" stroke-opacity="0.12"/></g>
<g transform="translate(176.8 428.3) rotate(0)"><ellipse rx="6.8" ry="4.2" fill="#5fb062" opacity="0.20"/><ellipse rx="2.1" ry="0.7" fill="#0a4d0e" fill-opacity=".5" stroke="#7cc67e" stroke-width="1" stroke-opacity="0.34"/></g>
<g transform="translate(244.7 353.4) rotate(-30)"><ellipse rx="9.9" ry="8.9" fill="#5fb062" opacity="0.42"/><ellipse rx="4.2" ry="3.9" fill="#0a4d0e" fill-opacity=".5" stroke="#7cc67e" stroke-width="1" stroke-opacity="0.63"/></g>
<g transform="translate(298.5 355.8) rotate(15)"><ellipse rx="10.8" ry="7.5" fill="#5fb062" opacity="0.00"/><ellipse rx="4.7" ry="2.9" fill="#0a4d0e" fill-opacity=".5" stroke="#7cc67e" stroke-width="1" stroke-opacity="0.08"/></g>
<g transform="translate(275.3 361.4) rotate(-20)"><ellipse rx="11.1" ry="8.2" fill="#5fb062" opacity="0.06"/><ellipse rx="4.9" ry="3.4" fill="#0a4d0e" fill-opacity=".5" stroke="#7cc67e" stroke-width="1" stroke-opacity="0.16"/></g>
<g transform="translate(247.7 366.0) rotate(-20)"><ellipse rx="9.9" ry="8.9" fill="#5fb062" opacity="0.42"/><ellipse rx="4.2" ry="3.9" fill="#0a4d0e" fill-opacity=".5" stroke="#7cc67e" stroke-width="1" stroke-opacity="0.63"/></g>
<g transform="translate(298.7 362.2) rotate(80)"><ellipse rx="11.4" ry="7.5" fill="#5fb062" opacity="0.20"/><ellipse rx="5.1" ry="2.9" fill="#0a4d0e" fill-opacity=".5" stroke="#7cc67e" stroke-width="1" stroke-opacity="0.34"/></g>
<g transform="translate(315.0 363.3) rotate(-25)"><ellipse rx="11.1" ry="7.5" fill="#5fb062" opacity="0.00"/><ellipse rx="4.9" ry="2.9" fill="#0a4d0e" fill-opacity=".5" stroke="#7cc67e" stroke-width="1" stroke-opacity="0.08"/></g>
<g transform="translate(263.4 369.9) rotate(80)"><ellipse rx="9.7" ry="8.2" fill="#5fb062" opacity="0.00"/><ellipse rx="4.0" ry="3.4" fill="#0a4d0e" fill-opacity=".5" stroke="#7cc67e" stroke-width="1" stroke-opacity="0.08"/></g>
<g transform="translate(291.9 367.6) rotate(60)"><ellipse rx="12.2" ry="8.2" fill="#5fb062" opacity="0.03"/><ellipse rx="5.7" ry="3.4" fill="#0a4d0e" fill-opacity=".5" stroke="#7cc67e" stroke-width="1" stroke-opacity="0.12"/></g>
<g transform="translate(309.3 369.9) rotate(0)"><ellipse rx="9.0" ry="7.5" fill="#5fb062" opacity="0.20"/><ellipse rx="3.5" ry="2.9" fill="#0a4d0e" fill-opacity=".5" stroke="#7cc67e" stroke-width="1" stroke-opacity="0.34"/></g>
<g transform="translate(274.9 375.1) rotate(60)"><ellipse rx="12.8" ry="8.2" fill="#5fb062" opacity="0.10"/><ellipse rx="6.1" ry="3.4" fill="#0a4d0e" fill-opacity=".5" stroke="#7cc67e" stroke-width="1" stroke-opacity="0.21"/></g>
<g transform="translate(307.9 375.9) rotate(0)"><ellipse rx="9.4" ry="7.8" fill="#5fb062" opacity="0.03"/><ellipse rx="3.8" ry="3.1" fill="#0a4d0e" fill-opacity=".5" stroke="#7cc67e" stroke-width="1" stroke-opacity="0.12"/></g>
<g transform="translate(322.1 373.7) rotate(0)"><ellipse rx="11.1" ry="7.5" fill="#5fb062" opacity="0.06"/><ellipse rx="4.9" ry="2.9" fill="#0a4d0e" fill-opacity=".5" stroke="#7cc67e" stroke-width="1" stroke-opacity="0.16"/></g>
<g transform="translate(318.3 379.6) rotate(-5)"><ellipse rx="11.8" ry="7.2" fill="#5fb062" opacity="0.06"/><ellipse rx="5.4" ry="2.7" fill="#0a4d0e" fill-opacity=".5" stroke="#7cc67e" stroke-width="1" stroke-opacity="0.16"/></g>
<g transform="translate(260.5 385.2) rotate(0)"><ellipse rx="10.8" ry="10.0" fill="#5fb062" opacity="0.42"/><ellipse rx="4.7" ry="4.6" fill="#0a4d0e" fill-opacity=".5" stroke="#7cc67e" stroke-width="1" stroke-opacity="0.63"/></g>
<g transform="translate(269.2 383.1) rotate(-20)"><ellipse rx="11.8" ry="9.6" fill="#5fb062" opacity="0.20"/><ellipse rx="5.4" ry="4.3" fill="#0a4d0e" fill-opacity=".5" stroke="#7cc67e" stroke-width="1" stroke-opacity="0.34"/></g>
<g transform="translate(246.4 387.9) rotate(85)"><ellipse rx="11.8" ry="7.5" fill="#5fb062" opacity="0.06"/><ellipse rx="5.4" ry="2.9" fill="#0a4d0e" fill-opacity=".5" stroke="#7cc67e" stroke-width="1" stroke-opacity="0.16"/></g>
<g transform="translate(302.2 386.2) rotate(15)"><ellipse rx="12.8" ry="7.1" fill="#5fb062" opacity="0.10"/><ellipse rx="6.1" ry="2.6" fill="#0a4d0e" fill-opacity=".5" stroke="#7cc67e" stroke-width="1" stroke-opacity="0.21"/></g>
<g transform="translate(298.0 390.9) rotate(35)"><ellipse rx="11.8" ry="7.8" fill="#5fb062" opacity="0.00"/><ellipse rx="5.4" ry="3.1" fill="#0a4d0e" fill-opacity=".5" stroke="#7cc67e" stroke-width="1" stroke-opacity="0.08"/></g>
<g transform="translate(312.1 394.7) rotate(20)"><ellipse rx="11.8" ry="7.2" fill="#5fb062" opacity="0.00"/><ellipse rx="5.4" ry="2.7" fill="#0a4d0e" fill-opacity=".5" stroke="#7cc67e" stroke-width="1" stroke-opacity="0.08"/></g>
<g transform="translate(278.5 394.5) rotate(-35)"><ellipse rx="11.8" ry="7.2" fill="#5fb062" opacity="0.10"/><ellipse rx="5.4" ry="2.7" fill="#0a4d0e" fill-opacity=".5" stroke="#7cc67e" stroke-width="1" stroke-opacity="0.21"/></g>
<g transform="translate(263.4 401.1) rotate(10)"><ellipse rx="9.9" ry="8.6" fill="#5fb062" opacity="0.10"/><ellipse rx="4.2" ry="3.7" fill="#0a4d0e" fill-opacity=".5" stroke="#7cc67e" stroke-width="1" stroke-opacity="0.21"/></g>
<g transform="translate(285.5 400.1) rotate(10)"><ellipse rx="9.9" ry="8.6" fill="#5fb062" opacity="0.10"/><ellipse rx="4.2" ry="3.7" fill="#0a4d0e" fill-opacity=".5" stroke="#7cc67e" stroke-width="1" stroke-opacity="0.21"/></g>
<g transform="translate(303.9 403.9) rotate(-10)"><ellipse rx="11.8" ry="6.8" fill="#5fb062" opacity="0.10"/><ellipse rx="5.4" ry="2.5" fill="#0a4d0e" fill-opacity=".5" stroke="#7cc67e" stroke-width="1" stroke-opacity="0.21"/></g>
<g transform="translate(279.4 406.9) rotate(25)"><ellipse rx="11.1" ry="6.8" fill="#5fb062" opacity="0.06"/><ellipse rx="4.9" ry="2.5" fill="#0a4d0e" fill-opacity=".5" stroke="#7cc67e" stroke-width="1" stroke-opacity="0.16"/></g>
<g transform="translate(292.1 411.7) rotate(-10)"><ellipse rx="9.0" ry="7.5" fill="#5fb062" opacity="0.00"/><ellipse rx="3.5" ry="2.9" fill="#0a4d0e" fill-opacity=".5" stroke="#7cc67e" stroke-width="1" stroke-opacity="0.08"/></g>
<g transform="translate(308.8 412.4) rotate(-30)"><ellipse rx="11.1" ry="9.1" fill="#5fb062" opacity="0.03"/><ellipse rx="4.9" ry="4.1" fill="#0a4d0e" fill-opacity=".5" stroke="#7cc67e" stroke-width="1" stroke-opacity="0.12"/></g>
<g transform="translate(250.8 412.4) rotate(-80)"><ellipse rx="12.2" ry="7.5" fill="#5fb062" opacity="0.00"/><ellipse rx="5.7" ry="2.9" fill="#0a4d0e" fill-opacity=".5" stroke="#7cc67e" stroke-width="1" stroke-opacity="0.08"/></g>
<g transform="translate(242.3 414.3) rotate(-85)"><ellipse rx="19.6" ry="10.2" fill="#5fb062" opacity="0.42"/><ellipse rx="10.6" ry="4.8" fill="#0a4d0e" fill-opacity=".5" stroke="#7cc67e" stroke-width="1" stroke-opacity="0.63"/></g>
<g transform="translate(268.3 415.0) rotate(-20)"><ellipse rx="11.8" ry="7.2" fill="#5fb062" opacity="0.06"/><ellipse rx="5.4" ry="2.7" fill="#0a4d0e" fill-opacity=".5" stroke="#7cc67e" stroke-width="1" stroke-opacity="0.16"/></g>
<g transform="translate(277.2 423.7) rotate(-35)"><ellipse rx="12.5" ry="9.1" fill="#5fb062" opacity="0.06"/><ellipse rx="5.9" ry="4.1" fill="#0a4d0e" fill-opacity=".5" stroke="#7cc67e" stroke-width="1" stroke-opacity="0.16"/></g>
<g transform="translate(294.2 425.1) rotate(0)"><ellipse rx="8.5" ry="7.5" fill="#5fb062" opacity="0.10"/><ellipse rx="3.2" ry="2.9" fill="#0a4d0e" fill-opacity=".5" stroke="#7cc67e" stroke-width="1" stroke-opacity="0.21"/></g>
<g transform="translate(265.4 427.0) rotate(0)"><ellipse rx="7.5" ry="5.5" fill="#5fb062" opacity="0.03"/><ellipse rx="2.6" ry="1.5" fill="#0a4d0e" fill-opacity=".5" stroke="#7cc67e" stroke-width="1" stroke-opacity="0.12"/></g>
<g transform="translate(252.7 428.0) rotate(0)"><ellipse rx="6.8" ry="4.5" fill="#5fb062" opacity="0.20"/><ellipse rx="2.1" ry="0.9" fill="#0a4d0e" fill-opacity=".5" stroke="#7cc67e" stroke-width="1" stroke-opacity="0.34"/></g>
<g transform="translate(331.5 355.8) rotate(-10)"><ellipse rx="10.8" ry="7.2" fill="#5fb062" opacity="0.00"/><ellipse rx="4.7" ry="2.7" fill="#0a4d0e" fill-opacity=".5" stroke="#7cc67e" stroke-width="1" stroke-opacity="0.08"/></g>
<g transform="translate(344.9 357.2) rotate(0)"><ellipse rx="9.7" ry="8.9" fill="#5fb062" opacity="0.03"/><ellipse rx="4.0" ry="3.9" fill="#0a4d0e" fill-opacity=".5" stroke="#7cc67e" stroke-width="1" stroke-opacity="0.12"/></g>
<g transform="translate(352.7 355.8) rotate(85)"><ellipse rx="11.8" ry="7.5" fill="#5fb062" opacity="0.20"/><ellipse rx="5.4" ry="2.9" fill="#0a4d0e" fill-opacity=".5" stroke="#7cc67e" stroke-width="1" stroke-opacity="0.34"/></g>
<g transform="translate(376.3 353.9) rotate(40)"><ellipse rx="9.7" ry="8.6" fill="#5fb062" opacity="0.06"/><ellipse rx="4.0" ry="3.7" fill="#0a4d0e" fill-opacity=".5" stroke="#7cc67e" stroke-width="1" stroke-opacity="0.16"/></g>
<g transform="translate(357.0 364.3) rotate(-75)"><ellipse rx="11.4" ry="7.8" fill="#5fb062" opacity="0.03"/><ellipse rx="5.1" ry="3.1" fill="#0a4d0e" fill-opacity=".5" stroke="#7cc67e" stroke-width="1" stroke-opacity="0.12"/></g>
<g transform="translate(326.8 365.2) rotate(-20)"><ellipse rx="9.7" ry="7.5" fill="#5fb062" opacity="0.20"/><ellipse rx="4.0" ry="2.9" fill="#0a4d0e" fill-opacity=".5" stroke="#7cc67e" stroke-width="1" stroke-opacity="0.34"/></g>
<g transform="translate(332.9 365.2) rotate(30)"><ellipse rx="10.4" ry="9.1" fill="#5fb062" opacity="0.00"/><ellipse rx="4.4" ry="4.1" fill="#0a4d0e" fill-opacity=".5" stroke="#7cc67e" stroke-width="1" stroke-opacity="0.08"/></g>
<g transform="translate(349.9 372.8) rotate(25)"><ellipse rx="11.4" ry="8.2" fill="#5fb062" opacity="0.20"/><ellipse rx="5.1" ry="3.4" fill="#0a4d0e" fill-opacity=".5" stroke="#7cc67e" stroke-width="1" stroke-opacity="0.34"/></g>
<g transform="translate(343.0 378.2) rotate(-25)"><ellipse rx="9.9" ry="7.2" fill="#5fb062" opacity="0.06"/><ellipse rx="4.2" ry="2.7" fill="#0a4d0e" fill-opacity=".5" stroke="#7cc67e" stroke-width="1" stroke-opacity="0.16"/></g>
<g transform="translate(333.6 379.8) rotate(-5)"><ellipse rx="9.7" ry="6.8" fill="#5fb062" opacity="0.00"/><ellipse rx="4.0" ry="2.5" fill="#0a4d0e" fill-opacity=".5" stroke="#7cc67e" stroke-width="1" stroke-opacity="0.08"/></g>
<g transform="translate(358.6 394.5) rotate(30)"><ellipse rx="9.7" ry="8.6" fill="#5fb062" opacity="0.06"/><ellipse rx="4.0" ry="3.7" fill="#0a4d0e" fill-opacity=".5" stroke="#7cc67e" stroke-width="1" stroke-opacity="0.16"/></g>
<g transform="translate(375.6 396.4) rotate(-10)"><ellipse rx="12.2" ry="7.2" fill="#5fb062" opacity="0.20"/><ellipse rx="5.7" ry="2.7" fill="#0a4d0e" fill-opacity=".5" stroke="#7cc67e" stroke-width="1" stroke-opacity="0.34"/></g>
<g transform="translate(393.3 397.1) rotate(-10)"><ellipse rx="9.9" ry="7.5" fill="#5fb062" opacity="0.06"/><ellipse rx="4.2" ry="2.9" fill="#0a4d0e" fill-opacity=".5" stroke="#7cc67e" stroke-width="1" stroke-opacity="0.16"/></g>
<g transform="translate(353.2 405.3) rotate(75)"><ellipse rx="11.8" ry="7.8" fill="#5fb062" opacity="0.03"/><ellipse rx="5.4" ry="3.1" fill="#0a4d0e" fill-opacity=".5" stroke="#7cc67e" stroke-width="1" stroke-opacity="0.12"/></g>
<g transform="translate(328.7 413.3) rotate(50)"><ellipse rx="11.1" ry="9.1" fill="#5fb062" opacity="0.06"/><ellipse rx="4.9" ry="4.1" fill="#0a4d0e" fill-opacity=".5" stroke="#7cc67e" stroke-width="1" stroke-opacity="0.16"/></g>
<g transform="translate(368.5 414.1) rotate(-80)"><ellipse rx="10.8" ry="8.2" fill="#5fb062" opacity="0.03"/><ellipse rx="4.7" ry="3.4" fill="#0a4d0e" fill-opacity=".5" stroke="#7cc67e" stroke-width="1" stroke-opacity="0.12"/></g>
<g transform="translate(392.2 414.3) rotate(10)"><ellipse rx="11.4" ry="7.5" fill="#5fb062" opacity="0.20"/><ellipse rx="5.1" ry="2.9" fill="#0a4d0e" fill-opacity=".5" stroke="#7cc67e" stroke-width="1" stroke-opacity="0.34"/></g>
<g transform="translate(345.7 420.1) rotate(55)"><ellipse rx="11.8" ry="7.5" fill="#5fb062" opacity="0.20"/><ellipse rx="5.4" ry="2.9" fill="#0a4d0e" fill-opacity=".5" stroke="#7cc67e" stroke-width="1" stroke-opacity="0.34"/></g>
<g transform="translate(389.1 423.9) rotate(5)"><ellipse rx="9.9" ry="7.5" fill="#5fb062" opacity="0.20"/><ellipse rx="4.2" ry="2.9" fill="#0a4d0e" fill-opacity=".5" stroke="#7cc67e" stroke-width="1" stroke-opacity="0.34"/></g>
<g transform="translate(328.2 425.1) rotate(0)"><ellipse rx="9.0" ry="7.5" fill="#5fb062" opacity="0.06"/><ellipse rx="3.5" ry="2.9" fill="#0a4d0e" fill-opacity=".5" stroke="#7cc67e" stroke-width="1" stroke-opacity="0.16"/></g>
<g transform="translate(352.3 426.1) rotate(0)"><ellipse rx="8.0" ry="6.8" fill="#5fb062" opacity="0.03"/><ellipse rx="2.8" ry="2.5" fill="#0a4d0e" fill-opacity=".5" stroke="#7cc67e" stroke-width="1" stroke-opacity="0.12"/></g>
<g transform="translate(378.9 425.1) rotate(90)"><ellipse rx="9.0" ry="6.8" fill="#5fb062" opacity="0.20"/><ellipse rx="3.5" ry="2.5" fill="#0a4d0e" fill-opacity=".5" stroke="#7cc67e" stroke-width="1" stroke-opacity="0.34"/></g>
<g transform="translate(402.5 405.3) rotate(90)"><ellipse rx="9.0" ry="6.1" fill="#5fb062" opacity="0.03"/><ellipse rx="3.5" ry="2.0" fill="#0a4d0e" fill-opacity=".5" stroke="#7cc67e" stroke-width="1" stroke-opacity="0.12"/></g>
<g transform="translate(402.8 418.5) rotate(90)"><ellipse rx="8.2" ry="6.1" fill="#5fb062" opacity="0.03"/><ellipse rx="3.0" ry="2.0" fill="#0a4d0e" fill-opacity=".5" stroke="#7cc67e" stroke-width="1" stroke-opacity="0.12"/></g>
</g></g></g>
<ellipse cx="277.1" cy="319.6" rx="65.5" ry="63.2" fill="none" stroke="#ff9c00" stroke-width="1.1"/>
<rect x="157" y="204" width="2" height="228" fill="#0a246a"/>
<rect x="157" y="430" width="249" height="2" fill="#0a246a"/>
<path d="M153.5 204.5h3.5 M155.5 218.6h1.5 M155.5 232.8h1.5 M155.5 246.9h1.5 M153.5 261.0h3.5 M155.5 275.1h1.5 M155.5 289.2h1.5 M155.5 303.4h1.5 M153.5 317.5h3.5 M155.5 331.6h1.5 M155.5 345.8h1.5 M155.5 359.9h1.5 M153.5 374.0h3.5 M155.5 388.1h1.5 M155.5 402.2h1.5 M155.5 416.4h1.5 M153.5 430.5h3.5 M158.0 432v3.5 M173.4 432v2 M188.8 432v2 M204.1 432v2 M219.5 432v3.5 M234.9 432v2 M250.2 432v2 M265.6 432v2 M281.0 432v3.5 M296.4 432v2 M311.8 432v2 M327.1 432v2 M342.5 432v3.5 M357.9 432v2 M373.2 432v2 M388.6 432v2 M404.0 432v3.5" stroke="#0a246a" stroke-width="1" fill="none"/>
<text x="146.85" y="207.3" font-family="Liberation Sans,sans-serif" font-size="8.2" fill="#7f7fd2" text-anchor="start" textLength="4.1499999999999995" lengthAdjust="spacing">0</text>
<text x="136.75" y="263.8" font-family="Liberation Sans,sans-serif" font-size="8.2" fill="#7f7fd2" text-anchor="start" textLength="14.249999999999998" lengthAdjust="spacing">160</text>
<text x="136.75" y="320.3" font-family="Liberation Sans,sans-serif" font-size="8.2" fill="#7f7fd2" text-anchor="start" textLength="14.249999999999998" lengthAdjust="spacing">320</text>
<text x="136.75" y="376.8" font-family="Liberation Sans,sans-serif" font-size="8.2" fill="#7f7fd2" text-anchor="start" textLength="14.249999999999998" lengthAdjust="spacing">480</text>
<text x="136.75" y="433.3" font-family="Liberation Sans,sans-serif" font-size="8.2" fill="#7f7fd2" text-anchor="start" textLength="14.249999999999998" lengthAdjust="spacing">640</text>
<text x="155.525" y="444.6" font-family="Liberation Sans,sans-serif" font-size="8.2" fill="#7f7fd2" text-anchor="start" textLength="4.1499999999999995" lengthAdjust="spacing">0</text>
<text x="212.575" y="444.6" font-family="Liberation Sans,sans-serif" font-size="8.2" fill="#7f7fd2" text-anchor="start" textLength="14.249999999999998" lengthAdjust="spacing">160</text>
<text x="274.075" y="444.6" font-family="Liberation Sans,sans-serif" font-size="8.2" fill="#7f7fd2" text-anchor="start" textLength="14.249999999999998" lengthAdjust="spacing">320</text>
<text x="335.475" y="444.6" font-family="Liberation Sans,sans-serif" font-size="8.2" fill="#7f7fd2" text-anchor="start" textLength="14.249999999999998" lengthAdjust="spacing">480</text>
<text x="397.175" y="444.6" font-family="Liberation Sans,sans-serif" font-size="8.2" fill="#7f7fd2" text-anchor="start" textLength="14.249999999999998" lengthAdjust="spacing">640</text>
<text x="250.3" y="458" font-family="Liberation Sans,sans-serif" font-size="11.6" fill="#000080" text-anchor="start" textLength="60.4" lengthAdjust="spacing">Cytoplasm</text>
<rect x="230.5" y="183.5" width="80" height="15" fill="#fff" stroke="#9c1c28" stroke-width="1"/>
<text x="232.9" y="194.9" font-family="Liberation Sans,sans-serif" font-size="10.7" fill="#000080" text-anchor="start" textLength="74.7" lengthAdjust="spacing">cells_10.cpout</text>
<text x="224.7" y="233.7" font-family="Liberation Sans,sans-serif" font-size="11.5" fill="#ff9a00" text-anchor="start" font-weight="bold" textLength="111.7" lengthAdjust="spacingAndGlyphs">Gate on picture plot</text>
<text x="224.7" y="246.7" font-family="Liberation Sans,sans-serif" font-size="11.5" fill="#ff9a00" text-anchor="start" font-weight="bold" textLength="39.2" lengthAdjust="spacingAndGlyphs">23.53%</text>
<path d="M246 510h4v4h-4zM262 510h4v4h-4zM285 510h4v4h-4zM194 514h4v4h-4zM214 516h4v4h-4zM226 516h4v4h-4zM220 518h4v4h-4zM195 522h4v4h-4zM197 525h4v4h-4zM205 521h4v4h-4zM212 522h4v4h-4zM222 522h4v4h-4zM233 523h4v4h-4zM251 525h4v4h-4zM254 524h4v4h-4zM261 525h4v4h-4zM265 523h4v4h-4zM269 525h4v4h-4zM262 527h4v4h-4zM272 529h4v4h-4zM270 531h4v4h-4zM275 533h4v4h-4zM268 534h4v4h-4zM269 536h4v4h-4zM260 532h4v4h-4zM288 531h4v4h-4zM215 529h4v4h-4zM220 529h4v4h-4zM226 529h4v4h-4zM215 532h4v4h-4zM214 535h4v4h-4zM238 529h4v4h-4zM186 535h4v4h-4zM237 535h4v4h-4zM250 534h4v4h-4zM222 537h4v4h-4zM227 537h4v4h-4zM226 542h4v4h-4zM193 541h4v4h-4zM188 543h4v4h-4zM216 544h4v4h-4zM239 542h4v4h-4zM256 540h4v4h-4zM248 541h4v4h-4zM251 544h4v4h-4zM254 546h4v4h-4zM271 542h4v4h-4zM197 546h4v4h-4zM200 547h4v4h-4zM214 550h4v4h-4zM231 549h4v4h-4zM191 552h4v4h-4zM199 553h4v4h-4zM197 555h4v4h-4zM249 553h4v4h-4zM254 553h4v4h-4zM272 548h4v4h-4zM274 551h4v4h-4zM269 553h4v4h-4zM280 548h4v4h-4zM193 559h4v4h-4zM206 559h4v4h-4zM221 558h4v4h-4zM228 556h4v4h-4zM257 559h4v4h-4zM265 558h4v4h-4zM252 563h4v4h-4zM273 559h4v4h-4zM270 563h4v4h-4zM241 562h4v4h-4zM220 564h4v4h-4zM235 565h4v4h-4zM191 566h4v4h-4zM196 567h4v4h-4zM201 569h4v4h-4zM203 572h4v4h-4zM199 576h4v4h-4zM178 573h4v4h-4zM217 572h4v4h-4zM215 576h4v4h-4zM234 571h4v4h-4zM240 570h4v4h-4zM239 575h4v4h-4zM249 569h4v4h-4zM263 568h4v4h-4zM263 571h4v4h-4zM271 568h4v4h-4zM280 572h4v4h-4zM255 576h4v4h-4zM276 578h4v4h-4zM186 580h4v4h-4zM191 581h4v4h-4zM184 584h4v4h-4zM195 585h4v4h-4zM224 581h4v4h-4zM242 582h4v4h-4zM262 580h4v4h-4zM259 583h4v4h-4zM262 585h4v4h-4zM263 587h4v4h-4zM268 584h4v4h-4zM272 588h4v4h-4zM280 586h4v4h-4zM220 590h4v4h-4zM246 590h4v4h-4zM208 592h4v4h-4zM210 595h4v4h-4zM257 591h4v4h-4zM259 595h4v4h-4zM272 594h4v4h-4zM222 598h4v4h-4zM228 598h4v4h-4zM219 602h4v4h-4zM224 602h4v4h-4zM243 596h4v4h-4zM246 599h4v4h-4zM277 598h4v4h-4zM273 600h4v4h-4zM268 603h4v4h-4zM203 607h4v4h-4zM216 608h4v4h-4zM254 609h4v4h-4zM259 608h4v4h-4zM255 611h4v4h-4zM246 612h4v4h-4zM265 612h4v4h-4zM263 615h4v4h-4zM273 612h4v4h-4zM279 613h4v4h-4zM178 615h4v4h-4zM183 618h4v4h-4zM207 619h4v4h-4zM243 621h4v4h-4zM217 529h4v4h-4zM223 529h4v4h-4zM215 531h4v4h-4zM257 525h4v4h-4zM263 525h4v4h-4zM267 526h4v4h-4zM271 527h4v4h-4zM264 529h4v4h-4zM269 532h4v4h-4zM270 535h4v4h-4zM273 531h4v4h-4zM225 537h4v4h-4zM199 547h4v4h-4zM260 581h4v4h-4zM260 584h4v4h-4zM263 584h4v4h-4zM225 599h4v4h-4zM221 600h4v4h-4zM199 568h4v4h-4zM202 570h4v4h-4zM299 514h4v4h-4zM300 521h4v4h-4zM380 519h4v4h-4zM306 529h4v4h-4zM217 625h4v4h-4zM266 625h4v4h-4zM276 627h4v4h-4zM265 632h4v4h-4zM191 635h4v4h-4zM246 638h4v4h-4zM249 644h4v4h-4zM260 642h4v4h-4zM262 645h4v4h-4zM265 650h4v4h-4zM224 653h4v4h-4zM198 655h4v4h-4zM187 659h4v4h-4zM227 660h4v4h-4zM231 664h4v4h-4zM205 664h4v4h-4zM246 661h4v4h-4zM250 661h4v4h-4zM273 664h4v4h-4zM269 668h4v4h-4zM287 665h4v4h-4zM223 673h4v4h-4zM263 677h4v4h-4zM267 677h4v4h-4zM194 691h4v4h-4zM236 709h4v4h-4zM258 732h4v4h-4zM304 708h4v4h-4z" fill="#000" shape-rendering="crispEdges"/>
<path d="M284 551h4v4h-4zM283 582h4v4h-4zM288 534h4v4h-4zM290 540h4v4h-4zM283 552h4v4h-4zM281 559h4v4h-4zM283 581h4v4h-4zM287 585h4v4h-4zM281 590h4v4h-4zM285 594h4v4h-4zM286 610h4v4h-4zM283 617h4v4h-4zM319 532h4v4h-4zM341 532h4v4h-4zM295 537h4v4h-4zM305 541h4v4h-4zM318 541h4v4h-4zM296 549h4v4h-4zM292 551h4v4h-4zM310 549h4v4h-4zM318 549h4v4h-4zM293 556h4v4h-4zM319 563h4v4h-4zM296 564h4v4h-4zM294 566h4v4h-4zM300 567h4v4h-4zM310 567h4v4h-4zM333 565h4v4h-4zM293 574h4v4h-4zM298 576h4v4h-4zM327 575h4v4h-4zM333 573h4v4h-4zM345 572h4v4h-4zM308 580h4v4h-4zM297 582h4v4h-4zM299 584h4v4h-4zM353 592h4v4h-4zM305 599h4v4h-4zM315 602h4v4h-4zM314 604h4v4h-4zM400 603h4v4h-4zM308 610h4v4h-4zM294 620h4v4h-4zM283 631h4v4h-4zM289 637h4v4h-4zM286 642h4v4h-4zM305 635h4v4h-4zM295 641h4v4h-4z" fill="#ff0000" shape-rendering="crispEdges"/>
<path d="M404.500 534.500H282.500V665.500H404.500" fill="none" stroke="#ff0000" stroke-width="1" shape-rendering="crispEdges"/>
<rect x="177" y="510" width="2" height="228" fill="#0a246a"/>
<rect x="177" y="736" width="228" height="2" fill="#0a246a"/>
<path d="M173.5 510.5h3.5 M175.5 524.6h1.5 M175.5 538.8h1.5 M175.5 552.9h1.5 M173.5 567.0h3.5 M175.5 581.1h1.5 M175.5 595.2h1.5 M175.5 609.4h1.5 M173.5 623.5h3.5 M175.5 637.6h1.5 M175.5 651.8h1.5 M175.5 665.9h1.5 M173.5 680.0h3.5 M175.5 694.1h1.5 M175.5 708.2h1.5 M175.5 722.4h1.5 M173.5 736.5h3.5 M178.0 738v3.5 M192.1 738v2 M206.1 738v2 M220.2 738v2 M234.2 738v3.5 M248.3 738v2 M262.4 738v2 M276.4 738v2 M290.5 738v3.5 M304.6 738v2 M318.6 738v2 M332.7 738v2 M346.8 738v3.5 M360.8 738v2 M374.9 738v2 M388.9 738v2 M403.0 738v3.5" stroke="#0a246a" stroke-width="1" fill="none"/>
<text x="148.8" y="513.2" font-family="Liberation Sans,sans-serif" font-size="8.2" fill="#7f7fd2" text-anchor="start" textLength="22.2" lengthAdjust="spacing">0.955</text>
<text x="148.8" y="569.3" font-family="Liberation Sans,sans-serif" font-size="8.2" fill="#7f7fd2" text-anchor="start" textLength="22.2" lengthAdjust="spacing">0.775</text>
<text x="148.8" y="626.0" font-family="Liberation Sans,sans-serif" font-size="8.2" fill="#7f7fd2" text-anchor="start" textLength="22.2" lengthAdjust="spacing">0.595</text>
<text x="148.8" y="683.1" font-family="Liberation Sans,sans-serif" font-size="8.2" fill="#7f7fd2" text-anchor="start" textLength="22.2" lengthAdjust="spacing">0.415</text>
<text x="148.8" y="739.5" font-family="Liberation Sans,sans-serif" font-size="8.2" fill="#7f7fd2" text-anchor="start" textLength="22.2" lengthAdjust="spacing">0.235</text>
<text x="170.875" y="750.2" font-family="Liberation Sans,sans-serif" font-size="8.2" fill="#7f7fd2" text-anchor="start" textLength="14.249999999999998" lengthAdjust="spacing">133</text>
<text x="227.575" y="750.2" font-family="Liberation Sans,sans-serif" font-size="8.2" fill="#7f7fd2" text-anchor="start" textLength="14.249999999999998" lengthAdjust="spacing">793</text>
<text x="281.35" y="750.2" font-family="Liberation Sans,sans-serif" font-size="8.2" fill="#7f7fd2" text-anchor="start" textLength="19.3" lengthAdjust="spacing">1454</text>
<text x="338.35" y="750.2" font-family="Liberation Sans,sans-serif" font-size="8.2" fill="#7f7fd2" text-anchor="start" textLength="19.3" lengthAdjust="spacing">2114</text>
<text x="394.35" y="750.2" font-family="Liberation Sans,sans-serif" font-size="8.2" fill="#7f7fd2" text-anchor="start" textLength="19.3" lengthAdjust="spacing">2774</text>
<text x="242.8" y="763.9" font-family="Liberation Sans,sans-serif" font-size="11.6" fill="#000080" text-anchor="start" textLength="95.6" lengthAdjust="spacing">AreaShape_Area</text>
<rect x="229.5" y="489.5" width="80" height="15" fill="#fff" stroke="#9c1c28" stroke-width="1"/>
<text x="231.9" y="500.9" font-family="Liberation Sans,sans-serif" font-size="10.7" fill="#000080" text-anchor="start" textLength="74.7" lengthAdjust="spacing">cells_10.cpout</text>
<text x="144" y="689.5" font-family="Liberation Sans,sans-serif" font-size="11.6" fill="#000080" text-anchor="start" textLength="132.8" lengthAdjust="spacing" transform="rotate(-90 144 689.5)">AreaShape_Eccentricity</text>
<text x="300" y="684.6" font-family="Liberation Sans,sans-serif" font-size="11.5" fill="#ff0000" text-anchor="start" font-weight="bold" textLength="82.9" lengthAdjust="spacingAndGlyphs">Cell of interest</text>
<text x="300" y="697.7" font-family="Liberation Sans,sans-serif" font-size="11.5" fill="#ff0000" text-anchor="start" font-weight="bold" textLength="37.5" lengthAdjust="spacingAndGlyphs">21.43%</text>
</svg>
<div id="bottom"></div>
<svg style="left:0;top:800px" width="910" height="58" viewBox="0 800 910 58">
<defs><linearGradient id="gnav" x1="0" y1="0" x2="1" y2="1"><stop offset="0" stop-color="#5a9ee0"/><stop offset="1" stop-color="#2a66b4"/></linearGradient><linearGradient id="gglass" x1="0" y1="0" x2="1" y2="1"><stop offset="0" stop-color="#fafafa"/><stop offset="1" stop-color="#c4c4c4"/></linearGradient></defs>
<path d="M250.8 812.500V829.500q0 3 3 3H271L289 812.500" fill="#fdfdfd" stroke="#a8a8a8" stroke-width="1"/>
<path d="M146.5 812.500V829.500q0 3 3 3H188.6L206.5 812.500" fill="#fdfdfd" stroke="#a8a8a8" stroke-width="1"/>
<path d="M198.5 812.500V829.500q0 3 3 3H240.5L258.5 812.500" fill="#fdfdfd" stroke="#a8a8a8" stroke-width="1"/>
<circle cx="12" cy="821.800" r="7.200" fill="url(#gnav)"/>
<path d="M12.0 818.300l-3.3 3.500l3.3 3.500" fill="none" stroke="#fff" stroke-width="1.700" stroke-linecap="round" stroke-linejoin="round"/>
<path d="M16.0 818.300l-3.3 3.500l3.3 3.500" fill="none" stroke="#fff" stroke-width="1.700" stroke-linecap="round" stroke-linejoin="round"/>
<circle cx="33.8" cy="821.800" r="7.200" fill="url(#gnav)"/>
<path d="M35.699999999999996 818.300l-3.3 3.500l3.3 3.500" fill="none" stroke="#fff" stroke-width="1.700" stroke-linecap="round" stroke-linejoin="round"/>
<circle cx="103" cy="821.800" r="7.200" fill="url(#gnav)"/>
<path d="M101.10000000000001 818.300l3.3 3.500l-3.3 3.500" fill="none" stroke="#fff" stroke-width="1.700" stroke-linecap="round" stroke-linejoin="round"/>
<circle cx="125" cy="821.800" r="7.200" fill="url(#gnav)"/>
<path d="M125.0 818.300l3.3 3.500l-3.3 3.500" fill="none" stroke="#fff" stroke-width="1.700" stroke-linecap="round" stroke-linejoin="round"/>
<path d="M121.0 818.300l3.3 3.500l-3.3 3.500" fill="none" stroke="#fff" stroke-width="1.700" stroke-linecap="round" stroke-linejoin="round"/>
<rect x="63.5" y="843.5" width="109" height="3" fill="#e7eaea" stroke="#d6d6d6" stroke-width="1"/>
<path d="M84.500 838.500h7v8l-3.500 3l-3.500-3z" fill="#dcdcdc" stroke="#9e9e9e" stroke-width="1"/>
<path d="M256.700 817.500h9v10h-9z" fill="#fff" stroke="#3f78c0" stroke-width="1"/><path d="M258.500 821.500h5.500M258.500 823.500h5.500M258.500 825.500h5.500" stroke="#9ab6da" stroke-width="1"/>
<path d="M263.300 815.200v7M259.800 818.700h7" stroke="#1a8a1a" stroke-width="3.200"/><path d="M263.300 816v5.400M260.600 818.700h5.400" stroke="#34d234" stroke-width="1.500"/>
<path d="M209.500 848.700l4.500 4" stroke="#3b7a74" stroke-width="2.400" stroke-linecap="round"/><circle cx="205.900" cy="845" r="4.900" fill="url(#gglass)" stroke="#8e8e8e" stroke-width="1.300"/>
<rect x="262" y="840.200" width="3.800" height="13.200" rx="1.600" fill="#d0d0d0"/><path d="M262 849h3.800v2.8a1.900 1.900 0 0 1 -3.800 0z" fill="#3f7fd0"/>
<rect x="267.2" y="840.200" width="3.800" height="13.200" rx="1.600" fill="#d0d0d0"/><path d="M267.2 846.5h3.800v5.3a1.900 1.900 0 0 1 -3.800 0z" fill="#d02a2a"/>
<rect x="272.2" y="840.200" width="3.800" height="13.200" rx="1.600" fill="#d0d0d0"/><path d="M272.2 843.5h3.800v8.3a1.900 1.900 0 0 1 -3.800 0z" fill="#fdb714"/>
<rect x="385.700" y="840.700" width="10" height="12" fill="#fff" stroke="#7a7a7a" stroke-width="1"/><path d="M387.500 843.500h2M391 843.500h3M387.500 846.500h2M391 846.500h3M387.500 849.500h2" stroke="#3f78c0" stroke-width="1.400" stroke-dasharray="1.300 0.700"/><rect x="390.500" y="846.500" width="8" height="7" fill="#2f6fbf"/><path d="M392 850l1.800 1.800l3.200-3.600" fill="none" stroke="#fff" stroke-width="1.200"/>
<path d="M595.900 852.800c0-3.500 2-5.300 5-5.300s5 1.800 5 5.300z" fill="#2f78c8"/><path d="M599.300 847.600l1.600 2.600l1.600-2.600z" fill="#fff"/><circle cx="600.900" cy="844" r="3" fill="#efc98e"/><path d="M597.800 843.700a3.100 3.300 0 0 1 6.200 0c-1-1.200-2-1.700-3.100-1.700s-2.100.5-3.100 1.700z" fill="#555"/>
<path d="M730.800 844.700h5l-2.500 3z" fill="#666"/>
<rect x="745" y="840" width="14" height="14" fill="#e1e1e1" stroke="#d4d4d4" stroke-width="1"/><path d="M747.500 847.500l3.300 3.800l5.500-8.600" fill="none" stroke="#fff" stroke-width="2"/>
</svg>
<div class="abs" style="left:476px;top:573px;width:312px;height:95px;background:#fff"></div>
<div class="abs" style="left:477px;top:576px;width:310px;height:39px;background:#efefef"></div>
<div class="abs" style="left:476px;top:573px;width:312px;height:2px;background:#6b6b6b"></div>
<div class="abs" style="left:476px;top:615px;width:312px;height:1px;background:#a3a3a3"></div>
<div class="abs" style="left:476px;top:633px;width:312px;height:1px;background:#a3a3a3"></div>
<div class="abs" style="left:476px;top:650px;width:312px;height:1px;background:#a3a3a3"></div>
<div class="abs" style="left:476px;top:667px;width:312px;height:1px;background:#a3a3a3"></div>
<div class="abs" style="left:476px;top:575px;width:1px;height:93px;background:#a3a3a3"></div>
<div class="abs" style="left:567px;top:575px;width:1px;height:93px;background:#a3a3a3"></div>
<div class="abs" style="left:606px;top:575px;width:1px;height:93px;background:#a3a3a3"></div>
<div class="abs" style="left:658px;top:575px;width:1px;height:93px;background:#a3a3a3"></div>
<div class="abs" style="left:710px;top:575px;width:1px;height:93px;background:#a3a3a3"></div>
<div class="abs" style="left:748px;top:575px;width:1px;height:93px;background:#a3a3a3"></div>
<div class="abs" style="left:787px;top:575px;width:1px;height:93px;background:#a3a3a3"></div>
<div class="abs" style="left:477px;top:575px;width:310px;height:1px;background:#fff"></div>
<div class="t" style="left:480.5px;top:590.3px;font-size:10px;color:#1a1a1a;line-height:12px;height:12px;transform:scaleX(0.9300);transform-origin:0 0;">Gate</div>
<div class="t" style="left:571.1px;top:583.6px;font-size:10px;color:#1a1a1a;line-height:12px;height:12px;transform:scaleX(0.9300);transform-origin:0 0;"># of</div>
<div class="t" style="left:571.6px;top:595.9px;font-size:10px;color:#1a1a1a;line-height:12px;height:12px;transform:scaleX(0.9616);transform-origin:0 0;">Events</div>
<div class="t" style="left:609.9px;top:577.5px;font-size:10px;color:#1a1a1a;line-height:12px;height:12px;transform:scaleX(0.9300);transform-origin:0 0;">X</div>
<div class="t" style="left:609.9px;top:589.8px;font-size:10px;color:#1a1a1a;line-height:12px;height:12px;transform:scaleX(0.9278);transform-origin:0 0;">Geometric</div>
<div class="t" style="left:609.9px;top:601.7px;font-size:10px;color:#1a1a1a;line-height:12px;height:12px;transform:scaleX(0.9300);transform-origin:0 0;">Mean</div>
<div class="t" style="left:662.2px;top:577.5px;font-size:10px;color:#1a1a1a;line-height:12px;height:12px;transform:scaleX(0.9300);transform-origin:0 0;">Y</div>
<div class="t" style="left:662.2px;top:589.8px;font-size:10px;color:#1a1a1a;line-height:12px;height:12px;transform:scaleX(0.9278);transform-origin:0 0;">Geometric</div>
<div class="t" style="left:662.2px;top:601.7px;font-size:10px;color:#1a1a1a;line-height:12px;height:12px;transform:scaleX(0.9300);transform-origin:0 0;">Mean</div>
<div class="t" style="left:713.8px;top:577.7px;font-size:10px;color:#1a1a1a;line-height:12px;height:12px;transform:scaleX(0.9300);transform-origin:0 0;">% of</div>
<div class="t" style="left:713.8px;top:589.8px;font-size:10px;color:#1a1a1a;line-height:12px;height:12px;transform:scaleX(0.9300);transform-origin:0 0;">gated</div>
<div class="t" style="left:713.8px;top:601.4px;font-size:10px;color:#1a1a1a;line-height:12px;height:12px;transform:scaleX(0.9300);transform-origin:0 0;">cells</div>
<div class="t" style="left:752.1px;top:583.6px;font-size:10px;color:#1a1a1a;line-height:12px;height:12px;transform:scaleX(0.9786);transform-origin:0 0;">% of all</div>
<div class="t" style="left:752.1px;top:595.3px;font-size:10px;color:#1a1a1a;line-height:12px;height:12px;transform:scaleX(0.9300);transform-origin:0 0;">cells</div>
<div class="t" style="left:479.7px;top:619.1px;font-size:10px;color:#1a1a1a;line-height:12px;height:12px;transform:scaleX(0.9300);transform-origin:0 0;">None</div>
<div class="t" style="left:570.2px;top:619.1px;font-size:10px;color:#1a1a1a;line-height:12px;height:12px;transform:scaleX(0.8989);transform-origin:0 0;">238</div>
<div class="t" style="left:609.2px;top:619.1px;font-size:10px;color:#1a1a1a;line-height:12px;height:12px;transform:scaleX(0.8859);transform-origin:0 0;">914.07</div>
<div class="t" style="left:661.2px;top:619.1px;font-size:10px;color:#1a1a1a;line-height:12px;height:12px;transform:scaleX(0.9300);transform-origin:0 0;">0.72</div>
<div class="t" style="left:713.3px;top:619.1px;font-size:10px;color:#1a1a1a;line-height:12px;height:12px;transform:scaleX(0.9300);transform-origin:0 0;">100.00</div>
<div class="t" style="left:751.4px;top:619.1px;font-size:10px;color:#1a1a1a;line-height:12px;height:12px;transform:scaleX(0.9300);transform-origin:0 0;">100.00</div>
<div class="t" style="left:479.7px;top:636.0px;font-size:10px;color:#1a1a1a;line-height:12px;height:12px;transform:scaleX(0.9618);transform-origin:0 0;">Cells of interest</div>
<div class="t" style="left:570.2px;top:636.0px;font-size:10px;color:#1a1a1a;line-height:12px;height:12px;transform:scaleX(0.9300);transform-origin:0 0;">51</div>
<div class="t" style="left:609.2px;top:636.0px;font-size:10px;color:#1a1a1a;line-height:12px;height:12px;transform:scaleX(0.9300);transform-origin:0 0;">1611.37</div>
<div class="t" style="left:661.2px;top:636.0px;font-size:10px;color:#1a1a1a;line-height:12px;height:12px;transform:scaleX(0.9300);transform-origin:0 0;">0.72</div>
<div class="t" style="left:713.3px;top:636.0px;font-size:10px;color:#1a1a1a;line-height:12px;height:12px;transform:scaleX(0.9300);transform-origin:0 0;">21.43</div>
<div class="t" style="left:751.4px;top:636.0px;font-size:10px;color:#1a1a1a;line-height:12px;height:12px;transform:scaleX(0.9300);transform-origin:0 0;">21.43</div>
<div class="t" style="left:479.7px;top:653.0px;font-size:10px;color:#1a1a1a;line-height:12px;height:12px;transform:scaleX(0.9073);transform-origin:0 0;">Gate on picture plot</div>
<div class="t" style="left:570.2px;top:653.0px;font-size:10px;color:#1a1a1a;line-height:12px;height:12px;transform:scaleX(0.9300);transform-origin:0 0;">56</div>
<div class="t" style="left:609.2px;top:653.0px;font-size:10px;color:#1a1a1a;line-height:12px;height:12px;transform:scaleX(0.9300);transform-origin:0 0;">896.02</div>
<div class="t" style="left:661.2px;top:653.0px;font-size:10px;color:#1a1a1a;line-height:12px;height:12px;transform:scaleX(0.9300);transform-origin:0 0;">0.70</div>
<div class="t" style="left:713.3px;top:653.0px;font-size:10px;color:#1a1a1a;line-height:12px;height:12px;transform:scaleX(0.9300);transform-origin:0 0;">23.53</div>
<div class="t" style="left:751.4px;top:653.0px;font-size:10px;color:#1a1a1a;line-height:12px;height:12px;transform:scaleX(0.9300);transform-origin:0 0;">23.53</div>
<div class="abs" style="left:0;top:812px;width:910px;height:1px;background:#c9c9c9"></div>
<div class="abs" style="left:0;top:833px;width:910px;height:1px;background:#fafafa"></div>
<div class="abs" style="left:0;top:812px;width:1px;height:21px;background:#9a9a9a"></div>
<div class="abs" style="left:45px;top:812px;width:47px;height:21px;background:#fff;border:1px solid #ababab"></div>
<div class="t" style="left:60.3px;top:815px;font-size:12.5px;color:#1a1a1a;line-height:16px;height:16px;transform:scaleX(0.8863);transform-origin:0 0;">2/2</div>
<div class="abs" style="left:2px;top:836px;width:40px;height:22px;background:#fff;border:1px solid #ababab"></div>
<div class="t" style="left:5px;top:839px;font-size:12.5px;color:#1a1a1a;line-height:16px;height:16px;transform:scaleX(0.8794);transform-origin:0 0;">90%</div>
<div class="t" style="left:47px;top:839.5px;font-size:12.5px;color:#444;line-height:16px;height:16px;transform:scaleX(0.8409);transform-origin:0 0;">-</div>
<div class="t" style="left:184.5px;top:839.5px;font-size:12.5px;color:#444;line-height:16px;height:16px;transform:scaleX(0.8218);transform-origin:0 0;">+</div>
<div class="t" style="left:219.1px;top:839px;font-size:12.5px;color:#444;line-height:16px;height:16px;transform:scaleX(0.9703);transform-origin:0 0;">Zoom</div>
<div class="t" style="left:280.5px;top:839px;font-size:12.5px;color:#444;line-height:16px;height:16px;transform:scaleX(0.9356);transform-origin:0 0;">No panel is active</div>
<div class="t" style="left:402.7px;top:839px;font-size:12.5px;color:#444;line-height:16px;height:16px;transform:scaleX(0.9394);transform-origin:0 0;">Background tasks have completed</div>
<div class="t" style="left:612.9px;top:839px;font-size:12.5px;color:#444;line-height:16px;height:16px;transform:scaleX(0.9278);transform-origin:0 0;">Logged in as: Default</div>
<div class="t" style="left:763.6px;top:839px;font-size:12.5px;color:#9e9e9e;line-height:16px;height:16px;transform:scaleX(0.9253);transform-origin:0 0;">No errors</div>
<div class="t" style="left:841.4px;top:839px;font-size:12.5px;color:#444;line-height:16px;height:16px;transform:scaleX(0.9758);transform-origin:0 0;">Modified</div>
<div class="t" style="left:151.5px;top:815px;font-size:12.5px;color:#111;line-height:16px;height:16px;transform:scaleX(0.8254);transform-origin:0 0;">Page 1</div>
<div class="t" style="left:203.5px;top:815px;font-size:12.5px;color:#000;line-height:16px;height:16px;font-weight:bold;transform:scaleX(0.8561);transform-origin:0 0;">Page 2</div>
</body></html>
